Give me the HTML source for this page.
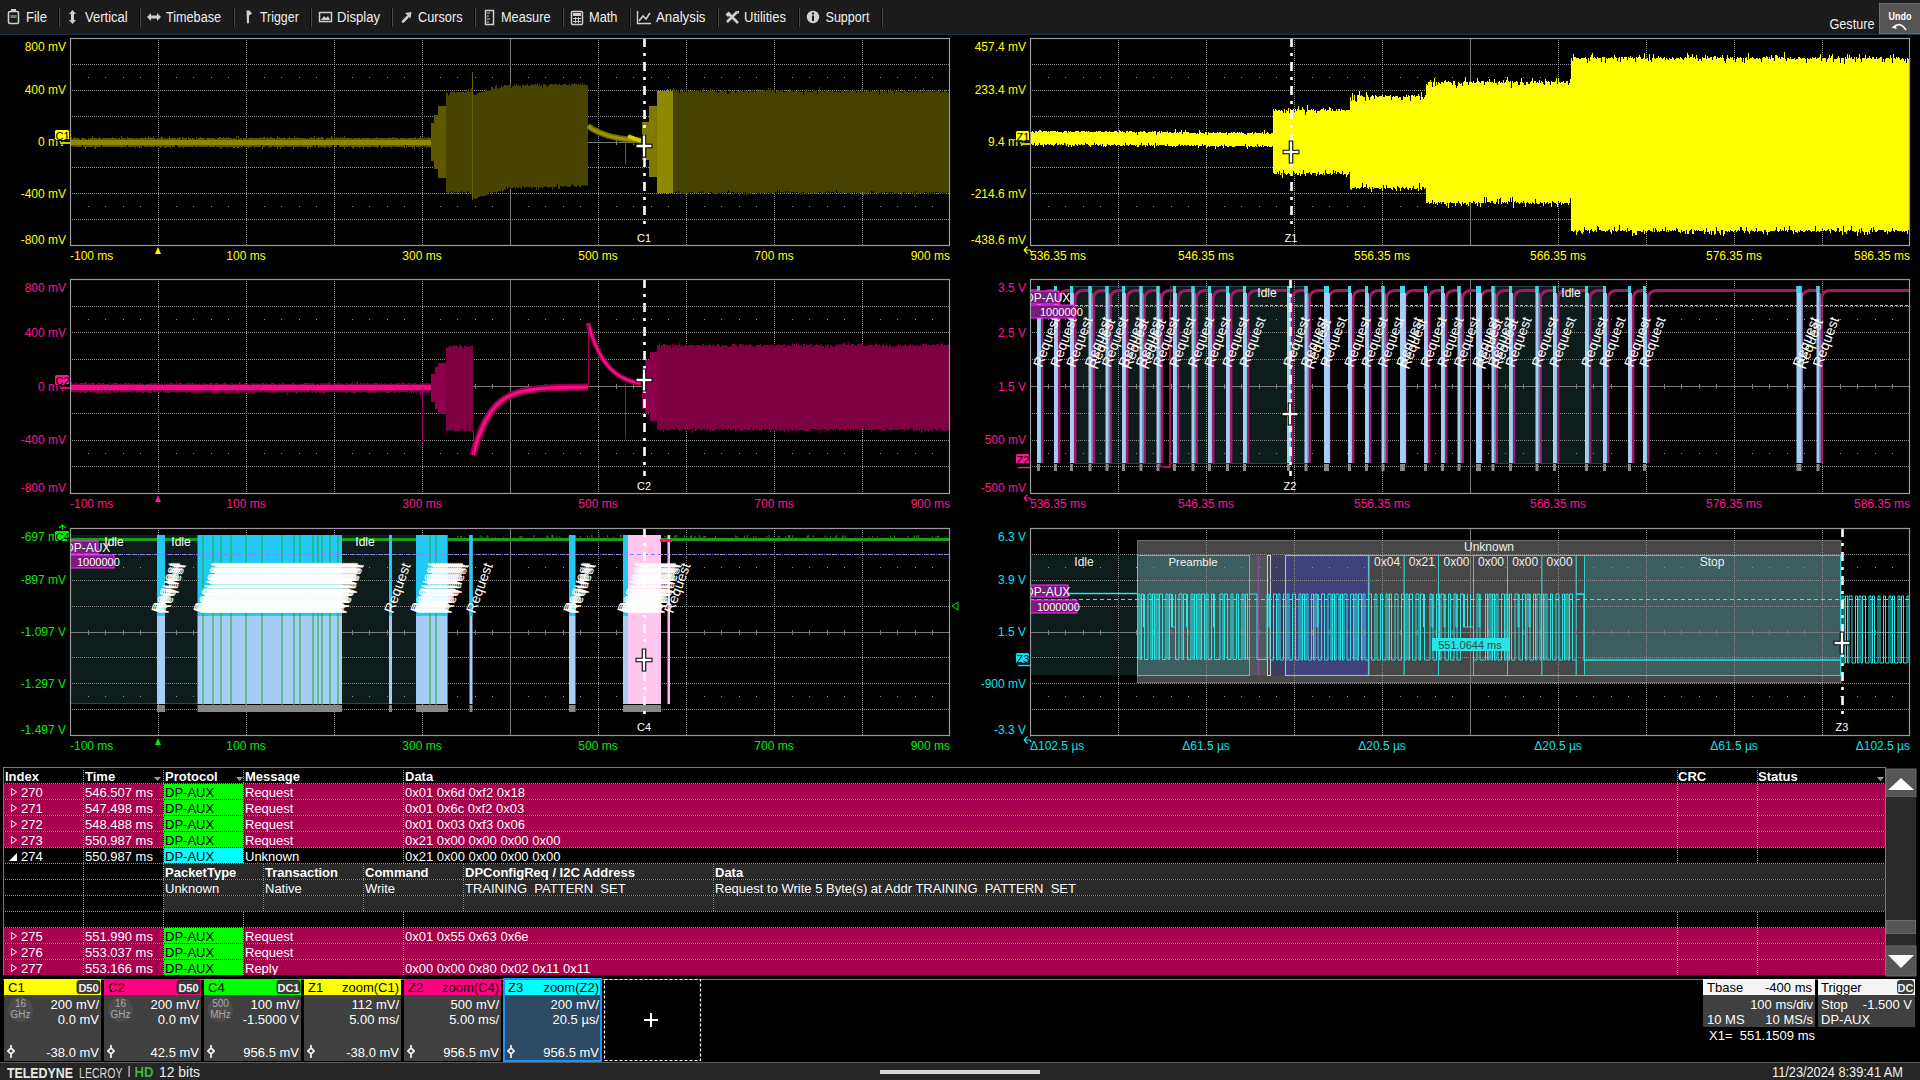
<!DOCTYPE html><html><head><meta charset="utf-8"><title>scope</title><style>
html,body{margin:0;padding:0;background:#000;width:1920px;height:1080px;overflow:hidden;}
svg text{font-family:"Liberation Sans", sans-serif;}
</style></head><body>
<svg width="1920" height="1080" viewBox="0 0 1920 1080" style="position:absolute;left:0;top:0;display:block" font-family="Liberation Sans, sans-serif">
<rect x="0" y="0" width="1920" height="1080" fill="#000" />
<defs><clipPath id="cl4"><rect x="1030" y="279" width="880" height="214"/></clipPath><clipPath id="cl5"><rect x="70" y="528" width="880" height="207"/></clipPath><clipPath id="cl6"><rect x="1030" y="528" width="880" height="207"/></clipPath></defs>
<rect x="0" y="0" width="1920" height="34" fill="#1b1b1b" />
<rect x="0" y="34" width="1920" height="1" fill="#1c3240" />
<rect x="58" y="8" width="1" height="19" fill="#050505" />
<rect x="59" y="8" width="1" height="19" fill="#4a4a4a" />
<rect x="139" y="8" width="1" height="19" fill="#050505" />
<rect x="140" y="8" width="1" height="19" fill="#4a4a4a" />
<rect x="233" y="8" width="1" height="19" fill="#050505" />
<rect x="234" y="8" width="1" height="19" fill="#4a4a4a" />
<rect x="310" y="8" width="1" height="19" fill="#050505" />
<rect x="311" y="8" width="1" height="19" fill="#4a4a4a" />
<rect x="391" y="8" width="1" height="19" fill="#050505" />
<rect x="392" y="8" width="1" height="19" fill="#4a4a4a" />
<rect x="474" y="8" width="1" height="19" fill="#050505" />
<rect x="475" y="8" width="1" height="19" fill="#4a4a4a" />
<rect x="562" y="8" width="1" height="19" fill="#050505" />
<rect x="563" y="8" width="1" height="19" fill="#4a4a4a" />
<rect x="629" y="8" width="1" height="19" fill="#050505" />
<rect x="630" y="8" width="1" height="19" fill="#4a4a4a" />
<rect x="717" y="8" width="1" height="19" fill="#050505" />
<rect x="718" y="8" width="1" height="19" fill="#4a4a4a" />
<rect x="798" y="8" width="1" height="19" fill="#050505" />
<rect x="799" y="8" width="1" height="19" fill="#4a4a4a" />
<rect x="881" y="8" width="1" height="19" fill="#050505" />
<rect x="882" y="8" width="1" height="19" fill="#4a4a4a" />
<text x="26" y="22.3" font-size="14" fill="#f0f0f0" text-anchor="start" font-weight="normal" textLength="21" lengthAdjust="spacingAndGlyphs" >File</text>
<text x="85" y="22.3" font-size="14" fill="#f0f0f0" text-anchor="start" font-weight="normal" textLength="42.75" lengthAdjust="spacingAndGlyphs" >Vertical</text>
<text x="166" y="22.3" font-size="14" fill="#f0f0f0" text-anchor="start" font-weight="normal" textLength="55" lengthAdjust="spacingAndGlyphs" >Timebase</text>
<text x="260" y="22.3" font-size="14" fill="#f0f0f0" text-anchor="start" font-weight="normal" textLength="38.75" lengthAdjust="spacingAndGlyphs" >Trigger</text>
<text x="337" y="22.3" font-size="14" fill="#f0f0f0" text-anchor="start" font-weight="normal" textLength="43" lengthAdjust="spacingAndGlyphs" >Display</text>
<text x="418" y="22.3" font-size="14" fill="#f0f0f0" text-anchor="start" font-weight="normal" textLength="44.5" lengthAdjust="spacingAndGlyphs" >Cursors</text>
<text x="501" y="22.3" font-size="14" fill="#f0f0f0" text-anchor="start" font-weight="normal" textLength="49.5" lengthAdjust="spacingAndGlyphs" >Measure</text>
<text x="589" y="22.3" font-size="14" fill="#f0f0f0" text-anchor="start" font-weight="normal" textLength="28.5" lengthAdjust="spacingAndGlyphs" >Math</text>
<text x="656" y="22.3" font-size="14" fill="#f0f0f0" text-anchor="start" font-weight="normal" textLength="49.5" lengthAdjust="spacingAndGlyphs" >Analysis</text>
<text x="744" y="22.3" font-size="14" fill="#f0f0f0" text-anchor="start" font-weight="normal" textLength="42" lengthAdjust="spacingAndGlyphs" >Utilities</text>
<text x="825.5" y="22.3" font-size="14" fill="#f0f0f0" text-anchor="start" font-weight="normal" textLength="44" lengthAdjust="spacingAndGlyphs" >Support</text>
<rect x="8.5" y="11.5" width="10" height="12" rx="1.5" fill="none" stroke="#cfcfcf" stroke-width="1.6"/>
<rect x="11" y="9" width="5" height="3" fill="#cfcfcf"/><rect x="10.5" y="15" width="6" height="3" fill="#777"/>
<path d="M72.5 10 L76 14 L74 14 L74 20 L76 20 L72.5 24 L69 20 L71 20 L71 14 L69 14 Z" fill="#cfcfcf"/>
<path d="M147 17 L151 13 L151 15.5 L157 15.5 L157 13 L161 17 L157 21 L157 18.5 L151 18.5 L151 21 Z" fill="#cfcfcf"/>
<path d="M246.5 10.5 L249.5 10.5 L252 13.5 L249 15.5 L249 23 L247 23.5 Z" fill="#cfcfcf"/>
<rect x="319.5" y="12.5" width="12" height="9" fill="none" stroke="#cfcfcf" stroke-width="1.5"/><path d="M321 20 L324 16 L326 18 L328 16 L330 20 Z" fill="#cfcfcf"/>
<path d="M403 21.5 L407.5 17" stroke="#cfcfcf" stroke-width="2.6" stroke-linecap="round"/><path d="M405 13 L411.5 12 L410.5 18.5 Z" fill="#cfcfcf"/>
<rect x="485.5" y="10.5" width="8" height="14" fill="none" stroke="#cfcfcf" stroke-width="1.5"/><path d="M487 13h3M487 16h2M487 19h3M487 22h2" stroke="#cfcfcf" stroke-width="1"/>
<rect x="571.5" y="11.5" width="11" height="13" rx="1" fill="none" stroke="#cfcfcf" stroke-width="1.5"/><rect x="573" y="13" width="8" height="3" fill="#cfcfcf"/><path d="M573 18.5h8M573 21.5h8M575.5 17v6M578.5 17v6" stroke="#cfcfcf" stroke-width="1"/>
<path d="M637.5 11 V23.5 H651" fill="none" stroke="#cfcfcf" stroke-width="1.4"/><path d="M639 21 L643 16 L646 19 L650 13" fill="none" stroke="#cfcfcf" stroke-width="1.6"/>
<path d="M728 13 L738 23 M737 12 L727 22" stroke="#cfcfcf" stroke-width="2.6"/><path d="M725.5 14.5 L728.5 11.5 L731 14 L728 17Z M736 11 L739 11 L739 14Z" fill="#cfcfcf"/>
<circle cx="813" cy="17" r="6.2" fill="#cfcfcf"/><rect x="812" y="15.5" width="2" height="5.5" fill="#1b1b1b"/><rect x="812" y="12.5" width="2" height="2" fill="#1b1b1b"/>
<text x="1829.5" y="29" font-size="14" fill="#f0f0f0" text-anchor="start" font-weight="normal" textLength="45" lengthAdjust="spacingAndGlyphs" >Gesture</text>
<rect x="1879.5" y="3.5" width="42" height="30" fill="#545454" stroke="#6e6e6e" stroke-width="1" />
<text x="1900" y="20" font-size="11" fill="#fff" text-anchor="middle" font-weight="bold" textLength="23" lengthAdjust="spacingAndGlyphs" >Undo</text>
<path d="M1894 27 Q1900 21 1906 30" fill="none" stroke="#fff" stroke-width="1.6"/><path d="M1891.5 27.5 L1896 24.5 L1896.5 29 Z" fill="#fff"/>
<path d="M158.5 40V245 M246.5 40V245 M334.5 40V245 M422.5 40V245 M598.5 40V245 M686.5 40V245 M774.5 40V245 M862.5 40V245 M72 64.5H950 M72 90.5H950 M72 116.5H950 M72 167.5H950 M72 193.5H950 M72 219.5H950" stroke="#8e8e8e" stroke-width="1" stroke-dasharray="1 1" fill="none"/>
<path d="M88 77h1v1h-1z M105 77h1v1h-1z M123 77h1v1h-1z M140 77h1v1h-1z M176 77h1v1h-1z M193 77h1v1h-1z M211 77h1v1h-1z M228 77h1v1h-1z M264 77h1v1h-1z M281 77h1v1h-1z M299 77h1v1h-1z M316 77h1v1h-1z M352 77h1v1h-1z M369 77h1v1h-1z M387 77h1v1h-1z M404 77h1v1h-1z M440 77h1v1h-1z M457 77h1v1h-1z M475 77h1v1h-1z M492 77h1v1h-1z M528 77h1v1h-1z M545 77h1v1h-1z M563 77h1v1h-1z M580 77h1v1h-1z M616 77h1v1h-1z M633 77h1v1h-1z M651 77h1v1h-1z M668 77h1v1h-1z M704 77h1v1h-1z M721 77h1v1h-1z M739 77h1v1h-1z M756 77h1v1h-1z M792 77h1v1h-1z M809 77h1v1h-1z M827 77h1v1h-1z M844 77h1v1h-1z M880 77h1v1h-1z M897 77h1v1h-1z M915 77h1v1h-1z M932 77h1v1h-1z M88 206h1v1h-1z M105 206h1v1h-1z M123 206h1v1h-1z M140 206h1v1h-1z M176 206h1v1h-1z M193 206h1v1h-1z M211 206h1v1h-1z M228 206h1v1h-1z M264 206h1v1h-1z M281 206h1v1h-1z M299 206h1v1h-1z M316 206h1v1h-1z M352 206h1v1h-1z M369 206h1v1h-1z M387 206h1v1h-1z M404 206h1v1h-1z M440 206h1v1h-1z M457 206h1v1h-1z M475 206h1v1h-1z M492 206h1v1h-1z M528 206h1v1h-1z M545 206h1v1h-1z M563 206h1v1h-1z M580 206h1v1h-1z M616 206h1v1h-1z M633 206h1v1h-1z M651 206h1v1h-1z M668 206h1v1h-1z M704 206h1v1h-1z M721 206h1v1h-1z M739 206h1v1h-1z M756 206h1v1h-1z M792 206h1v1h-1z M809 206h1v1h-1z M827 206h1v1h-1z M844 206h1v1h-1z M880 206h1v1h-1z M897 206h1v1h-1z M915 206h1v1h-1z M932 206h1v1h-1z" fill="#8e8e8e"/>
<path d="M510.5 38V245 M70 142.5H950 M88.5 140.0V145.0 M105.5 140.0V145.0 M123.5 140.0V145.0 M140.5 140.0V145.0 M176.5 140.0V145.0 M193.5 140.0V145.0 M211.5 140.0V145.0 M228.5 140.0V145.0 M264.5 140.0V145.0 M281.5 140.0V145.0 M299.5 140.0V145.0 M316.5 140.0V145.0 M352.5 140.0V145.0 M369.5 140.0V145.0 M387.5 140.0V145.0 M404.5 140.0V145.0 M440.5 140.0V145.0 M457.5 140.0V145.0 M475.5 140.0V145.0 M492.5 140.0V145.0 M528.5 140.0V145.0 M545.5 140.0V145.0 M563.5 140.0V145.0 M580.5 140.0V145.0 M616.5 140.0V145.0 M633.5 140.0V145.0 M651.5 140.0V145.0 M668.5 140.0V145.0 M704.5 140.0V145.0 M721.5 140.0V145.0 M739.5 140.0V145.0 M756.5 140.0V145.0 M792.5 140.0V145.0 M809.5 140.0V145.0 M827.5 140.0V145.0 M844.5 140.0V145.0 M880.5 140.0V145.0 M897.5 140.0V145.0 M915.5 140.0V145.0 M932.5 140.0V145.0" stroke="#7a7a7a" stroke-width="1" fill="none"/>
<path d="M1118.5 40V245 M1206.5 40V245 M1294.5 40V245 M1382.5 40V245 M1558.5 40V245 M1646.5 40V245 M1734.5 40V245 M1822.5 40V245 M1032 64.5H1910 M1032 90.5H1910 M1032 116.5H1910 M1032 167.5H1910 M1032 193.5H1910 M1032 219.5H1910" stroke="#8e8e8e" stroke-width="1" stroke-dasharray="1 1" fill="none"/>
<path d="M1048 77h1v1h-1z M1065 77h1v1h-1z M1083 77h1v1h-1z M1100 77h1v1h-1z M1136 77h1v1h-1z M1153 77h1v1h-1z M1171 77h1v1h-1z M1188 77h1v1h-1z M1224 77h1v1h-1z M1241 77h1v1h-1z M1259 77h1v1h-1z M1276 77h1v1h-1z M1312 77h1v1h-1z M1329 77h1v1h-1z M1347 77h1v1h-1z M1364 77h1v1h-1z M1400 77h1v1h-1z M1417 77h1v1h-1z M1435 77h1v1h-1z M1452 77h1v1h-1z M1488 77h1v1h-1z M1505 77h1v1h-1z M1523 77h1v1h-1z M1540 77h1v1h-1z M1576 77h1v1h-1z M1593 77h1v1h-1z M1611 77h1v1h-1z M1628 77h1v1h-1z M1664 77h1v1h-1z M1681 77h1v1h-1z M1699 77h1v1h-1z M1716 77h1v1h-1z M1752 77h1v1h-1z M1769 77h1v1h-1z M1787 77h1v1h-1z M1804 77h1v1h-1z M1840 77h1v1h-1z M1857 77h1v1h-1z M1875 77h1v1h-1z M1892 77h1v1h-1z M1048 206h1v1h-1z M1065 206h1v1h-1z M1083 206h1v1h-1z M1100 206h1v1h-1z M1136 206h1v1h-1z M1153 206h1v1h-1z M1171 206h1v1h-1z M1188 206h1v1h-1z M1224 206h1v1h-1z M1241 206h1v1h-1z M1259 206h1v1h-1z M1276 206h1v1h-1z M1312 206h1v1h-1z M1329 206h1v1h-1z M1347 206h1v1h-1z M1364 206h1v1h-1z M1400 206h1v1h-1z M1417 206h1v1h-1z M1435 206h1v1h-1z M1452 206h1v1h-1z M1488 206h1v1h-1z M1505 206h1v1h-1z M1523 206h1v1h-1z M1540 206h1v1h-1z M1576 206h1v1h-1z M1593 206h1v1h-1z M1611 206h1v1h-1z M1628 206h1v1h-1z M1664 206h1v1h-1z M1681 206h1v1h-1z M1699 206h1v1h-1z M1716 206h1v1h-1z M1752 206h1v1h-1z M1769 206h1v1h-1z M1787 206h1v1h-1z M1804 206h1v1h-1z M1840 206h1v1h-1z M1857 206h1v1h-1z M1875 206h1v1h-1z M1892 206h1v1h-1z" fill="#8e8e8e"/>
<path d="M1470.5 38V245 M1030 142.5H1910 M1048.5 140.0V145.0 M1065.5 140.0V145.0 M1083.5 140.0V145.0 M1100.5 140.0V145.0 M1136.5 140.0V145.0 M1153.5 140.0V145.0 M1171.5 140.0V145.0 M1188.5 140.0V145.0 M1224.5 140.0V145.0 M1241.5 140.0V145.0 M1259.5 140.0V145.0 M1276.5 140.0V145.0 M1312.5 140.0V145.0 M1329.5 140.0V145.0 M1347.5 140.0V145.0 M1364.5 140.0V145.0 M1400.5 140.0V145.0 M1417.5 140.0V145.0 M1435.5 140.0V145.0 M1452.5 140.0V145.0 M1488.5 140.0V145.0 M1505.5 140.0V145.0 M1523.5 140.0V145.0 M1540.5 140.0V145.0 M1576.5 140.0V145.0 M1593.5 140.0V145.0 M1611.5 140.0V145.0 M1628.5 140.0V145.0 M1664.5 140.0V145.0 M1681.5 140.0V145.0 M1699.5 140.0V145.0 M1716.5 140.0V145.0 M1752.5 140.0V145.0 M1769.5 140.0V145.0 M1787.5 140.0V145.0 M1804.5 140.0V145.0 M1840.5 140.0V145.0 M1857.5 140.0V145.0 M1875.5 140.0V145.0 M1892.5 140.0V145.0" stroke="#7a7a7a" stroke-width="1" fill="none"/>
<path d="M158.5 281V493 M246.5 281V493 M334.5 281V493 M422.5 281V493 M598.5 281V493 M686.5 281V493 M774.5 281V493 M862.5 281V493 M72 306.5H950 M72 332.5H950 M72 359.5H950 M72 413.5H950 M72 440.5H950 M72 466.5H950" stroke="#8e8e8e" stroke-width="1" stroke-dasharray="1 1" fill="none"/>
<path d="M88 319h1v1h-1z M105 319h1v1h-1z M123 319h1v1h-1z M140 319h1v1h-1z M176 319h1v1h-1z M193 319h1v1h-1z M211 319h1v1h-1z M228 319h1v1h-1z M264 319h1v1h-1z M281 319h1v1h-1z M299 319h1v1h-1z M316 319h1v1h-1z M352 319h1v1h-1z M369 319h1v1h-1z M387 319h1v1h-1z M404 319h1v1h-1z M440 319h1v1h-1z M457 319h1v1h-1z M475 319h1v1h-1z M492 319h1v1h-1z M528 319h1v1h-1z M545 319h1v1h-1z M563 319h1v1h-1z M580 319h1v1h-1z M616 319h1v1h-1z M633 319h1v1h-1z M651 319h1v1h-1z M668 319h1v1h-1z M704 319h1v1h-1z M721 319h1v1h-1z M739 319h1v1h-1z M756 319h1v1h-1z M792 319h1v1h-1z M809 319h1v1h-1z M827 319h1v1h-1z M844 319h1v1h-1z M880 319h1v1h-1z M897 319h1v1h-1z M915 319h1v1h-1z M932 319h1v1h-1z M88 453h1v1h-1z M105 453h1v1h-1z M123 453h1v1h-1z M140 453h1v1h-1z M176 453h1v1h-1z M193 453h1v1h-1z M211 453h1v1h-1z M228 453h1v1h-1z M264 453h1v1h-1z M281 453h1v1h-1z M299 453h1v1h-1z M316 453h1v1h-1z M352 453h1v1h-1z M369 453h1v1h-1z M387 453h1v1h-1z M404 453h1v1h-1z M440 453h1v1h-1z M457 453h1v1h-1z M475 453h1v1h-1z M492 453h1v1h-1z M528 453h1v1h-1z M545 453h1v1h-1z M563 453h1v1h-1z M580 453h1v1h-1z M616 453h1v1h-1z M633 453h1v1h-1z M651 453h1v1h-1z M668 453h1v1h-1z M704 453h1v1h-1z M721 453h1v1h-1z M739 453h1v1h-1z M756 453h1v1h-1z M792 453h1v1h-1z M809 453h1v1h-1z M827 453h1v1h-1z M844 453h1v1h-1z M880 453h1v1h-1z M897 453h1v1h-1z M915 453h1v1h-1z M932 453h1v1h-1z" fill="#8e8e8e"/>
<path d="M510.5 279V493 M70 386.5H950 M88.5 384.0V389.0 M105.5 384.0V389.0 M123.5 384.0V389.0 M140.5 384.0V389.0 M176.5 384.0V389.0 M193.5 384.0V389.0 M211.5 384.0V389.0 M228.5 384.0V389.0 M264.5 384.0V389.0 M281.5 384.0V389.0 M299.5 384.0V389.0 M316.5 384.0V389.0 M352.5 384.0V389.0 M369.5 384.0V389.0 M387.5 384.0V389.0 M404.5 384.0V389.0 M440.5 384.0V389.0 M457.5 384.0V389.0 M475.5 384.0V389.0 M492.5 384.0V389.0 M528.5 384.0V389.0 M545.5 384.0V389.0 M563.5 384.0V389.0 M580.5 384.0V389.0 M616.5 384.0V389.0 M633.5 384.0V389.0 M651.5 384.0V389.0 M668.5 384.0V389.0 M704.5 384.0V389.0 M721.5 384.0V389.0 M739.5 384.0V389.0 M756.5 384.0V389.0 M792.5 384.0V389.0 M809.5 384.0V389.0 M827.5 384.0V389.0 M844.5 384.0V389.0 M880.5 384.0V389.0 M897.5 384.0V389.0 M915.5 384.0V389.0 M932.5 384.0V389.0" stroke="#7a7a7a" stroke-width="1" fill="none"/>
<path d="M1118.5 281V493 M1206.5 281V493 M1294.5 281V493 M1382.5 281V493 M1558.5 281V493 M1646.5 281V493 M1734.5 281V493 M1822.5 281V493 M1032 306.5H1910 M1032 332.5H1910 M1032 359.5H1910 M1032 413.5H1910 M1032 440.5H1910 M1032 466.5H1910" stroke="#8e8e8e" stroke-width="1" stroke-dasharray="1 1" fill="none"/>
<path d="M1048 319h1v1h-1z M1065 319h1v1h-1z M1083 319h1v1h-1z M1100 319h1v1h-1z M1136 319h1v1h-1z M1153 319h1v1h-1z M1171 319h1v1h-1z M1188 319h1v1h-1z M1224 319h1v1h-1z M1241 319h1v1h-1z M1259 319h1v1h-1z M1276 319h1v1h-1z M1312 319h1v1h-1z M1329 319h1v1h-1z M1347 319h1v1h-1z M1364 319h1v1h-1z M1400 319h1v1h-1z M1417 319h1v1h-1z M1435 319h1v1h-1z M1452 319h1v1h-1z M1488 319h1v1h-1z M1505 319h1v1h-1z M1523 319h1v1h-1z M1540 319h1v1h-1z M1576 319h1v1h-1z M1593 319h1v1h-1z M1611 319h1v1h-1z M1628 319h1v1h-1z M1664 319h1v1h-1z M1681 319h1v1h-1z M1699 319h1v1h-1z M1716 319h1v1h-1z M1752 319h1v1h-1z M1769 319h1v1h-1z M1787 319h1v1h-1z M1804 319h1v1h-1z M1840 319h1v1h-1z M1857 319h1v1h-1z M1875 319h1v1h-1z M1892 319h1v1h-1z M1048 453h1v1h-1z M1065 453h1v1h-1z M1083 453h1v1h-1z M1100 453h1v1h-1z M1136 453h1v1h-1z M1153 453h1v1h-1z M1171 453h1v1h-1z M1188 453h1v1h-1z M1224 453h1v1h-1z M1241 453h1v1h-1z M1259 453h1v1h-1z M1276 453h1v1h-1z M1312 453h1v1h-1z M1329 453h1v1h-1z M1347 453h1v1h-1z M1364 453h1v1h-1z M1400 453h1v1h-1z M1417 453h1v1h-1z M1435 453h1v1h-1z M1452 453h1v1h-1z M1488 453h1v1h-1z M1505 453h1v1h-1z M1523 453h1v1h-1z M1540 453h1v1h-1z M1576 453h1v1h-1z M1593 453h1v1h-1z M1611 453h1v1h-1z M1628 453h1v1h-1z M1664 453h1v1h-1z M1681 453h1v1h-1z M1699 453h1v1h-1z M1716 453h1v1h-1z M1752 453h1v1h-1z M1769 453h1v1h-1z M1787 453h1v1h-1z M1804 453h1v1h-1z M1840 453h1v1h-1z M1857 453h1v1h-1z M1875 453h1v1h-1z M1892 453h1v1h-1z" fill="#8e8e8e"/>
<path d="M1470.5 279V493 M1030 386.5H1910 M1048.5 384.0V389.0 M1065.5 384.0V389.0 M1083.5 384.0V389.0 M1100.5 384.0V389.0 M1136.5 384.0V389.0 M1153.5 384.0V389.0 M1171.5 384.0V389.0 M1188.5 384.0V389.0 M1224.5 384.0V389.0 M1241.5 384.0V389.0 M1259.5 384.0V389.0 M1276.5 384.0V389.0 M1312.5 384.0V389.0 M1329.5 384.0V389.0 M1347.5 384.0V389.0 M1364.5 384.0V389.0 M1400.5 384.0V389.0 M1417.5 384.0V389.0 M1435.5 384.0V389.0 M1452.5 384.0V389.0 M1488.5 384.0V389.0 M1505.5 384.0V389.0 M1523.5 384.0V389.0 M1540.5 384.0V389.0 M1576.5 384.0V389.0 M1593.5 384.0V389.0 M1611.5 384.0V389.0 M1628.5 384.0V389.0 M1664.5 384.0V389.0 M1681.5 384.0V389.0 M1699.5 384.0V389.0 M1716.5 384.0V389.0 M1752.5 384.0V389.0 M1769.5 384.0V389.0 M1787.5 384.0V389.0 M1804.5 384.0V389.0 M1840.5 384.0V389.0 M1857.5 384.0V389.0 M1875.5 384.0V389.0 M1892.5 384.0V389.0" stroke="#7a7a7a" stroke-width="1" fill="none"/>
<path d="M158.5 530V735 M246.5 530V735 M334.5 530V735 M422.5 530V735 M598.5 530V735 M686.5 530V735 M774.5 530V735 M862.5 530V735 M72 554.5H950 M72 580.5H950 M72 606.5H950 M72 657.5H950 M72 683.5H950 M72 709.5H950" stroke="#8e8e8e" stroke-width="1" stroke-dasharray="1 1" fill="none"/>
<path d="M88 567h1v1h-1z M105 567h1v1h-1z M123 567h1v1h-1z M140 567h1v1h-1z M176 567h1v1h-1z M193 567h1v1h-1z M211 567h1v1h-1z M228 567h1v1h-1z M264 567h1v1h-1z M281 567h1v1h-1z M299 567h1v1h-1z M316 567h1v1h-1z M352 567h1v1h-1z M369 567h1v1h-1z M387 567h1v1h-1z M404 567h1v1h-1z M440 567h1v1h-1z M457 567h1v1h-1z M475 567h1v1h-1z M492 567h1v1h-1z M528 567h1v1h-1z M545 567h1v1h-1z M563 567h1v1h-1z M580 567h1v1h-1z M616 567h1v1h-1z M633 567h1v1h-1z M651 567h1v1h-1z M668 567h1v1h-1z M704 567h1v1h-1z M721 567h1v1h-1z M739 567h1v1h-1z M756 567h1v1h-1z M792 567h1v1h-1z M809 567h1v1h-1z M827 567h1v1h-1z M844 567h1v1h-1z M880 567h1v1h-1z M897 567h1v1h-1z M915 567h1v1h-1z M932 567h1v1h-1z M88 696h1v1h-1z M105 696h1v1h-1z M123 696h1v1h-1z M140 696h1v1h-1z M176 696h1v1h-1z M193 696h1v1h-1z M211 696h1v1h-1z M228 696h1v1h-1z M264 696h1v1h-1z M281 696h1v1h-1z M299 696h1v1h-1z M316 696h1v1h-1z M352 696h1v1h-1z M369 696h1v1h-1z M387 696h1v1h-1z M404 696h1v1h-1z M440 696h1v1h-1z M457 696h1v1h-1z M475 696h1v1h-1z M492 696h1v1h-1z M528 696h1v1h-1z M545 696h1v1h-1z M563 696h1v1h-1z M580 696h1v1h-1z M616 696h1v1h-1z M633 696h1v1h-1z M651 696h1v1h-1z M668 696h1v1h-1z M704 696h1v1h-1z M721 696h1v1h-1z M739 696h1v1h-1z M756 696h1v1h-1z M792 696h1v1h-1z M809 696h1v1h-1z M827 696h1v1h-1z M844 696h1v1h-1z M880 696h1v1h-1z M897 696h1v1h-1z M915 696h1v1h-1z M932 696h1v1h-1z" fill="#8e8e8e"/>
<path d="M510.5 528V735 M70 632.5H950 M88.5 630.0V635.0 M105.5 630.0V635.0 M123.5 630.0V635.0 M140.5 630.0V635.0 M176.5 630.0V635.0 M193.5 630.0V635.0 M211.5 630.0V635.0 M228.5 630.0V635.0 M264.5 630.0V635.0 M281.5 630.0V635.0 M299.5 630.0V635.0 M316.5 630.0V635.0 M352.5 630.0V635.0 M369.5 630.0V635.0 M387.5 630.0V635.0 M404.5 630.0V635.0 M440.5 630.0V635.0 M457.5 630.0V635.0 M475.5 630.0V635.0 M492.5 630.0V635.0 M528.5 630.0V635.0 M545.5 630.0V635.0 M563.5 630.0V635.0 M580.5 630.0V635.0 M616.5 630.0V635.0 M633.5 630.0V635.0 M651.5 630.0V635.0 M668.5 630.0V635.0 M704.5 630.0V635.0 M721.5 630.0V635.0 M739.5 630.0V635.0 M756.5 630.0V635.0 M792.5 630.0V635.0 M809.5 630.0V635.0 M827.5 630.0V635.0 M844.5 630.0V635.0 M880.5 630.0V635.0 M897.5 630.0V635.0 M915.5 630.0V635.0 M932.5 630.0V635.0" stroke="#7a7a7a" stroke-width="1" fill="none"/>
<path d="M1118.5 530V735 M1206.5 530V735 M1294.5 530V735 M1382.5 530V735 M1558.5 530V735 M1646.5 530V735 M1734.5 530V735 M1822.5 530V735 M1032 554.5H1910 M1032 580.5H1910 M1032 606.5H1910 M1032 657.5H1910 M1032 683.5H1910 M1032 709.5H1910" stroke="#8e8e8e" stroke-width="1" stroke-dasharray="1 1" fill="none"/>
<path d="M1048 567h1v1h-1z M1065 567h1v1h-1z M1083 567h1v1h-1z M1100 567h1v1h-1z M1136 567h1v1h-1z M1153 567h1v1h-1z M1171 567h1v1h-1z M1188 567h1v1h-1z M1224 567h1v1h-1z M1241 567h1v1h-1z M1259 567h1v1h-1z M1276 567h1v1h-1z M1312 567h1v1h-1z M1329 567h1v1h-1z M1347 567h1v1h-1z M1364 567h1v1h-1z M1400 567h1v1h-1z M1417 567h1v1h-1z M1435 567h1v1h-1z M1452 567h1v1h-1z M1488 567h1v1h-1z M1505 567h1v1h-1z M1523 567h1v1h-1z M1540 567h1v1h-1z M1576 567h1v1h-1z M1593 567h1v1h-1z M1611 567h1v1h-1z M1628 567h1v1h-1z M1664 567h1v1h-1z M1681 567h1v1h-1z M1699 567h1v1h-1z M1716 567h1v1h-1z M1752 567h1v1h-1z M1769 567h1v1h-1z M1787 567h1v1h-1z M1804 567h1v1h-1z M1840 567h1v1h-1z M1857 567h1v1h-1z M1875 567h1v1h-1z M1892 567h1v1h-1z M1048 696h1v1h-1z M1065 696h1v1h-1z M1083 696h1v1h-1z M1100 696h1v1h-1z M1136 696h1v1h-1z M1153 696h1v1h-1z M1171 696h1v1h-1z M1188 696h1v1h-1z M1224 696h1v1h-1z M1241 696h1v1h-1z M1259 696h1v1h-1z M1276 696h1v1h-1z M1312 696h1v1h-1z M1329 696h1v1h-1z M1347 696h1v1h-1z M1364 696h1v1h-1z M1400 696h1v1h-1z M1417 696h1v1h-1z M1435 696h1v1h-1z M1452 696h1v1h-1z M1488 696h1v1h-1z M1505 696h1v1h-1z M1523 696h1v1h-1z M1540 696h1v1h-1z M1576 696h1v1h-1z M1593 696h1v1h-1z M1611 696h1v1h-1z M1628 696h1v1h-1z M1664 696h1v1h-1z M1681 696h1v1h-1z M1699 696h1v1h-1z M1716 696h1v1h-1z M1752 696h1v1h-1z M1769 696h1v1h-1z M1787 696h1v1h-1z M1804 696h1v1h-1z M1840 696h1v1h-1z M1857 696h1v1h-1z M1875 696h1v1h-1z M1892 696h1v1h-1z" fill="#8e8e8e"/>
<path d="M1470.5 528V735 M1030 632.5H1910 M1048.5 630.0V635.0 M1065.5 630.0V635.0 M1083.5 630.0V635.0 M1100.5 630.0V635.0 M1136.5 630.0V635.0 M1153.5 630.0V635.0 M1171.5 630.0V635.0 M1188.5 630.0V635.0 M1224.5 630.0V635.0 M1241.5 630.0V635.0 M1259.5 630.0V635.0 M1276.5 630.0V635.0 M1312.5 630.0V635.0 M1329.5 630.0V635.0 M1347.5 630.0V635.0 M1364.5 630.0V635.0 M1400.5 630.0V635.0 M1417.5 630.0V635.0 M1435.5 630.0V635.0 M1452.5 630.0V635.0 M1488.5 630.0V635.0 M1505.5 630.0V635.0 M1523.5 630.0V635.0 M1540.5 630.0V635.0 M1576.5 630.0V635.0 M1593.5 630.0V635.0 M1611.5 630.0V635.0 M1628.5 630.0V635.0 M1664.5 630.0V635.0 M1681.5 630.0V635.0 M1699.5 630.0V635.0 M1716.5 630.0V635.0 M1752.5 630.0V635.0 M1769.5 630.0V635.0 M1787.5 630.0V635.0 M1804.5 630.0V635.0 M1840.5 630.0V635.0 M1857.5 630.0V635.0 M1875.5 630.0V635.0 M1892.5 630.0V635.0" stroke="#7a7a7a" stroke-width="1" fill="none"/>
<!--WAVES-->
<path d="M70 138V138H71V137H72V139H73V138H74V137H75V138H76V138H77V138H78V138H79V139H80V140H81V138H82V138H83V138H84V138H85V139H86V139H87V140H88V138H89V139H90V138H91V138H92V136H93V138H94V138H95V138H96V138H97V139H98V138H99V137H100V138H101V139H102V138H103V138H104V138H105V138H106V138H107V138H108V138H109V138H110V138H111V138H112V137H113V138H114V138H115V138H116V138H117V139H118V138H119V138H120V139H121V136H122V138H123V138H124V138H125V138H126V139H127V137H128V138H129V138H130V138H131V138H132V138H133V138H134V139H135V138H136V138H137V138H138V139H139V138H140V138H141V138H142V138H143V138H144V138H145V137H146V138H147V138H148V136H149V138H150V137H151V138H152V138H153V137H154V138H155V139H156V139H157V138H158V138H159V138H160V138H161V137H162V137H163V139H164V138H165V138H166V139H167V138H168V138H169V136H170V138H171V138H172V138H173V138H174V138H175V138H176V139H177V138H178V138H179V137H180V138H181V140H182V137H183V138H184V138H185V138H186V138H187V140H188V137H189V138H190V138H191V139H192V138H193V138H194V139H195V140H196V137H197V139H198V138H199V138H200V137H201V138H202V138H203V138H204V138H205V140H206V138H207V138H208V138H209V138H210V138H211V138H212V138H213V138H214V138H215V139H216V139H217V138H218V138H219V137H220V137H221V138H222V138H223V137H224V138H225V138H226V137H227V138H228V137H229V138H230V138H231V138H232V139H233V138H234V138H235V139H236V136H237V140H238V136H239V139H240V138H241V138H242V140H243V138H244V138H245V138H246V137H247V139H248V138H249V138H250V138H251V137H252V138H253V138H254V138H255V138H256V138H257V138H258V138H259V138H260V137H261V138H262V138H263V137H264V137H265V138H266V138H267V137H268V138H269V138H270V137H271V137H272V138H273V138H274V138H275V139H276V138H277V136H278V138H279V137H280V138H281V138H282V138H283V138H284V137H285V138H286V139H287V138H288V138H289V137H290V138H291V138H292V138H293V138H294V136H295V138H296V138H297V137H298V138H299V138H300V138H301V138H302V138H303V138H304V138H305V138H306V139H307V138H308V139H309V138H310V138H311V137H312V138H313V138H314V136H315V139H316V138H317V138H318V137H319V138H320V138H321V137H322V137H323V138H324V140H325V139H326V138H327V138H328V138H329V138H330V138H331V136H332V137H333V139H334V136H335V138H336V137H337V138H338V138H339V138H340V137H341V138H342V137H343V138H344V136H345V138H346V138H347V138H348V138H349V138H350V138H351V138H352V139H353V138H354V138H355V138H356V138H357V138H358V138H359V138H360V139H361V138H362V138H363V138H364V138H365V138H366V138H367V138H368V138H369V138H370V138H371V139H372V138H373V138H374V138H375V138H376V137H377V138H378V138H379V138H380V138H381V138H382V138H383V138H384V138H385V138H386V138H387V138H388V138H389V137H390V138H391V138H392V137H393V138H394V137H395V138H396V138H397V138H398V138H399V139H400V138H401V138H402V138H403V138H404V138H405V138H406V139H407V138H408V138H409V138H410V138H411V138H412V138H413V138H414V138H415V137H416V139H417V138H418V138H419V138H420V136H421V138H422V138H423V138H424V137H425V139H426V138H427V138H428V137H429V138H430V138H431V147V147H430V147H429V147H428V147H427V148H426V146H425V147H424V146H423V147H422V147H421V147H420V147H419V147H418V147H417V147H416V146H415V149H414V147H413V148H412V147H411V147H410V147H409V147H408V146H407V148H406V145H405V148H404V147H403V147H402V147H401V147H400V147H399V147H398V147H397V147H396V147H395V147H394V146H393V147H392V148H391V147H390V147H389V147H388V147H387V147H386V147H385V147H384V147H383V147H382V148H381V147H380V145H379V147H378V148H377V147H376V147H375V147H374V147H373V146H372V147H371V147H370V148H369V147H368V147H367V147H366V147H365V147H364V149H363V147H362V147H361V147H360V148H359V147H358V147H357V147H356V147H355V147H354V149H353V148H352V147H351V146H350V147H349V146H348V147H347V147H346V147H345V149H344V147H343V147H342V147H341V147H340V147H339V145H338V145H337V147H336V147H335V146H334V145H333V146H332V147H331V147H330V148H329V147H328V147H327V146H326V148H325V148H324V147H323V147H322V147H321V147H320V147H319V148H318V146H317V145H316V147H315V147H314V145H313V147H312V147H311V148H310V147H309V148H308V149H307V147H306V147H305V147H304V147H303V147H302V147H301V146H300V147H299V147H298V147H297V147H296V147H295V147H294V149H293V146H292V147H291V147H290V147H289V147H288V147H287V147H286V146H285V147H284V147H283V147H282V147H281V149H280V147H279V147H278V149H277V147H276V147H275V147H274V146H273V146H272V147H271V147H270V148H269V147H268V146H267V146H266V146H265V147H264V147H263V149H262V145H261V147H260V147H259V147H258V147H257V147H256V147H255V148H254V146H253V147H252V147H251V147H250V147H249V148H248V147H247V147H246V147H245V147H244V146H243V147H242V147H241V146H240V147H239V148H238V148H237V147H236V147H235V148H234V148H233V147H232V147H231V147H230V147H229V147H228V148H227V147H226V147H225V147H224V147H223V147H222V149H221V148H220V147H219V147H218V147H217V147H216V146H215V147H214V147H213V147H212V147H211V147H210V147H209V146H208V147H207V147H206V147H205V147H204V147H203V147H202V147H201V147H200V147H199V146H198V147H197V147H196V147H195V146H194V147H193V147H192V147H191V147H190V147H189V147H188V147H187V147H186V147H185V147H184V148H183V147H182V147H181V147H180V148H179V147H178V146H177V145H176V145H175V147H174V147H173V147H172V146H171V148H170V147H169V147H168V147H167V147H166V148H165V148H164V146H163V147H162V147H161V148H160V147H159V147H158V147H157V147H156V146H155V147H154V147H153V147H152V147H151V147H150V147H149V146H148V147H147V147H146V147H145V147H144V146H143V146H142V148H141V147H140V148H139V147H138V147H137V146H136V148H135V147H134V147H133V147H132V147H131V147H130V147H129V147H128V145H127V147H126V147H125V147H124V147H123V147H122V148H121V147H120V147H119V147H118V147H117V147H116V147H115V147H114V147H113V147H112V147H111V147H110V147H109V147H108V147H107V147H106V147H105V147H104V147H103V147H102V145H101V147H100V147H99V147H98V147H97V147H96V149H95V148H94V146H93V147H92V147H91V147H90V147H89V147H88V147H87V147H86V149H85V147H84V147H83V145H82V147H81V147H80V147H79V147H78V147H77V147H76V147H75V147H74V146H73V147H72V146H71V146H70Z" fill="#5a5500" shape-rendering="crispEdges"/>
<path d="M70 140V140H71V140H72V140H73V140H74V140H75V140H76V140H77V140H78V140H79V140H80V140H81V140H82V140H83V140H84V140H85V140H86V140H87V140H88V140H89V140H90V140H91V140H92V140H93V140H94V140H95V140H96V140H97V140H98V140H99V140H100V140H101V140H102V140H103V140H104V140H105V140H106V140H107V140H108V140H109V140H110V140H111V140H112V140H113V140H114V140H115V140H116V140H117V140H118V140H119V140H120V140H121V140H122V140H123V140H124V140H125V140H126V140H127V140H128V140H129V140H130V140H131V140H132V140H133V140H134V140H135V140H136V140H137V140H138V140H139V140H140V140H141V140H142V140H143V140H144V140H145V140H146V140H147V140H148V140H149V140H150V140H151V140H152V140H153V140H154V140H155V140H156V140H157V140H158V140H159V140H160V140H161V140H162V140H163V140H164V140H165V140H166V140H167V140H168V140H169V140H170V140H171V140H172V140H173V140H174V140H175V140H176V140H177V140H178V140H179V140H180V140H181V140H182V140H183V140H184V140H185V140H186V140H187V140H188V140H189V140H190V140H191V140H192V140H193V140H194V140H195V140H196V140H197V140H198V140H199V140H200V140H201V140H202V140H203V140H204V140H205V140H206V140H207V140H208V140H209V140H210V140H211V140H212V140H213V140H214V140H215V140H216V140H217V140H218V140H219V140H220V140H221V140H222V140H223V140H224V140H225V140H226V140H227V140H228V140H229V140H230V140H231V140H232V140H233V140H234V140H235V140H236V140H237V140H238V140H239V140H240V140H241V140H242V140H243V140H244V140H245V140H246V140H247V140H248V140H249V140H250V140H251V140H252V140H253V140H254V140H255V140H256V140H257V140H258V140H259V140H260V140H261V140H262V140H263V140H264V140H265V140H266V140H267V140H268V140H269V140H270V140H271V140H272V140H273V140H274V140H275V140H276V140H277V140H278V140H279V140H280V140H281V140H282V140H283V140H284V140H285V140H286V140H287V140H288V140H289V140H290V140H291V140H292V140H293V140H294V140H295V140H296V140H297V140H298V140H299V140H300V140H301V140H302V140H303V140H304V140H305V140H306V140H307V140H308V140H309V140H310V140H311V140H312V140H313V140H314V140H315V140H316V140H317V140H318V140H319V140H320V140H321V140H322V140H323V140H324V140H325V140H326V140H327V140H328V140H329V140H330V140H331V140H332V140H333V140H334V140H335V140H336V140H337V140H338V140H339V140H340V140H341V140H342V140H343V140H344V140H345V140H346V140H347V140H348V140H349V140H350V140H351V140H352V140H353V140H354V140H355V140H356V140H357V140H358V140H359V140H360V140H361V140H362V140H363V140H364V140H365V140H366V140H367V140H368V140H369V140H370V140H371V140H372V140H373V140H374V140H375V140H376V140H377V140H378V140H379V140H380V140H381V140H382V140H383V140H384V140H385V140H386V140H387V140H388V140H389V140H390V140H391V140H392V140H393V140H394V140H395V140H396V140H397V140H398V140H399V140H400V140H401V140H402V140H403V140H404V140H405V140H406V140H407V140H408V140H409V140H410V140H411V140H412V140H413V140H414V140H415V140H416V140H417V140H418V140H419V140H420V140H421V140H422V140H423V140H424V140H425V140H426V140H427V140H428V140H429V140H430V140H431V145V145H430V145H429V145H428V145H427V145H426V145H425V145H424V145H423V145H422V145H421V145H420V145H419V145H418V145H417V145H416V145H415V145H414V145H413V145H412V145H411V145H410V145H409V145H408V145H407V145H406V145H405V145H404V145H403V145H402V145H401V145H400V145H399V145H398V145H397V145H396V145H395V145H394V145H393V145H392V145H391V145H390V145H389V145H388V145H387V145H386V145H385V145H384V145H383V145H382V145H381V145H380V145H379V145H378V145H377V145H376V145H375V145H374V145H373V145H372V145H371V145H370V145H369V145H368V145H367V145H366V145H365V145H364V145H363V145H362V145H361V145H360V145H359V145H358V145H357V145H356V145H355V145H354V145H353V145H352V145H351V145H350V145H349V145H348V145H347V145H346V145H345V145H344V145H343V145H342V145H341V145H340V145H339V145H338V145H337V145H336V145H335V145H334V145H333V145H332V145H331V145H330V145H329V145H328V145H327V145H326V145H325V145H324V145H323V145H322V145H321V145H320V145H319V145H318V145H317V145H316V145H315V145H314V145H313V145H312V145H311V145H310V145H309V145H308V145H307V145H306V145H305V145H304V145H303V145H302V145H301V145H300V145H299V145H298V145H297V145H296V145H295V145H294V145H293V145H292V145H291V145H290V145H289V145H288V145H287V145H286V145H285V145H284V145H283V145H282V145H281V145H280V145H279V145H278V145H277V145H276V145H275V145H274V145H273V145H272V145H271V145H270V145H269V145H268V145H267V145H266V145H265V145H264V145H263V145H262V145H261V145H260V145H259V145H258V145H257V145H256V145H255V145H254V145H253V145H252V145H251V145H250V145H249V145H248V145H247V145H246V145H245V145H244V145H243V145H242V145H241V145H240V145H239V145H238V145H237V145H236V145H235V145H234V145H233V145H232V145H231V145H230V145H229V145H228V145H227V145H226V145H225V145H224V145H223V145H222V145H221V145H220V145H219V145H218V145H217V145H216V145H215V145H214V145H213V145H212V145H211V145H210V145H209V145H208V145H207V145H206V145H205V145H204V145H203V145H202V145H201V145H200V145H199V145H198V145H197V145H196V145H195V145H194V145H193V145H192V145H191V145H190V145H189V145H188V145H187V145H186V145H185V145H184V145H183V145H182V145H181V145H180V145H179V145H178V145H177V145H176V145H175V145H174V145H173V145H172V145H171V145H170V145H169V145H168V145H167V145H166V145H165V145H164V145H163V145H162V145H161V145H160V145H159V145H158V145H157V145H156V145H155V145H154V145H153V145H152V145H151V145H150V145H149V145H148V145H147V145H146V145H145V145H144V145H143V145H142V145H141V145H140V145H139V145H138V145H137V145H136V145H135V145H134V145H133V145H132V145H131V145H130V145H129V145H128V145H127V145H126V145H125V145H124V145H123V145H122V145H121V145H120V145H119V145H118V145H117V145H116V145H115V145H114V145H113V145H112V145H111V145H110V145H109V145H108V145H107V145H106V145H105V145H104V145H103V145H102V145H101V145H100V145H99V145H98V145H97V145H96V145H95V145H94V145H93V145H92V145H91V145H90V145H89V145H88V145H87V145H86V145H85V145H84V145H83V145H82V145H81V145H80V145H79V145H78V145H77V145H76V145H75V145H74V145H73V145H72V145H71V145H70Z" fill="#8e8800" shape-rendering="crispEdges"/>
<path d="M431 123V123H432V123H433V123H434V115H435V115H436V115H437V115H438V106H439V106H440V106H441V106H442V106H443V106H444V106H445V106H446V178V178H445V178H444V178H443V178H442V178H441V178H440V178H439V178H438V169H437V169H436V169H435V169H434V161H433V161H432V161H431Z" fill="#5e5800" shape-rendering="crispEdges"/>
<path d="M446 92V92H447V93H448V96H449V94H450V92H451V92H452V92H453V91H454V92H455V93H456V92H457V92H458V92H459V92H460V92H461V92H462V92H463V91H464V93H465V90H466V92H467V91H468V89H469V92H470V90H471V88H472V95H473V94H474V95H475V95H476V94H477V93H478V93H479V92H480V93H481V92H482V92H483V92H484V92H485V90H486V90H487V91H488V90H489V91H490V90H491V87H492V87H493V88H494V89H495V86H496V85H497V88H498V89H499V87H500V88H501V86H502V87H503V86H504V85H505V85H506V86H507V85H508V85H509V85H510V85H511V88H512V86H513V86H514V85H515V86H516V84H517V86H518V85H519V86H520V86H521V88H522V85H523V85H524V86H525V85H526V85H527V84H528V86H529V86H530V86H531V84H532V85H533V85H534V84H535V84H536V85H537V83H538V86H539V84H540V86H541V85H542V88H543V84H544V84H545V85H546V85H547V87H548V85H549V85H550V84H551V84H552V84H553V85H554V84H555V84H556V84H557V85H558V85H559V84H560V85H561V85H562V85H563V84H564V84H565V84H566V85H567V85H568V85H569V84H570V86H571V84H572V84H573V84H574V83H575V84H576V84H577V85H578V84H579V85H580V84H581V85H582V83H583V85H584V84H585V85H586V85H587V85H588V186V186H587V185H586V186H585V185H584V186H583V185H582V186H581V187H580V187H579V185H578V186H577V187H576V187H575V186H574V186H573V184H572V185H571V187H570V187H569V187H568V187H567V186H566V186H565V187H564V186H563V187H562V186H561V186H560V189H559V189H558V184H557V187H556V186H555V188H554V187H553V190H552V187H551V187H550V187H549V188H548V187H547V187H546V186H545V187H544V187H543V188H542V187H541V188H540V187H539V190H538V187H537V190H536V187H535V187H534V187H533V188H532V188H531V186H530V188H529V187H528V187H527V187H526V187H525V188H524V187H523V186H522V189H521V188H520V187H519V188H518V188H517V187H516V189H515V187H514V188H513V188H512V188H511V189H510V187H509V188H508V189H507V187H506V190H505V189H504V191H503V192H502V190H501V192H500V191H499V191H498V192H497V193H496V192H495V192H494V192H493V193H492V194H491V193H490V192H489V194H488V195H487V195H486V196H485V196H484V196H483V196H482V197H481V196H480V197H479V197H478V198H477V199H476V199H475V199H474V198H473V198H472V193H471V193H470V193H469V191H468V192H467V193H466V193H465V192H464V192H463V193H462V191H461V192H460V193H459V192H458V194H457V192H456V193H455V192H454V194H453V191H452V194H451V192H450V192H449V193H448V194H447V192H446Z" fill="#474300" shape-rendering="crispEdges"/>
<line x1="472.5" y1="72" x2="472.5" y2="200" stroke="#6a6400" stroke-width="1" />
<path d="M588 126.0 L589 126.7 L590 127.4 L591 128.0 L592 128.7 L593 129.3 L594 129.8 L595 130.4 L596 130.9 L597 131.4 L598 131.8 L599 132.3 L600 132.7 L601 133.1 L602 133.5 L603 133.9 L604 134.3 L605 134.6 L606 134.9 L607 135.3 L608 135.6 L609 135.8 L610 136.1 L611 136.4 L612 136.6 L613 136.9 L614 137.1 L615 137.3 L616 137.5 L617 137.7 L618 137.9 L619 138.1 L620 138.3 L621 138.4 L622 138.6 L623 138.7 L624 138.9 L625 139.0 L626 139.2 L627 139.3 L628 139.4 L629 139.5 L630 139.6 L631 139.7 L632 139.8 L633 139.9 L634 140.0 L635 140.1 L636 140.2 L637 140.3 L638 140.4 L639 140.4 L640 140.5 L641 140.6" stroke="#6e6800" stroke-width="6" fill="none"/>
<path d="M588 126.0 L589 126.7 L590 127.4 L591 128.0 L592 128.7 L593 129.3 L594 129.8 L595 130.4 L596 130.9 L597 131.4 L598 131.8 L599 132.3 L600 132.7 L601 133.1 L602 133.5 L603 133.9 L604 134.3 L605 134.6 L606 134.9 L607 135.3 L608 135.6 L609 135.8 L610 136.1 L611 136.4 L612 136.6 L613 136.9 L614 137.1 L615 137.3 L616 137.5 L617 137.7 L618 137.9 L619 138.1 L620 138.3 L621 138.4 L622 138.6 L623 138.7 L624 138.9 L625 139.0 L626 139.2 L627 139.3 L628 139.4 L629 139.5 L630 139.6 L631 139.7 L632 139.8 L633 139.9 L634 140.0 L635 140.1 L636 140.2 L637 140.3 L638 140.4 L639 140.4 L640 140.5 L641 140.6" stroke="#9c9500" stroke-width="3" fill="none"/>
<path d="M628 136 L641 141" stroke="#d8d000" stroke-width="4"/>
<line x1="625.5" y1="142" x2="625.5" y2="164" stroke="#6a6400" stroke-width="1" />
<path d="M642 122V122H643V122H644V122H645V122H646V122H647V122H648V122H649V106H650V106H651V106H652V106H653V106H654V106H655V106H656V106H657V177V177H656V177H655V177H654V177H653V177H652V177H651V177H650V177H649V160H648V160H647V160H646V160H645V160H644V160H643V160H642Z" fill="#807a00" shape-rendering="crispEdges"/>
<path d="M657 91V91H658V91H659V91H660V91H661V91H662V91H663V91H664V91H665V91H666V91H667V89H668V91H669V91H670V89H671V91H672V91H673V193V193H672V193H671V193H670V193H669V193H668V194H667V193H666V193H665V193H664V193H663V193H662V193H661V193H660V193H659V193H658V193H657Z" fill="#8e8800" shape-rendering="crispEdges"/>
<path d="M673 88V88H674V89H675V91H676V91H677V91H678V90H679V93H680V91H681V88H682V91H683V92H684V90H685V92H686V91H687V92H688V91H689V91H690V91H691V90H692V90H693V91H694V91H695V91H696V90H697V90H698V90H699V91H700V90H701V92H702V91H703V88H704V92H705V91H706V92H707V91H708V90H709V91H710V88H711V90H712V91H713V91H714V91H715V92H716V90H717V92H718V93H719V90H720V91H721V90H722V90H723V91H724V92H725V90H726V90H727V94H728V94H729V89H730V92H731V91H732V91H733V90H734V91H735V93H736V92H737V90H738V91H739V91H740V90H741V91H742V91H743V92H744V92H745V91H746V91H747V91H748V93H749V89H750V91H751V91H752V92H753V91H754V91H755V92H756V91H757V89H758V91H759V89H760V91H761V91H762V91H763V90H764V90H765V91H766V90H767V90H768V88H769V90H770V88H771V91H772V91H773V91H774V89H775V93H776V91H777V90H778V90H779V91H780V90H781V91H782V91H783V92H784V92H785V90H786V92H787V90H788V91H789V89H790V91H791V91H792V90H793V92H794V90H795V91H796V91H797V91H798V92H799V91H800V92H801V92H802V91H803V95H804V92H805V91H806V89H807V92H808V92H809V91H810V92H811V92H812V92H813V91H814V90H815V91H816V90H817V94H818V91H819V87H820V91H821V91H822V91H823V91H824V92H825V90H826V90H827V91H828V91H829V91H830V92H831V91H832V91H833V91H834V92H835V92H836V91H837V92H838V92H839V91H840V93H841V91H842V90H843V90H844V92H845V90H846V91H847V90H848V92H849V91H850V90H851V91H852V91H853V91H854V89H855V91H856V93H857V91H858V91H859V91H860V92H861V88H862V91H863V92H864V91H865V91H866V91H867V90H868V90H869V92H870V90H871V91H872V91H873V91H874V91H875V91H876V92H877V90H878V90H879V95H880V91H881V89H882V91H883V92H884V91H885V91H886V90H887V93H888V91H889V91H890V89H891V91H892V90H893V91H894V94H895V91H896V91H897V91H898V88H899V92H900V92H901V88H902V93H903V90H904V91H905V91H906V90H907V92H908V93H909V90H910V92H911V91H912V91H913V92H914V91H915V91H916V92H917V92H918V90H919V90H920V91H921V90H922V93H923V88H924V92H925V91H926V92H927V90H928V91H929V91H930V91H931V91H932V91H933V90H934V92H935V91H936V90H937V91H938V91H939V89H940V93H941V92H942V91H943V92H944V91H945V89H946V91H947V92H948V93H949V91H950V193V193H949V193H948V192H947V193H946V193H945V194H944V193H943V192H942V193H941V194H940V193H939V192H938V194H937V192H936V192H935V193H934V192H933V194H932V192H931V194H930V192H929V195H928V193H927V192H926V192H925V193H924V192H923V194H922V193H921V193H920V193H919V193H918V193H917V193H916V191H915V197H914V192H913V193H912V192H911V193H910V194H909V193H908V193H907V193H906V193H905V192H904V192H903V194H902V196H901V193H900V194H899V193H898V193H897V194H896V194H895V194H894V193H893V192H892V192H891V194H890V192H889V194H888V194H887V192H886V192H885V193H884V193H883V193H882V192H881V194H880V193H879V195H878V193H877V193H876V193H875V193H874V191H873V192H872V191H871V193H870V193H869V193H868V195H867V194H866V194H865V193H864V196H863V192H862V194H861V193H860V193H859V196H858V193H857V193H856V192H855V193H854V192H853V193H852V194H851V192H850V193H849V194H848V193H847V193H846V194H845V193H844V193H843V194H842V194H841V192H840V193H839V193H838V192H837V190H836V194H835V194H834V192H833V192H832V192H831V193H830V192H829V191H828V193H827V193H826V192H825V194H824V193H823V193H822V193H821V192H820V192H819V193H818V193H817V193H816V194H815V193H814V193H813V194H812V194H811V193H810V192H809V193H808V193H807V195H806V194H805V194H804V192H803V192H802V193H801V195H800V193H799V193H798V193H797V192H796V192H795V194H794V192H793V192H792V192H791V193H790V194H789V191H788V193H787V193H786V191H785V193H784V193H783V192H782V192H781V193H780V190H779V193H778V190H777V194H776V192H775V194H774V194H773V193H772V193H771V195H770V194H769V192H768V193H767V193H766V193H765V193H764V193H763V194H762V193H761V193H760V193H759V194H758V193H757V192H756V194H755V193H754V195H753V193H752V193H751V193H750V193H749V194H748V194H747V196H746V192H745V195H744V192H743V193H742V193H741V192H740V196H739V194H738V192H737V194H736V193H735V194H734V192H733V192H732V192H731V193H730V195H729V190H728V192H727V193H726V193H725V192H724V193H723V192H722V193H721V194H720V193H719V194H718V194H717V194H716V194H715V193H714V193H713V194H712V192H711V192H710V194H709V193H708V193H707V194H706V193H705V193H704V193H703V191H702V193H701V192H700V192H699V193H698V193H697V193H696V193H695V193H694V193H693V192H692V192H691V193H690V192H689V194H688V194H687V193H686V194H685V194H684V194H683V194H682V193H681V193H680V193H679V191H678V194H677V192H676V192H675V193H674V193H673Z" fill="#454100" shape-rendering="crispEdges"/>
<path d="M644.5 38V230" stroke="#fff" stroke-width="2.6" stroke-dasharray="9 6 3 6" fill="none"/>
<text x="644" y="242" font-size="11" fill="#fff" text-anchor="middle" font-weight="normal" >C1</text>
<path d="M644 134.5V157.5M635.5 146H652.5" stroke="#000" stroke-width="4.6"/>
<path d="M644 135.5V156.5M636.5 146H651.5" stroke="#fff" stroke-width="2.4"/>
<path d="M155 254 L158 247 L161 254Z" fill="#ffff00"/>
<rect x="70.5" y="38.5" width="879" height="207" fill="none" stroke="#9a9a9a" stroke-width="1.2"/>
<text x="66" y="51" font-size="12" fill="#ffff00" text-anchor="end" font-weight="normal" >800 mV</text>
<text x="66" y="94.2" font-size="12" fill="#ffff00" text-anchor="end" font-weight="normal" >400 mV</text>
<text x="66" y="146.0" font-size="12" fill="#ffff00" text-anchor="end" font-weight="normal" >0 mV</text>
<text x="66" y="197.8" font-size="12" fill="#ffff00" text-anchor="end" font-weight="normal" >-400 mV</text>
<text x="66" y="243.5" font-size="12" fill="#ffff00" text-anchor="end" font-weight="normal" >-800 mV</text>
<text x="70" y="260" font-size="12" fill="#ffff00" text-anchor="start" font-weight="normal" >-100 ms</text>
<text x="246" y="260" font-size="12" fill="#ffff00" text-anchor="middle" font-weight="normal" >100 ms</text>
<text x="422" y="260" font-size="12" fill="#ffff00" text-anchor="middle" font-weight="normal" >300 ms</text>
<text x="598" y="260" font-size="12" fill="#ffff00" text-anchor="middle" font-weight="normal" >500 ms</text>
<text x="774" y="260" font-size="12" fill="#ffff00" text-anchor="middle" font-weight="normal" >700 ms</text>
<text x="950" y="260" font-size="12" fill="#ffff00" text-anchor="end" font-weight="normal" >900 ms</text>
<path d="M1030 131V131H1031V132H1032V131H1033V132H1034V133H1035V131H1036V131H1037V132H1038V131H1039V130H1040V130H1041V131H1042V132H1043V131H1044V131H1045V131H1046V131H1047V132H1048V131H1049V132H1050V131H1051V131H1052V131H1053V131H1054V131H1055V131H1056V132H1057V131H1058V132H1059V132H1060V132H1061V132H1062V133H1063V132H1064V131H1065V131H1066V131H1067V133H1068V131H1069V132H1070V131H1071V132H1072V132H1073V132H1074V132H1075V131H1076V131H1077V131H1078V131H1079V132H1080V132H1081V131H1082V131H1083V131H1084V131H1085V132H1086V131H1087V132H1088V131H1089V132H1090V132H1091V132H1092V132H1093V132H1094V132H1095V132H1096V131H1097V132H1098V131H1099V131H1100V131H1101V132H1102V132H1103V132H1104V132H1105V131H1106V131H1107V132H1108V132H1109V131H1110V132H1111V132H1112V132H1113V132H1114V131H1115V131H1116V131H1117V132H1118V133H1119V130H1120V131H1121V132H1122V131H1123V132H1124V132H1125V133H1126V131H1127V131H1128V132H1129V131H1130V131H1131V131H1132V132H1133V132H1134V132H1135V133H1136V132H1137V135H1138V132H1139V132H1140V131H1141V132H1142V132H1143V131H1144V131H1145V132H1146V133H1147V133H1148V132H1149V132H1150V132H1151V132H1152V131H1153V132H1154V131H1155V131H1156V135H1157V132H1158V132H1159V131H1160V133H1161V131H1162V132H1163V132H1164V132H1165V132H1166V132H1167V131H1168V133H1169V132H1170V132H1171V133H1172V133H1173V133H1174V132H1175V129H1176V133H1177V132H1178V133H1179V132H1180V132H1181V130H1182V134H1183V132H1184V132H1185V130H1186V132H1187V132H1188V132H1189V133H1190V133H1191V133H1192V133H1193V133H1194V133H1195V133H1196V134H1197V133H1198V134H1199V130H1200V132H1201V133H1202V133H1203V133H1204V134H1205V132H1206V132H1207V135H1208V132H1209V133H1210V133H1211V133H1212V133H1213V132H1214V133H1215V133H1216V133H1217V132H1218V133H1219V132H1220V132H1221V133H1222V133H1223V133H1224V133H1225V133H1226V132H1227V135H1228V133H1229V133H1230V133H1231V132H1232V133H1233V132H1234V132H1235V133H1236V133H1237V132H1238V133H1239V132H1240V133H1241V132H1242V133H1243V133H1244V134H1245V134H1246V135H1247V133H1248V133H1249V133H1250V133H1251V133H1252V132H1253V134H1254V133H1255V132H1256V133H1257V133H1258V133H1259V133H1260V133H1261V133H1262V132H1263V134H1264V130H1265V134H1266V133H1267V132H1268V133H1269V134H1270V134H1271V133H1272V133H1273V146V146H1272V147H1271V147H1270V147H1269V146H1268V147H1267V146H1266V146H1265V146H1264V147H1263V145H1262V147H1261V146H1260V147H1259V146H1258V144H1257V147H1256V146H1255V147H1254V147H1253V147H1252V146H1251V146H1250V147H1249V146H1248V149H1247V147H1246V144H1245V146H1244V146H1243V146H1242V146H1241V146H1240V146H1239V146H1238V146H1237V146H1236V146H1235V147H1234V147H1233V147H1232V146H1231V146H1230V146H1229V147H1228V147H1227V146H1226V146H1225V144H1224V148H1223V146H1222V145H1221V146H1220V146H1219V147H1218V147H1217V146H1216V149H1215V146H1214V146H1213V146H1212V146H1211V146H1210V147H1209V146H1208V147H1207V148H1206V145H1205V145H1204V146H1203V144H1202V146H1201V146H1200V146H1199V148H1198V145H1197V145H1196V146H1195V145H1194V146H1193V146H1192V145H1191V146H1190V146H1189V145H1188V145H1187V146H1186V145H1185V145H1184V146H1183V145H1182V145H1181V146H1180V144H1179V145H1178V146H1177V146H1176V147H1175V146H1174V146H1173V147H1172V146H1171V146H1170V146H1169V146H1168V144H1167V146H1166V146H1165V145H1164V145H1163V145H1162V145H1161V145H1160V145H1159V146H1158V145H1157V146H1156V143H1155V148H1154V145H1153V146H1152V145H1151V146H1150V145H1149V143H1148V146H1147V145H1146V147H1145V145H1144V145H1143V146H1142V143H1141V145H1140V145H1139V147H1138V147H1137V145H1136V146H1135V145H1134V145H1133V145H1132V145H1131V144H1130V145H1129V146H1128V145H1127V145H1126V143H1125V146H1124V145H1123V146H1122V146H1121V146H1120V145H1119V145H1118V145H1117V146H1116V145H1115V144H1114V145H1113V145H1112V145H1111V146H1110V145H1109V145H1108V144H1107V146H1106V147H1105V146H1104V147H1103V144H1102V146H1101V144H1100V145H1099V146H1098V145H1097V144H1096V145H1095V143H1094V145H1093V145H1092V145H1091V147H1090V146H1089V145H1088V144H1087V144H1086V143H1085V145H1084V145H1083V145H1082V144H1081V145H1080V145H1079V144H1078V146H1077V145H1076V144H1075V146H1074V146H1073V145H1072V147H1071V145H1070V145H1069V147H1068V144H1067V146H1066V143H1065V143H1064V145H1063V145H1062V144H1061V145H1060V144H1059V145H1058V145H1057V143H1056V144H1055V145H1054V146H1053V145H1052V145H1051V144H1050V145H1049V144H1048V144H1047V145H1046V145H1045V144H1044V147H1043V145H1042V145H1041V145H1040V143H1039V145H1038V146H1037V145H1036V146H1035V143H1034V145H1033V145H1032V144H1031V144H1030Z" fill="#ffff00" shape-rendering="crispEdges"/>
<path d="M1273 109V109H1274V111H1275V109H1276V110H1277V111H1278V110H1279V110H1280V111H1281V110H1282V111H1283V113H1284V109H1285V113H1286V110H1287V111H1288V108H1289V113H1290V109H1291V110H1292V110H1293V109H1294V113H1295V109H1296V111H1297V109H1298V106H1299V110H1300V110H1301V110H1302V107H1303V109H1304V110H1305V115H1306V112H1307V105H1308V110H1309V110H1310V110H1311V109H1312V110H1313V109H1314V111H1315V110H1316V113H1317V111H1318V111H1319V111H1320V110H1321V109H1322V109H1323V108H1324V110H1325V109H1326V111H1327V110H1328V110H1329V107H1330V108H1331V111H1332V109H1333V111H1334V111H1335V111H1336V109H1337V111H1338V109H1339V109H1340V111H1341V109H1342V110H1343V110H1344V110H1345V111H1346V110H1347V110H1348V110H1349V110H1350V97H1351V101H1352V93H1353V100H1354V95H1355V101H1356V102H1357V95H1358V95H1359V91H1360V96H1361V95H1362V96H1363V97H1364V97H1365V101H1366V92H1367V95H1368V97H1369V100H1370V97H1371V96H1372V95H1373V96H1374V99H1375V95H1376V96H1377V97H1378V97H1379V96H1380V96H1381V96H1382V95H1383V97H1384V97H1385V95H1386V96H1387V96H1388V96H1389V96H1390V95H1391V100H1392V97H1393V96H1394V97H1395V96H1396V96H1397V96H1398V98H1399V97H1400V97H1401V100H1402V100H1403V96H1404V97H1405V97H1406V95H1407V97H1408V95H1409V96H1410V101H1411V95H1412V95H1413V96H1414V95H1415V97H1416V96H1417V96H1418V94H1419V96H1420V100H1421V92H1422V97H1423V99H1424V97H1425V95H1426V84H1427V85H1428V82H1429V82H1430V80H1431V82H1432V87H1433V82H1434V78H1435V86H1436V82H1437V85H1438V82H1439V83H1440V84H1441V82H1442V82H1443V83H1444V81H1445V80H1446V82H1447V82H1448V81H1449V82H1450V82H1451V83H1452V85H1453V81H1454V81H1455V85H1456V88H1457V86H1458V82H1459V83H1460V84H1461V83H1462V86H1463V82H1464V81H1465V77H1466V82H1467V82H1468V85H1469V82H1470V81H1471V82H1472V83H1473V81H1474V83H1475V83H1476V82H1477V78H1478V81H1479V82H1480V83H1481V81H1482V81H1483V81H1484V85H1485V82H1486V82H1487V81H1488V82H1489V79H1490V82H1491V82H1492V82H1493V83H1494V79H1495V83H1496V83H1497V85H1498V82H1499V81H1500V83H1501V82H1502V83H1503V80H1504V83H1505V82H1506V80H1507V77H1508V81H1509V82H1510V81H1511V88H1512V81H1513V83H1514V82H1515V82H1516V81H1517V82H1518V85H1519V85H1520V82H1521V78H1522V82H1523V83H1524V85H1525V85H1526V82H1527V82H1528V84H1529V84H1530V82H1531V81H1532V78H1533V83H1534V81H1535V81H1536V83H1537V82H1538V83H1539V80H1540V83H1541V81H1542V82H1543V84H1544V85H1545V79H1546V81H1547V82H1548V81H1549V82H1550V85H1551V81H1552V82H1553V82H1554V82H1555V81H1556V78H1557V84H1558V78H1559V82H1560V83H1561V82H1562V82H1563V81H1564V83H1565V83H1566V81H1567V81H1568V85H1569V83H1570V79H1571V58H1572V61H1573V54H1574V57H1575V57H1576V58H1577V58H1578V58H1579V59H1580V59H1581V58H1582V58H1583V58H1584V58H1585V57H1586V59H1587V63H1588V58H1589V61H1590V57H1591V55H1592V53H1593V58H1594V57H1595V58H1596V59H1597V57H1598V58H1599V58H1600V58H1601V62H1602V57H1603V57H1604V57H1605V63H1606V58H1607V59H1608V58H1609V58H1610V58H1611V57H1612V58H1613V59H1614V55H1615V57H1616V58H1617V61H1618V58H1619V57H1620V62H1621V57H1622V57H1623V59H1624V57H1625V57H1626V57H1627V60H1628V57H1629V58H1630V56H1631V58H1632V57H1633V59H1634V58H1635V62H1636V57H1637V58H1638V57H1639V55H1640V57H1641V59H1642V59H1643V58H1644V53H1645V59H1646V59H1647V58H1648V61H1649V54H1650V60H1651V62H1652V58H1653V54H1654V58H1655V59H1656V58H1657V58H1658V56H1659V58H1660V57H1661V58H1662V59H1663V58H1664V57H1665V60H1666V58H1667V59H1668V60H1669V58H1670V59H1671V59H1672V57H1673V58H1674V60H1675V59H1676V58H1677V58H1678V58H1679V59H1680V57H1681V58H1682V59H1683V60H1684V58H1685V57H1686V58H1687V53H1688V55H1689V58H1690V57H1691V57H1692V54H1693V58H1694V57H1695V59H1696V55H1697V58H1698V61H1699V59H1700V59H1701V61H1702V57H1703V58H1704V58H1705V55H1706V59H1707V56H1708V58H1709V58H1710V57H1711V57H1712V60H1713V57H1714V56H1715V56H1716V59H1717V57H1718V58H1719V58H1720V57H1721V58H1722V55H1723V58H1724V61H1725V63H1726V59H1727V55H1728V58H1729V59H1730V57H1731V58H1732V57H1733V60H1734V59H1735V62H1736V59H1737V57H1738V58H1739V58H1740V57H1741V58H1742V62H1743V58H1744V63H1745V58H1746V57H1747V60H1748V53H1749V59H1750V58H1751V58H1752V57H1753V58H1754V59H1755V59H1756V58H1757V58H1758V59H1759V58H1760V59H1761V62H1762V58H1763V57H1764V57H1765V58H1766V56H1767V57H1768V59H1769V57H1770V59H1771V55H1772V58H1773V58H1774V61H1775V55H1776V55H1777V56H1778V58H1779V57H1780V59H1781V57H1782V57H1783V58H1784V52H1785V59H1786V61H1787V58H1788V58H1789V59H1790V57H1791V59H1792V59H1793V59H1794V58H1795V60H1796V59H1797V59H1798V57H1799V57H1800V58H1801V59H1802V58H1803V58H1804V58H1805V59H1806V63H1807V58H1808V59H1809V59H1810V58H1811V59H1812V57H1813V58H1814V58H1815V57H1816V59H1817V58H1818V58H1819V57H1820V54H1821V61H1822V59H1823V58H1824V58H1825V58H1826V62H1827V59H1828V58H1829V55H1830V58H1831V56H1832V54H1833V62H1834V59H1835V59H1836V59H1837V58H1838V56H1839V58H1840V63H1841V58H1842V58H1843V58H1844V64H1845V57H1846V59H1847V54H1848V58H1849V55H1850V58H1851V57H1852V59H1853V59H1854V57H1855V62H1856V57H1857V59H1858V58H1859V54H1860V59H1861V62H1862V58H1863V58H1864V58H1865V55H1866V59H1867V58H1868V58H1869V56H1870V58H1871V59H1872V57H1873V57H1874V59H1875V59H1876V57H1877V59H1878V59H1879V58H1880V57H1881V57H1882V62H1883V59H1884V62H1885V59H1886V58H1887V58H1888V58H1889V59H1890V55H1891V58H1892V63H1893V54H1894V58H1895V59H1896V57H1897V58H1898V57H1899V58H1900V60H1901V59H1902V58H1903V59H1904V61H1905V59H1906V63H1907V58H1908V59H1909V58H1910V231V231H1909V230H1908V234H1907V231H1906V231H1905V232H1904V231H1903V232H1902V231H1901V231H1900V231H1899V231H1898V231H1897V230H1896V230H1895V232H1894V231H1893V228H1892V231H1891V232H1890V232H1889V231H1888V234H1887V231H1886V232H1885V232H1884V230H1883V230H1882V230H1881V230H1880V230H1879V230H1878V231H1877V232H1876V232H1875V230H1874V227H1873V232H1872V228H1871V230H1870V234H1869V232H1868V235H1867V232H1866V232H1865V235H1864V232H1863V231H1862V228H1861V233H1860V229H1859V232H1858V236H1857V231H1856V232H1855V232H1854V231H1853V231H1852V226H1851V230H1850V231H1849V230H1848V231H1847V234H1846V232H1845V232H1844V226H1843V235H1842V231H1841V231H1840V232H1839V228H1838V228H1837V231H1836V232H1835V231H1834V230H1833V230H1832V229H1831V233H1830V231H1829V229H1828V230H1827V231H1826V231H1825V230H1824V231H1823V228H1822V231H1821V231H1820V232H1819V231H1818V231H1817V232H1816V226H1815V231H1814V231H1813V231H1812V232H1811V231H1810V230H1809V230H1808V231H1807V230H1806V231H1805V232H1804V232H1803V231H1802V231H1801V230H1800V232H1799V231H1798V233H1797V232H1796V232H1795V230H1794V234H1793V231H1792V230H1791V230H1790V226H1789V230H1788V232H1787V230H1786V231H1785V227H1784V231H1783V230H1782V231H1781V229H1780V231H1779V232H1778V231H1777V227H1776V230H1775V231H1774V231H1773V231H1772V231H1771V231H1770V232H1769V232H1768V235H1767V232H1766V230H1765V230H1764V234H1763V232H1762V231H1761V231H1760V231H1759V231H1758V232H1757V228H1756V231H1755V232H1754V231H1753V231H1752V230H1751V231H1750V234H1749V232H1748V231H1747V227H1746V231H1745V233H1744V231H1743V230H1742V227H1741V227H1740V231H1739V230H1738V231H1737V232H1736V230H1735V231H1734V232H1733V231H1732V231H1731V230H1730V232H1729V231H1728V232H1727V231H1726V231H1725V234H1724V236H1723V230H1722V230H1721V235H1720V233H1719V231H1718V231H1717V227H1716V234H1715V235H1714V231H1713V231H1712V235H1711V231H1710V234H1709V232H1708V232H1707V228H1706V232H1705V234H1704V230H1703V231H1702V231H1701V231H1700V231H1699V230H1698V231H1697V230H1696V231H1695V230H1694V234H1693V234H1692V229H1691V230H1690V231H1689V234H1688V234H1687V230H1686V234H1685V231H1684V231H1683V232H1682V230H1681V233H1680V232H1679V232H1678V229H1677V228H1676V231H1675V230H1674V231H1673V230H1672V231H1671V231H1670V230H1669V232H1668V230H1667V232H1666V227H1665V231H1664V231H1663V229H1662V231H1661V231H1660V232H1659V231H1658V232H1657V230H1656V228H1655V232H1654V228H1653V232H1652V231H1651V231H1650V230H1649V230H1648V231H1647V232H1646V231H1645V234H1644V230H1643V232H1642V232H1641V231H1640V231H1639V231H1638V231H1637V235H1636V235H1635V233H1634V233H1633V236H1632V230H1631V230H1630V231H1629V231H1628V228H1627V232H1626V230H1625V231H1624V231H1623V230H1622V231H1621V231H1620V225H1619V230H1618V231H1617V232H1616V231H1615V227H1614V231H1613V230H1612V234H1611V232H1610V229H1609V230H1608V231H1607V231H1606V232H1605V231H1604V231H1603V231H1602V231H1601V230H1600V230H1599V227H1598V226H1597V232H1596V230H1595V231H1594V232H1593V231H1592V229H1591V230H1590V233H1589V230H1588V231H1587V230H1586V230H1585V227H1584V232H1583V234H1582V233H1581V231H1580V230H1579V231H1578V232H1577V235H1576V230H1575V231H1574V232H1573V231H1572V231H1571V198H1570V203H1569V205H1568V203H1567V203H1566V203H1565V203H1564V204H1563V203H1562V205H1561V202H1560V203H1559V201H1558V207H1557V204H1556V203H1555V203H1554V202H1553V201H1552V207H1551V203H1550V203H1549V204H1548V202H1547V203H1546V204H1545V202H1544V206H1543V203H1542V203H1541V202H1540V204H1539V204H1538V204H1537V203H1536V199H1535V204H1534V203H1533V202H1532V204H1531V203H1530V204H1529V203H1528V202H1527V203H1526V207H1525V203H1524V201H1523V203H1522V202H1521V203H1520V204H1519V203H1518V202H1517V203H1516V201H1515V202H1514V208H1513V197H1512V202H1511V198H1510V202H1509V201H1508V204H1507V202H1506V203H1505V202H1504V203H1503V202H1502V204H1501V198H1500V199H1499V204H1498V199H1497V202H1496V204H1495V204H1494V203H1493V201H1492V201H1491V203H1490V202H1489V202H1488V202H1487V197H1486V203H1485V197H1484V203H1483V203H1482V203H1481V207H1480V203H1479V202H1478V206H1477V203H1476V204H1475V202H1474V201H1473V203H1472V203H1471V202H1470V202H1469V206H1468V204H1467V205H1466V203H1465V203H1464V204H1463V202H1462V206H1461V204H1460V203H1459V201H1458V203H1457V203H1456V206H1455V203H1454V203H1453V203H1452V203H1451V202H1450V203H1449V208H1448V203H1447V206H1446V204H1445V204H1444V202H1443V202H1442V204H1441V202H1440V203H1439V202H1438V205H1437V203H1436V204H1435V202H1434V204H1433V200H1432V203H1431V203H1430V204H1429V202H1428V203H1427V203H1426V188H1425V189H1424V187H1423V187H1422V190H1421V189H1420V183H1419V191H1418V188H1417V189H1416V189H1415V189H1414V186H1413V188H1412V190H1411V188H1410V188H1409V190H1408V189H1407V187H1406V188H1405V189H1404V188H1403V187H1402V188H1401V191H1400V188H1399V187H1398V186H1397V191H1396V189H1395V188H1394V187H1393V190H1392V189H1391V188H1390V188H1389V188H1388V188H1387V185H1386V189H1385V188H1384V185H1383V191H1382V188H1381V189H1380V189H1379V188H1378V188H1377V188H1376V188H1375V188H1374V189H1373V187H1372V192H1371V189H1370V187H1369V189H1368V188H1367V184H1366V187H1365V187H1364V188H1363V183H1362V187H1361V188H1360V189H1359V188H1358V188H1357V189H1356V187H1355V188H1354V188H1353V188H1352V190H1351V189H1350V172H1349V174H1348V175H1347V177H1346V174H1345V174H1344V175H1343V171H1342V174H1341V174H1340V173H1339V172H1338V172H1337V174H1336V171H1335V173H1334V170H1333V174H1332V175H1331V173H1330V174H1329V174H1328V174H1327V173H1326V170H1325V175H1324V173H1323V175H1322V174H1321V174H1320V175H1319V172H1318V174H1317V176H1316V173H1315V173H1314V173H1313V173H1312V175H1311V174H1310V172H1309V173H1308V173H1307V173H1306V176H1305V174H1304V170H1303V174H1302V174H1301V176H1300V173H1299V175H1298V175H1297V173H1296V174H1295V173H1294V171H1293V174H1292V173H1291V174H1290V174H1289V173H1288V174H1287V175H1286V174H1285V173H1284V170H1283V178H1282V173H1281V175H1280V171H1279V174H1278V172H1277V174H1276V174H1275V174H1274V173H1273Z" fill="#ffff00" shape-rendering="crispEdges"/>
<path d="M1291.5 38V230" stroke="#fff" stroke-width="2.6" stroke-dasharray="9 6 3 6" fill="none"/>
<text x="1291" y="242" font-size="11" fill="#fff" text-anchor="middle" font-weight="normal" >Z1</text>
<path d="M1291 140.5V163.5M1282.5 152H1299.5" stroke="#000" stroke-width="4.6"/>
<path d="M1291 141.5V162.5M1283.5 152H1298.5" stroke="#fff" stroke-width="2.4"/>
<rect x="1030.5" y="38.5" width="879" height="207" fill="none" stroke="#9a9a9a" stroke-width="1.2"/>
<text x="1026" y="51" font-size="12" fill="#ffff00" text-anchor="end" font-weight="normal" >457.4 mV</text>
<text x="1026" y="94.2" font-size="12" fill="#ffff00" text-anchor="end" font-weight="normal" >233.4 mV</text>
<text x="1026" y="146.0" font-size="12" fill="#ffff00" text-anchor="end" font-weight="normal" >9.4 mV</text>
<text x="1026" y="197.8" font-size="12" fill="#ffff00" text-anchor="end" font-weight="normal" >-214.6 mV</text>
<text x="1026" y="243.5" font-size="12" fill="#ffff00" text-anchor="end" font-weight="normal" >-438.6 mV</text>
<text x="1030" y="260" font-size="12" fill="#ffff00" text-anchor="start" font-weight="normal" >536.35 ms</text>
<text x="1206" y="260" font-size="12" fill="#ffff00" text-anchor="middle" font-weight="normal" >546.35 ms</text>
<text x="1382" y="260" font-size="12" fill="#ffff00" text-anchor="middle" font-weight="normal" >556.35 ms</text>
<text x="1558" y="260" font-size="12" fill="#ffff00" text-anchor="middle" font-weight="normal" >566.35 ms</text>
<text x="1734" y="260" font-size="12" fill="#ffff00" text-anchor="middle" font-weight="normal" >576.35 ms</text>
<text x="1910" y="260" font-size="12" fill="#ffff00" text-anchor="end" font-weight="normal" >586.35 ms</text>
<path d="M1024 250L1027.5 246.5M1024 250L1027.5 253.5M1024 250H1030L1031 252" stroke="#ffff00" stroke-width="1.2" fill="none"/>
<path d="M70 382V382H71V382H72V384H73V383H74V384H75V383H76V382H77V384H78V384H79V384H80V383H81V383H82V383H83V383H84V383H85V382H86V382H87V384H88V383H89V384H90V383H91V383H92V383H93V383H94V383H95V385H96V384H97V384H98V383H99V383H100V383H101V384H102V383H103V383H104V384H105V384H106V384H107V384H108V384H109V382H110V386H111V383H112V384H113V383H114V383H115V383H116V383H117V383H118V384H119V384H120V383H121V384H122V384H123V384H124V383H125V383H126V383H127V384H128V383H129V383H130V384H131V384H132V383H133V384H134V384H135V384H136V384H137V383H138V384H139V383H140V383H141V384H142V383H143V384H144V385H145V384H146V384H147V384H148V384H149V383H150V384H151V383H152V383H153V384H154V383H155V383H156V383H157V384H158V384H159V384H160V384H161V382H162V384H163V385H164V383H165V384H166V384H167V384H168V384H169V383H170V383H171V383H172V383H173V384H174V383H175V384H176V382H177V384H178V383H179V383H180V383H181V383H182V384H183V384H184V384H185V383H186V384H187V383H188V383H189V383H190V384H191V383H192V383H193V383H194V384H195V383H196V384H197V384H198V384H199V383H200V384H201V385H202V384H203V383H204V384H205V383H206V384H207V384H208V384H209V383H210V383H211V383H212V383H213V385H214V384H215V383H216V383H217V383H218V384H219V384H220V384H221V384H222V384H223V383H224V383H225V382H226V384H227V384H228V384H229V383H230V385H231V383H232V383H233V384H234V384H235V383H236V384H237V384H238V383H239V382H240V383H241V384H242V384H243V384H244V383H245V383H246V384H247V383H248V384H249V384H250V385H251V383H252V384H253V383H254V383H255V384H256V383H257V384H258V383H259V384H260V384H261V383H262V383H263V383H264V384H265V384H266V383H267V384H268V384H269V384H270V384H271V383H272V383H273V383H274V384H275V384H276V384H277V386H278V384H279V383H280V384H281V384H282V383H283V383H284V384H285V384H286V384H287V384H288V384H289V384H290V384H291V384H292V383H293V383H294V384H295V384H296V384H297V385H298V384H299V384H300V384H301V383H302V384H303V384H304V383H305V383H306V383H307V383H308V383H309V383H310V384H311V383H312V383H313V384H314V383H315V385H316V384H317V384H318V383H319V385H320V383H321V384H322V383H323V384H324V383H325V383H326V384H327V383H328V383H329V382H330V383H331V385H332V384H333V384H334V384H335V384H336V384H337V383H338V383H339V383H340V384H341V383H342V384H343V384H344V384H345V385H346V383H347V383H348V384H349V384H350V384H351V383H352V383H353V384H354V383H355V384H356V382H357V381H358V384H359V384H360V383H361V383H362V384H363V383H364V383H365V384H366V383H367V383H368V383H369V384H370V384H371V383H372V384H373V383H374V383H375V383H376V383H377V383H378V384H379V383H380V384H381V383H382V384H383V384H384V383H385V384H386V384H387V384H388V384H389V383H390V384H391V383H392V384H393V384H394V384H395V384H396V383H397V384H398V383H399V383H400V384H401V383H402V382H403V383H404V383H405V384H406V383H407V384H408V383H409V383H410V384H411V383H412V384H413V383H414V383H415V383H416V384H417V384H418V384H419V384H420V383H421V384H422V383H423V383H424V383H425V384H426V383H427V383H428V383H429V384H430V383H431V391V391H430V392H429V393H428V393H427V393H426V392H425V393H424V392H423V392H422V393H421V395H420V393H419V392H418V392H417V393H416V393H415V392H414V393H413V392H412V393H411V392H410V393H409V391H408V393H407V392H406V392H405V392H404V392H403V392H402V392H401V392H400V393H399V393H398V392H397V392H396V392H395V393H394V393H393V391H392V392H391V392H390V393H389V393H388V393H387V393H386V393H385V392H384V392H383V392H382V392H381V391H380V394H379V392H378V392H377V393H376V393H375V393H374V392H373V394H372V392H371V393H370V393H369V393H368V393H367V392H366V393H365V392H364V392H363V392H362V392H361V393H360V393H359V392H358V392H357V392H356V393H355V393H354V394H353V393H352V393H351V392H350V392H349V392H348V393H347V393H346V393H345V392H344V392H343V393H342V392H341V392H340V393H339V392H338V393H337V392H336V392H335V392H334V392H333V392H332V392H331V392H330V392H329V392H328V392H327V393H326V392H325V393H324V394H323V393H322V392H321V393H320V393H319V392H318V392H317V393H316V393H315V392H314V392H313V393H312V393H311V390H310V392H309V392H308V392H307V393H306V392H305V393H304V392H303V392H302V393H301V392H300V393H299V392H298V393H297V394H296V393H295V392H294V393H293V392H292V393H291V392H290V392H289V393H288V395H287V393H286V392H285V392H284V392H283V393H282V393H281V392H280V392H279V392H278V393H277V393H276V392H275V393H274V392H273V393H272V393H271V393H270V392H269V392H268V393H267V392H266V392H265V392H264V391H263V393H262V393H261V392H260V393H259V392H258V393H257V392H256V392H255V393H254V393H253V393H252V392H251V393H250V393H249V393H248V393H247V392H246V392H245V393H244V392H243V393H242V392H241V392H240V393H239V393H238V393H237V393H236V392H235V391H234V392H233V393H232V392H231V393H230V393H229V393H228V393H227V393H226V392H225V393H224V392H223V392H222V392H221V393H220V392H219V393H218V392H217V393H216V393H215V393H214V395H213V393H212V392H211V393H210V392H209V392H208V393H207V392H206V392H205V392H204V392H203V393H202V392H201V393H200V392H199V393H198V392H197V393H196V392H195V393H194V392H193V393H192V393H191V392H190V392H189V393H188V392H187V393H186V393H185V392H184V392H183V392H182V392H181V392H180V392H179V393H178V392H177V393H176V393H175V392H174V392H173V392H172V392H171V392H170V393H169V393H168V393H167V392H166V393H165V393H164V392H163V390H162V392H161V392H160V393H159V393H158V392H157V392H156V393H155V392H154V392H153V390H152V393H151V393H150V393H149V394H148V392H147V392H146V393H145V392H144V393H143V393H142V393H141V392H140V392H139V393H138V392H137V393H136V392H135V391H134V393H133V392H132V393H131V392H130V392H129V392H128V393H127V392H126V393H125V393H124V392H123V393H122V392H121V392H120V391H119V392H118V392H117V393H116V393H115V393H114V392H113V391H112V391H111V392H110V393H109V393H108V393H107V393H106V392H105V392H104V390H103V393H102V393H101V393H100V393H99V393H98V393H97V393H96V392H95V393H94V393H93V392H92V392H91V393H90V392H89V391H88V393H87V392H86V393H85V393H84V392H83V392H82V393H81V393H80V393H79V392H78V392H77V392H76V392H75V393H74V392H73V392H72V392H71V392H70Z" fill="#8a0048" shape-rendering="crispEdges"/>
<path d="M70 385V385H71V385H72V385H73V385H74V385H75V385H76V385H77V385H78V385H79V385H80V385H81V385H82V385H83V385H84V385H85V385H86V385H87V385H88V385H89V385H90V385H91V385H92V385H93V385H94V385H95V385H96V385H97V385H98V385H99V385H100V385H101V385H102V385H103V385H104V385H105V385H106V385H107V385H108V385H109V385H110V385H111V385H112V385H113V385H114V385H115V385H116V385H117V385H118V385H119V385H120V385H121V385H122V385H123V385H124V385H125V385H126V385H127V385H128V385H129V385H130V385H131V385H132V385H133V385H134V385H135V385H136V385H137V385H138V385H139V385H140V385H141V385H142V385H143V385H144V385H145V385H146V385H147V385H148V385H149V385H150V385H151V385H152V385H153V385H154V385H155V385H156V385H157V385H158V385H159V385H160V385H161V385H162V385H163V385H164V385H165V385H166V385H167V385H168V385H169V385H170V385H171V385H172V385H173V385H174V385H175V385H176V385H177V385H178V385H179V385H180V385H181V385H182V385H183V385H184V385H185V385H186V385H187V385H188V385H189V385H190V385H191V385H192V385H193V385H194V385H195V385H196V385H197V385H198V385H199V385H200V385H201V385H202V385H203V385H204V385H205V385H206V385H207V385H208V385H209V385H210V385H211V385H212V385H213V385H214V385H215V385H216V385H217V385H218V385H219V385H220V385H221V385H222V385H223V385H224V385H225V385H226V385H227V385H228V385H229V385H230V385H231V385H232V385H233V385H234V385H235V385H236V385H237V385H238V385H239V385H240V385H241V385H242V385H243V385H244V385H245V385H246V385H247V385H248V385H249V385H250V385H251V385H252V385H253V385H254V385H255V385H256V385H257V385H258V385H259V385H260V385H261V385H262V385H263V385H264V385H265V385H266V385H267V385H268V385H269V385H270V385H271V385H272V385H273V385H274V385H275V385H276V385H277V385H278V385H279V385H280V385H281V385H282V385H283V385H284V385H285V385H286V385H287V385H288V385H289V385H290V385H291V385H292V385H293V385H294V385H295V385H296V385H297V385H298V385H299V385H300V385H301V385H302V385H303V385H304V385H305V385H306V385H307V385H308V385H309V385H310V385H311V385H312V385H313V385H314V385H315V385H316V385H317V385H318V385H319V385H320V385H321V385H322V385H323V385H324V385H325V385H326V385H327V385H328V385H329V385H330V385H331V385H332V385H333V385H334V385H335V385H336V385H337V385H338V385H339V385H340V385H341V385H342V385H343V385H344V385H345V385H346V385H347V385H348V385H349V385H350V385H351V385H352V385H353V385H354V385H355V385H356V385H357V385H358V385H359V385H360V385H361V385H362V385H363V385H364V385H365V385H366V385H367V385H368V385H369V385H370V385H371V385H372V385H373V385H374V385H375V385H376V385H377V385H378V385H379V385H380V385H381V385H382V385H383V385H384V385H385V385H386V385H387V385H388V385H389V385H390V385H391V385H392V385H393V385H394V385H395V385H396V385H397V385H398V385H399V385H400V385H401V385H402V385H403V385H404V385H405V385H406V385H407V385H408V385H409V385H410V385H411V385H412V385H413V385H414V385H415V385H416V385H417V385H418V385H419V385H420V385H421V385H422V385H423V385H424V385H425V385H426V385H427V385H428V385H429V385H430V385H431V390V390H430V390H429V390H428V390H427V390H426V390H425V390H424V390H423V390H422V390H421V390H420V390H419V390H418V390H417V390H416V390H415V390H414V390H413V390H412V390H411V390H410V390H409V390H408V390H407V390H406V390H405V390H404V390H403V390H402V390H401V390H400V390H399V390H398V390H397V390H396V390H395V390H394V390H393V390H392V390H391V390H390V390H389V390H388V390H387V390H386V390H385V390H384V390H383V390H382V390H381V390H380V390H379V390H378V390H377V390H376V390H375V390H374V390H373V390H372V390H371V390H370V390H369V390H368V390H367V390H366V390H365V390H364V390H363V390H362V390H361V390H360V390H359V390H358V390H357V390H356V390H355V390H354V390H353V390H352V390H351V390H350V390H349V390H348V390H347V390H346V390H345V390H344V390H343V390H342V390H341V390H340V390H339V390H338V390H337V390H336V390H335V390H334V390H333V390H332V390H331V390H330V390H329V390H328V390H327V390H326V390H325V390H324V390H323V390H322V390H321V390H320V390H319V390H318V390H317V390H316V390H315V390H314V390H313V390H312V390H311V390H310V390H309V390H308V390H307V390H306V390H305V390H304V390H303V390H302V390H301V390H300V390H299V390H298V390H297V390H296V390H295V390H294V390H293V390H292V390H291V390H290V390H289V390H288V390H287V390H286V390H285V390H284V390H283V390H282V390H281V390H280V390H279V390H278V390H277V390H276V390H275V390H274V390H273V390H272V390H271V390H270V390H269V390H268V390H267V390H266V390H265V390H264V390H263V390H262V390H261V390H260V390H259V390H258V390H257V390H256V390H255V390H254V390H253V390H252V390H251V390H250V390H249V390H248V390H247V390H246V390H245V390H244V390H243V390H242V390H241V390H240V390H239V390H238V390H237V390H236V390H235V390H234V390H233V390H232V390H231V390H230V390H229V390H228V390H227V390H226V390H225V390H224V390H223V390H222V390H221V390H220V390H219V390H218V390H217V390H216V390H215V390H214V390H213V390H212V390H211V390H210V390H209V390H208V390H207V390H206V390H205V390H204V390H203V390H202V390H201V390H200V390H199V390H198V390H197V390H196V390H195V390H194V390H193V390H192V390H191V390H190V390H189V390H188V390H187V390H186V390H185V390H184V390H183V390H182V390H181V390H180V390H179V390H178V390H177V390H176V390H175V390H174V390H173V390H172V390H171V390H170V390H169V390H168V390H167V390H166V390H165V390H164V390H163V390H162V390H161V390H160V390H159V390H158V390H157V390H156V390H155V390H154V390H153V390H152V390H151V390H150V390H149V390H148V390H147V390H146V390H145V390H144V390H143V390H142V390H141V390H140V390H139V390H138V390H137V390H136V390H135V390H134V390H133V390H132V390H131V390H130V390H129V390H128V390H127V390H126V390H125V390H124V390H123V390H122V390H121V390H120V390H119V390H118V390H117V390H116V390H115V390H114V390H113V390H112V390H111V390H110V390H109V390H108V390H107V390H106V390H105V390H104V390H103V390H102V390H101V390H100V390H99V390H98V390H97V390H96V390H95V390H94V390H93V390H92V390H91V390H90V390H89V390H88V390H87V390H86V390H85V390H84V390H83V390H82V390H81V390H80V390H79V390H78V390H77V390H76V390H75V390H74V390H73V390H72V390H71V390H70Z" fill="#f00a86" shape-rendering="crispEdges"/>
<path d="M431 374V374H432V374H433V374H434V374H435V367H436V367H437V367H438V363H439V363H440V363H441V363H442V363H443V363H444V363H445V363H446V414V414H445V414H444V414H443V414H442V414H441V414H440V414H439V414H438V409H437V409H436V409H435V402H434V402H433V402H432V402H431Z" fill="#8e004c" shape-rendering="crispEdges"/>
<path d="M446 347V347H447V348H448V347H449V345H450V346H451V346H452V346H453V346H454V345H455V346H456V345H457V346H458V347H459V344H460V345H461V345H462V347H463V348H464V346H465V345H466V346H467V347H468V347H469V346H470V346H471V346H472V345H473V432V432H472V430H471V431H470V431H469V431H468V430H467V431H466V432H465V431H464V430H463V430H462V429H461V431H460V431H459V431H458V431H457V431H456V431H455V432H454V430H453V430H452V431H451V430H450V431H449V430H448V431H447V433H446Z" fill="#7c0042" shape-rendering="crispEdges"/>
<path d="M473 455.0 L474 451.3 L475 447.8 L476 444.6 L477 441.5 L478 438.5 L479 435.7 L480 433.1 L481 430.6 L482 428.2 L483 426.0 L484 423.9 L485 421.9 L486 420.0 L487 418.2 L488 416.6 L489 415.0 L490 413.4 L491 412.0 L492 410.7 L493 409.4 L494 408.2 L495 407.0 L496 405.9 L497 404.9 L498 404.0 L499 403.0 L500 402.2 L501 401.4 L502 400.6 L503 399.8 L504 399.1 L505 398.5 L506 397.9 L507 397.3 L508 396.7 L509 396.2 L510 395.7 L511 395.2 L512 394.8 L513 394.4 L514 394.0 L515 393.6 L516 393.2 L517 392.9 L518 392.6 L519 392.3 L520 392.0 L521 391.7 L522 391.5 L523 391.2 L524 391.0 L525 390.8 L526 390.6 L527 390.4 L528 390.2 L529 390.0 L530 389.9 L531 389.7 L532 389.6 L533 389.4 L534 389.3 L535 389.2 L536 389.1 L537 388.9 L538 388.8 L539 388.7 L540 388.6 L541 388.6 L542 388.5 L543 388.4 L544 388.3 L545 388.2 L546 388.2 L547 388.1 L548 388.1 L549 388.0 L550 387.9 L551 387.9 L552 387.8 L553 387.8 L554 387.8 L555 387.7 L556 387.7 L557 387.6 L558 387.6 L559 387.6 L560 387.5 L561 387.5 L562 387.5 L563 387.5 L564 387.4 L565 387.4 L566 387.4 L567 387.4 L568 387.3 L569 387.3 L570 387.3 L571 387.3 L572 387.3 L573 387.3 L574 387.2 L575 387.2 L576 387.2 L577 387.2 L578 387.2 L579 387.2 L580 387.2 L581 387.2 L582 387.2 L583 387.2 L584 387.1 L585 387.1 L586 387.1 L587 387.1 L588 387.1" stroke="#96004e" stroke-width="7" fill="none"/>
<path d="M473 455.0 L474 451.3 L475 447.8 L476 444.6 L477 441.5 L478 438.5 L479 435.7 L480 433.1 L481 430.6 L482 428.2 L483 426.0 L484 423.9 L485 421.9 L486 420.0 L487 418.2 L488 416.6 L489 415.0 L490 413.4 L491 412.0 L492 410.7 L493 409.4 L494 408.2 L495 407.0 L496 405.9 L497 404.9 L498 404.0 L499 403.0 L500 402.2 L501 401.4 L502 400.6 L503 399.8 L504 399.1 L505 398.5 L506 397.9 L507 397.3 L508 396.7 L509 396.2 L510 395.7 L511 395.2 L512 394.8 L513 394.4 L514 394.0 L515 393.6 L516 393.2 L517 392.9 L518 392.6 L519 392.3 L520 392.0 L521 391.7 L522 391.5 L523 391.2 L524 391.0 L525 390.8 L526 390.6 L527 390.4 L528 390.2 L529 390.0 L530 389.9 L531 389.7 L532 389.6 L533 389.4 L534 389.3 L535 389.2 L536 389.1 L537 388.9 L538 388.8 L539 388.7 L540 388.6 L541 388.6 L542 388.5 L543 388.4 L544 388.3 L545 388.2 L546 388.2 L547 388.1 L548 388.1 L549 388.0 L550 387.9 L551 387.9 L552 387.8 L553 387.8 L554 387.8 L555 387.7 L556 387.7 L557 387.6 L558 387.6 L559 387.6 L560 387.5 L561 387.5 L562 387.5 L563 387.5 L564 387.4 L565 387.4 L566 387.4 L567 387.4 L568 387.3 L569 387.3 L570 387.3 L571 387.3 L572 387.3 L573 387.3 L574 387.2 L575 387.2 L576 387.2 L577 387.2 L578 387.2 L579 387.2 L580 387.2 L581 387.2 L582 387.2 L583 387.2 L584 387.1 L585 387.1 L586 387.1 L587 387.1 L588 387.1" stroke="#ff0a8a" stroke-width="3" fill="none"/>
<path d="M588 323.0 L589 326.5 L590 329.7 L591 332.8 L592 335.8 L593 338.5 L594 341.1 L595 343.6 L596 346.0 L597 348.2 L598 350.3 L599 352.3 L600 354.1 L601 355.9 L602 357.6 L603 359.2 L604 360.7 L605 362.1 L606 363.5 L607 364.7 L608 365.9 L609 367.1 L610 368.1 L611 369.2 L612 370.1 L613 371.0 L614 371.9 L615 372.7 L616 373.5 L617 374.2 L618 374.9 L619 375.6 L620 376.2 L621 376.8 L622 377.3 L623 377.8 L624 378.3 L625 378.8 L626 379.2 L627 379.7 L628 380.1 L629 380.4 L630 380.8 L631 381.1 L632 381.4 L633 381.7 L634 382.0 L635 382.3 L636 382.6 L637 382.8 L638 383.0 L639 383.2 L640 383.4 L641 383.6" stroke="#96004e" stroke-width="5" fill="none"/>
<path d="M588 323.0 L589 326.5 L590 329.7 L591 332.8 L592 335.8 L593 338.5 L594 341.1 L595 343.6 L596 346.0 L597 348.2 L598 350.3 L599 352.3 L600 354.1 L601 355.9 L602 357.6 L603 359.2 L604 360.7 L605 362.1 L606 363.5 L607 364.7 L608 365.9 L609 367.1 L610 368.1 L611 369.2 L612 370.1 L613 371.0 L614 371.9 L615 372.7 L616 373.5 L617 374.2 L618 374.9 L619 375.6 L620 376.2 L621 376.8 L622 377.3 L623 377.8 L624 378.3 L625 378.8 L626 379.2 L627 379.7 L628 380.1 L629 380.4 L630 380.8 L631 381.1 L632 381.4 L633 381.7 L634 382.0 L635 382.3 L636 382.6 L637 382.8 L638 383.0 L639 383.2 L640 383.4 L641 383.6" stroke="#ff0a8a" stroke-width="2.4" fill="none"/>
<line x1="422.5" y1="387" x2="422.5" y2="443" stroke="#a0005a" stroke-width="1" />
<line x1="625.5" y1="383" x2="625.5" y2="438" stroke="#a0005a" stroke-width="1" />
<line x1="473.5" y1="430" x2="473.5" y2="455" stroke="#a0005a" stroke-width="1" />
<line x1="588.5" y1="323" x2="588.5" y2="387" stroke="#a0005a" stroke-width="1" />
<path d="M642 368V368H643V368H644V368H645V360H646V360H647V360H648V360H649V360H650V352H651V352H652V352H653V352H654V352H655V352H656V352H657V421V421H656V421H655V421H654V421H653V421H652V421H651V421H650V413H649V413H648V413H647V413H646V413H645V409H644V409H643V409H642Z" fill="#8e004c" shape-rendering="crispEdges"/>
<path d="M657 345V345H658V345H659V343H660V347H661V345H662V345H663V344H664V344H665V344H666V345H667V345H668V346H669V345H670V345H671V349H672V344H673V346H674V344H675V345H676V345H677V345H678V345H679V343H680V346H681V344H682V346H683V346H684V345H685V345H686V345H687V346H688V345H689V345H690V345H691V345H692V345H693V345H694V345H695V346H696V345H697V345H698V345H699V345H700V345H701V346H702V344H703V344H704V346H705V345H706V345H707V345H708V345H709V344H710V345H711V346H712V345H713V344H714V346H715V346H716V346H717V344H718V344H719V345H720V347H721V346H722V345H723V345H724V346H725V345H726V345H727V346H728V347H729V347H730V346H731V346H732V344H733V344H734V344H735V344H736V345H737V347H738V346H739V344H740V344H741V344H742V345H743V344H744V346H745V345H746V345H747V345H748V345H749V344H750V344H751V345H752V346H753V345H754V347H755V346H756V345H757V345H758V345H759V345H760V344H761V346H762V346H763V345H764V345H765V345H766V345H767V345H768V345H769V346H770V344H771V345H772V345H773V345H774V345H775V346H776V345H777V345H778V344H779V345H780V345H781V345H782V346H783V344H784V344H785V348H786V345H787V346H788V345H789V346H790V346H791V346H792V343H793V344H794V344H795V346H796V342H797V346H798V344H799V345H800V345H801V346H802V347H803V344H804V344H805V347H806V344H807V345H808V345H809V345H810V344H811V344H812V347H813V345H814V346H815V345H816V344H817V345H818V345H819V345H820V345H821V344H822V346H823V346H824V348H825V345H826V346H827V344H828V345H829V348H830V345H831V345H832V346H833V347H834V347H835V345H836V345H837V344H838V346H839V344H840V344H841V345H842V344H843V343H844V342H845V345H846V345H847V345H848V342H849V345H850V346H851V344H852V344H853V344H854V345H855V345H856V346H857V344H858V344H859V343H860V344H861V344H862V344H863V346H864V346H865V346H866V346H867V345H868V345H869V345H870V343H871V345H872V345H873V346H874V345H875V342H876V344H877V345H878V345H879V344H880V346H881V346H882V345H883V344H884V346H885V345H886V343H887V345H888V347H889V345H890V345H891V348H892V346H893V346H894V348H895V346H896V345H897V346H898V344H899V345H900V345H901V347H902V345H903V346H904V345H905V344H906V346H907V346H908V345H909V345H910V344H911V346H912V344H913V346H914V345H915V346H916V345H917V345H918V346H919V346H920V345H921V347H922V344H923V343H924V344H925V344H926V344H927V346H928V345H929V344H930V346H931V345H932V345H933V344H934V345H935V345H936V344H937V344H938V344H939V346H940V344H941V342H942V344H943V346H944V345H945V345H946V345H947V345H948V344H949V344H950V429V429H949V431H948V430H947V430H946V431H945V431H944V431H943V431H942V430H941V429H940V427H939V431H938V431H937V430H936V429H935V430H934V429H933V432H932V430H931V430H930V431H929V432H928V431H927V430H926V432H925V430H924V429H923V431H922V433H921V429H920V431H919V430H918V430H917V431H916V430H915V431H914V431H913V429H912V430H911V428H910V430H909V430H908V430H907V429H906V430H905V431H904V429H903V430H902V429H901V430H900V429H899V430H898V431H897V430H896V430H895V430H894V430H893V430H892V431H891V431H890V430H889V430H888V429H887V429H886V431H885V431H884V431H883V430H882V430H881V431H880V429H879V430H878V430H877V429H876V429H875V430H874V430H873V430H872V432H871V430H870V430H869V430H868V430H867V430H866V430H865V427H864V430H863V429H862V430H861V429H860V431H859V430H858V431H857V430H856V430H855V430H854V431H853V429H852V430H851V431H850V429H849V430H848V427H847V431H846V431H845V430H844V430H843V430H842V431H841V430H840V431H839V430H838V430H837V429H836V431H835V429H834V431H833V430H832V429H831V429H830V430H829V430H828V431H827V432H826V429H825V430H824V429H823V430H822V430H821V433H820V430H819V430H818V431H817V430H816V431H815V429H814V429H813V429H812V429H811V429H810V431H809V431H808V431H807V431H806V431H805V431H804V431H803V430H802V430H801V430H800V431H799V430H798V430H797V433H796V430H795V430H794V430H793V431H792V430H791V429H790V429H789V433H788V431H787V429H786V430H785V432H784V431H783V430H782V430H781V431H780V431H779V429H778V430H777V431H776V429H775V430H774V430H773V429H772V430H771V432H770V430H769V430H768V429H767V430H766V429H765V430H764V427H763V429H762V431H761V430H760V431H759V430H758V430H757V430H756V428H755V431H754V431H753V430H752V427H751V431H750V430H749V430H748V430H747V430H746V429H745V430H744V430H743V431H742V431H741V431H740V430H739V429H738V429H737V431H736V432H735V429H734V429H733V430H732V430H731V431H730V428H729V429H728V430H727V430H726V429H725V430H724V429H723V430H722V431H721V429H720V431H719V430H718V429H717V430H716V430H715V430H714V431H713V431H712V430H711V431H710V430H709V429H708V430H707V431H706V429H705V430H704V429H703V430H702V431H701V429H700V430H699V428H698V430H697V430H696V431H695V430H694V428H693V433H692V429H691V429H690V430H689V430H688V430H687V430H686V431H685V429H684V429H683V430H682V431H681V430H680V431H679V430H678V429H677V427H676V426H675V430H674V430H673V429H672V430H671V429H670V431H669V430H668V431H667V430H666V429H665V430H664V432H663V430H662V430H661V430H660V431H659V429H658V430H657Z" fill="#7c0042" shape-rendering="crispEdges"/>
<path d="M644.5 279V476" stroke="#fff" stroke-width="2.6" stroke-dasharray="9 6 3 6" fill="none"/>
<text x="644" y="490" font-size="11" fill="#fff" text-anchor="middle" font-weight="normal" >C2</text>
<path d="M644 368.5V391.5M635.5 380H652.5" stroke="#000" stroke-width="4.6"/>
<path d="M644 369.5V390.5M636.5 380H651.5" stroke="#fff" stroke-width="2.4"/>
<path d="M155 502 L158 495 L161 502Z" fill="#ff1493"/>
<rect x="70.5" y="279.5" width="879" height="214" fill="none" stroke="#9a9a9a" stroke-width="1.2"/>
<text x="66" y="292" font-size="12" fill="#ff1493" text-anchor="end" font-weight="normal" >800 mV</text>
<text x="66" y="337.0" font-size="12" fill="#ff1493" text-anchor="end" font-weight="normal" >400 mV</text>
<text x="66" y="390.5" font-size="12" fill="#ff1493" text-anchor="end" font-weight="normal" >0 mV</text>
<text x="66" y="444.0" font-size="12" fill="#ff1493" text-anchor="end" font-weight="normal" >-400 mV</text>
<text x="66" y="491.5" font-size="12" fill="#ff1493" text-anchor="end" font-weight="normal" >-800 mV</text>
<text x="70" y="508" font-size="12" fill="#ff1493" text-anchor="start" font-weight="normal" >-100 ms</text>
<text x="246" y="508" font-size="12" fill="#ff1493" text-anchor="middle" font-weight="normal" >100 ms</text>
<text x="422" y="508" font-size="12" fill="#ff1493" text-anchor="middle" font-weight="normal" >300 ms</text>
<text x="598" y="508" font-size="12" fill="#ff1493" text-anchor="middle" font-weight="normal" >500 ms</text>
<text x="774" y="508" font-size="12" fill="#ff1493" text-anchor="middle" font-weight="normal" >700 ms</text>
<text x="950" y="508" font-size="12" fill="#ff1493" text-anchor="end" font-weight="normal" >900 ms</text>
<rect x="1073.5" y="286.5" width="85" height="177" fill="#0e1d1b" stroke="#24443f" stroke-width="1" />
<rect x="1170.5" y="286.5" width="137" height="177" fill="#0e1d1b" stroke="#24443f" stroke-width="1" />
<rect x="1495.5" y="286.5" width="110" height="177" fill="#0e1d1b" stroke="#24443f" stroke-width="1" />
<path d="M1118.5 281V493 M1206.5 281V493 M1294.5 281V493 M1382.5 281V493 M1558.5 281V493 M1646.5 281V493 M1734.5 281V493 M1822.5 281V493 M1032 306.5H1910 M1032 332.5H1910 M1032 359.5H1910 M1032 413.5H1910 M1032 440.5H1910 M1032 466.5H1910" stroke="#8e8e8e" stroke-width="1" stroke-dasharray="1 1" fill="none"/>
<path d="M1048 319h1v1h-1z M1065 319h1v1h-1z M1083 319h1v1h-1z M1100 319h1v1h-1z M1136 319h1v1h-1z M1153 319h1v1h-1z M1171 319h1v1h-1z M1188 319h1v1h-1z M1224 319h1v1h-1z M1241 319h1v1h-1z M1259 319h1v1h-1z M1276 319h1v1h-1z M1312 319h1v1h-1z M1329 319h1v1h-1z M1347 319h1v1h-1z M1364 319h1v1h-1z M1400 319h1v1h-1z M1417 319h1v1h-1z M1435 319h1v1h-1z M1452 319h1v1h-1z M1488 319h1v1h-1z M1505 319h1v1h-1z M1523 319h1v1h-1z M1540 319h1v1h-1z M1576 319h1v1h-1z M1593 319h1v1h-1z M1611 319h1v1h-1z M1628 319h1v1h-1z M1664 319h1v1h-1z M1681 319h1v1h-1z M1699 319h1v1h-1z M1716 319h1v1h-1z M1752 319h1v1h-1z M1769 319h1v1h-1z M1787 319h1v1h-1z M1804 319h1v1h-1z M1840 319h1v1h-1z M1857 319h1v1h-1z M1875 319h1v1h-1z M1892 319h1v1h-1z M1048 453h1v1h-1z M1065 453h1v1h-1z M1083 453h1v1h-1z M1100 453h1v1h-1z M1136 453h1v1h-1z M1153 453h1v1h-1z M1171 453h1v1h-1z M1188 453h1v1h-1z M1224 453h1v1h-1z M1241 453h1v1h-1z M1259 453h1v1h-1z M1276 453h1v1h-1z M1312 453h1v1h-1z M1329 453h1v1h-1z M1347 453h1v1h-1z M1364 453h1v1h-1z M1400 453h1v1h-1z M1417 453h1v1h-1z M1435 453h1v1h-1z M1452 453h1v1h-1z M1488 453h1v1h-1z M1505 453h1v1h-1z M1523 453h1v1h-1z M1540 453h1v1h-1z M1576 453h1v1h-1z M1593 453h1v1h-1z M1611 453h1v1h-1z M1628 453h1v1h-1z M1664 453h1v1h-1z M1681 453h1v1h-1z M1699 453h1v1h-1z M1716 453h1v1h-1z M1752 453h1v1h-1z M1769 453h1v1h-1z M1787 453h1v1h-1z M1804 453h1v1h-1z M1840 453h1v1h-1z M1857 453h1v1h-1z M1875 453h1v1h-1z M1892 453h1v1h-1z" fill="#8e8e8e"/>
<path d="M1470.5 279V493 M1030 386.5H1910 M1048.5 384.0V389.0 M1065.5 384.0V389.0 M1083.5 384.0V389.0 M1100.5 384.0V389.0 M1136.5 384.0V389.0 M1153.5 384.0V389.0 M1171.5 384.0V389.0 M1188.5 384.0V389.0 M1224.5 384.0V389.0 M1241.5 384.0V389.0 M1259.5 384.0V389.0 M1276.5 384.0V389.0 M1312.5 384.0V389.0 M1329.5 384.0V389.0 M1347.5 384.0V389.0 M1364.5 384.0V389.0 M1400.5 384.0V389.0 M1417.5 384.0V389.0 M1435.5 384.0V389.0 M1452.5 384.0V389.0 M1488.5 384.0V389.0 M1505.5 384.0V389.0 M1523.5 384.0V389.0 M1540.5 384.0V389.0 M1576.5 384.0V389.0 M1593.5 384.0V389.0 M1611.5 384.0V389.0 M1628.5 384.0V389.0 M1664.5 384.0V389.0 M1681.5 384.0V389.0 M1699.5 384.0V389.0 M1716.5 384.0V389.0 M1752.5 384.0V389.0 M1769.5 384.0V389.0 M1787.5 384.0V389.0 M1804.5 384.0V389.0 M1840.5 384.0V389.0 M1857.5 384.0V389.0 M1875.5 384.0V389.0 M1892.5 384.0V389.0" stroke="#7a7a7a" stroke-width="1" fill="none"/>
<path d="M1030 290.5 H1038 M1042 463 V300 Q1042 290.5 1051 290.5 H1055 M1059 463 V300 Q1059 290.5 1068 290.5 H1071 M1075 463 V300 Q1075 290.5 1084 290.5 H1089.5 M1093.5 463 V300 Q1093.5 290.5 1102.5 290.5 H1106.5 M1110.5 463 V300 Q1110.5 290.5 1119.5 290.5 H1123 M1127 463 V300 Q1127 290.5 1136 290.5 H1140.5 M1144.5 463 V300 Q1144.5 290.5 1153.5 290.5 H1157.5 M1161.5 463 V300 Q1161.5 290.5 1170.5 290.5 H1174 M1178 463 V300 Q1178 290.5 1187 290.5 H1192.5 M1196.5 463 V300 Q1196.5 290.5 1205.5 290.5 H1209 M1213 463 V300 Q1213 290.5 1222 290.5 H1227 M1231 463 V300 Q1231 290.5 1240 290.5 H1244 M1248 463 V300 Q1248 290.5 1257 290.5 H1288 M1292 463 V300 Q1292 290.5 1301 290.5 H1305.5 M1309.5 463 V300 Q1309.5 290.5 1318.5 290.5 H1325 M1329 463 V300 Q1329 290.5 1338 290.5 H1349 M1353 463 V300 Q1353 290.5 1362 290.5 H1366 M1370 463 V300 Q1370 290.5 1379 290.5 H1382.5 M1386.5 463 V300 Q1386.5 290.5 1395.5 290.5 H1401 M1405 463 V300 Q1405 290.5 1414 290.5 H1425 M1429 463 V300 Q1429 290.5 1438 290.5 H1442 M1446 463 V300 Q1446 290.5 1455 290.5 H1458.5 M1462.5 463 V300 Q1462.5 290.5 1471.5 290.5 H1477 M1481 463 V300 Q1481 290.5 1490 290.5 H1492.5 M1496.5 463 V300 Q1496.5 290.5 1505.5 290.5 H1510 M1514 463 V300 Q1514 290.5 1523 290.5 H1536.5 M1540.5 463 V300 Q1540.5 290.5 1549.5 290.5 H1554 M1558 463 V300 Q1558 290.5 1567 290.5 H1586 M1590 463 V300 Q1590 290.5 1599 290.5 H1604 M1608 463 V300 Q1608 290.5 1617 290.5 H1629 M1633 463 V300 Q1633 290.5 1642 290.5 H1644 M1648 463 V300 Q1648 290.5 1657 290.5 H1797.5 M1801.5 463 V300 Q1801.5 290.5 1810.5 290.5 H1817.5 M1821.5 463 V300 Q1821.5 290.5 1830.5 290.5 H1910" stroke="#a2186a" stroke-width="2.8" fill="none"/>
<path d="M1160 300 V465 Q1160 467 1166 467 H1170 V300" stroke="#a2105e" stroke-width="2" fill="none"/>
<rect x="1037" y="286" width="3" height="177" fill="#a6cdf5" />
<rect x="1037" y="286" width="3" height="7" fill="#3cd8e6" />
<rect x="1037" y="464" width="3" height="7" fill="#8a8a8a" />
<line x1="1040.5" y1="293" x2="1040.5" y2="463" stroke="#7fc8e8" stroke-width="1" />
<rect x="1054" y="286" width="3" height="177" fill="#a6cdf5" />
<rect x="1054" y="286" width="3" height="7" fill="#3cd8e6" />
<rect x="1054" y="464" width="3" height="7" fill="#8a8a8a" />
<line x1="1057.5" y1="293" x2="1057.5" y2="463" stroke="#7fc8e8" stroke-width="1" />
<rect x="1070" y="286" width="3" height="177" fill="#a6cdf5" />
<rect x="1070" y="286" width="3" height="7" fill="#3cd8e6" />
<rect x="1070" y="464" width="3" height="7" fill="#8a8a8a" />
<line x1="1073.5" y1="293" x2="1073.5" y2="463" stroke="#7fc8e8" stroke-width="1" />
<rect x="1088.5" y="286" width="3" height="177" fill="#a6cdf5" />
<rect x="1088.5" y="286" width="3" height="7" fill="#3cd8e6" />
<rect x="1088.5" y="464" width="3" height="7" fill="#8a8a8a" />
<line x1="1092.0" y1="293" x2="1092.0" y2="463" stroke="#7fc8e8" stroke-width="1" />
<rect x="1105.5" y="286" width="3" height="177" fill="#a6cdf5" />
<rect x="1105.5" y="286" width="3" height="7" fill="#3cd8e6" />
<rect x="1105.5" y="464" width="3" height="7" fill="#8a8a8a" />
<line x1="1109.0" y1="293" x2="1109.0" y2="463" stroke="#7fc8e8" stroke-width="1" />
<rect x="1122" y="286" width="3" height="177" fill="#a6cdf5" />
<rect x="1122" y="286" width="3" height="7" fill="#3cd8e6" />
<rect x="1122" y="464" width="3" height="7" fill="#8a8a8a" />
<line x1="1125.5" y1="293" x2="1125.5" y2="463" stroke="#7fc8e8" stroke-width="1" />
<rect x="1139.5" y="286" width="3" height="177" fill="#a6cdf5" />
<rect x="1139.5" y="286" width="3" height="7" fill="#3cd8e6" />
<rect x="1139.5" y="464" width="3" height="7" fill="#8a8a8a" />
<line x1="1143.0" y1="293" x2="1143.0" y2="463" stroke="#7fc8e8" stroke-width="1" />
<rect x="1156.5" y="286" width="3" height="177" fill="#a6cdf5" />
<rect x="1156.5" y="286" width="3" height="7" fill="#3cd8e6" />
<rect x="1156.5" y="464" width="3" height="7" fill="#8a8a8a" />
<line x1="1160.0" y1="293" x2="1160.0" y2="463" stroke="#7fc8e8" stroke-width="1" />
<rect x="1173" y="286" width="3" height="177" fill="#a6cdf5" />
<rect x="1173" y="286" width="3" height="7" fill="#3cd8e6" />
<rect x="1173" y="464" width="3" height="7" fill="#8a8a8a" />
<line x1="1176.5" y1="293" x2="1176.5" y2="463" stroke="#7fc8e8" stroke-width="1" />
<rect x="1191.5" y="286" width="3" height="177" fill="#a6cdf5" />
<rect x="1191.5" y="286" width="3" height="7" fill="#3cd8e6" />
<rect x="1191.5" y="464" width="3" height="7" fill="#8a8a8a" />
<line x1="1195.0" y1="293" x2="1195.0" y2="463" stroke="#7fc8e8" stroke-width="1" />
<rect x="1208" y="286" width="3" height="177" fill="#a6cdf5" />
<rect x="1208" y="286" width="3" height="7" fill="#3cd8e6" />
<rect x="1208" y="464" width="3" height="7" fill="#8a8a8a" />
<line x1="1211.5" y1="293" x2="1211.5" y2="463" stroke="#7fc8e8" stroke-width="1" />
<rect x="1226" y="286" width="3" height="177" fill="#a6cdf5" />
<rect x="1226" y="286" width="3" height="7" fill="#3cd8e6" />
<rect x="1226" y="464" width="3" height="7" fill="#8a8a8a" />
<line x1="1229.5" y1="293" x2="1229.5" y2="463" stroke="#7fc8e8" stroke-width="1" />
<rect x="1243" y="286" width="3" height="177" fill="#a6cdf5" />
<rect x="1243" y="286" width="3" height="7" fill="#3cd8e6" />
<rect x="1243" y="464" width="3" height="7" fill="#8a8a8a" />
<line x1="1246.5" y1="293" x2="1246.5" y2="463" stroke="#7fc8e8" stroke-width="1" />
<rect x="1287" y="286" width="3" height="177" fill="#a6cdf5" />
<rect x="1287" y="286" width="3" height="7" fill="#3cd8e6" />
<rect x="1287" y="464" width="3" height="7" fill="#8a8a8a" />
<line x1="1290.5" y1="293" x2="1290.5" y2="463" stroke="#7fc8e8" stroke-width="1" />
<rect x="1304.5" y="286" width="3" height="177" fill="#a6cdf5" />
<rect x="1304.5" y="286" width="3" height="7" fill="#3cd8e6" />
<rect x="1304.5" y="464" width="3" height="7" fill="#8a8a8a" />
<line x1="1308.0" y1="293" x2="1308.0" y2="463" stroke="#7fc8e8" stroke-width="1" />
<rect x="1324" y="286" width="5" height="177" fill="#a6cdf5" />
<rect x="1324" y="286" width="5" height="7" fill="#3cd8e6" />
<rect x="1324" y="464" width="5" height="7" fill="#8a8a8a" />
<line x1="1329.5" y1="293" x2="1329.5" y2="463" stroke="#7fc8e8" stroke-width="1" />
<rect x="1348" y="286" width="3" height="177" fill="#a6cdf5" />
<rect x="1348" y="286" width="3" height="7" fill="#3cd8e6" />
<rect x="1348" y="464" width="3" height="7" fill="#8a8a8a" />
<line x1="1351.5" y1="293" x2="1351.5" y2="463" stroke="#7fc8e8" stroke-width="1" />
<rect x="1365" y="286" width="3" height="177" fill="#a6cdf5" />
<rect x="1365" y="286" width="3" height="7" fill="#3cd8e6" />
<rect x="1365" y="464" width="3" height="7" fill="#8a8a8a" />
<line x1="1368.5" y1="293" x2="1368.5" y2="463" stroke="#7fc8e8" stroke-width="1" />
<rect x="1381.5" y="286" width="3" height="177" fill="#a6cdf5" />
<rect x="1381.5" y="286" width="3" height="7" fill="#3cd8e6" />
<rect x="1381.5" y="464" width="3" height="7" fill="#8a8a8a" />
<line x1="1385.0" y1="293" x2="1385.0" y2="463" stroke="#7fc8e8" stroke-width="1" />
<rect x="1400" y="286" width="5" height="177" fill="#a6cdf5" />
<rect x="1400" y="286" width="5" height="7" fill="#3cd8e6" />
<rect x="1400" y="464" width="5" height="7" fill="#8a8a8a" />
<line x1="1405.5" y1="293" x2="1405.5" y2="463" stroke="#7fc8e8" stroke-width="1" />
<rect x="1424" y="286" width="3" height="177" fill="#a6cdf5" />
<rect x="1424" y="286" width="3" height="7" fill="#3cd8e6" />
<rect x="1424" y="464" width="3" height="7" fill="#8a8a8a" />
<line x1="1427.5" y1="293" x2="1427.5" y2="463" stroke="#7fc8e8" stroke-width="1" />
<rect x="1441" y="286" width="3" height="177" fill="#a6cdf5" />
<rect x="1441" y="286" width="3" height="7" fill="#3cd8e6" />
<rect x="1441" y="464" width="3" height="7" fill="#8a8a8a" />
<line x1="1444.5" y1="293" x2="1444.5" y2="463" stroke="#7fc8e8" stroke-width="1" />
<rect x="1457.5" y="286" width="3" height="177" fill="#a6cdf5" />
<rect x="1457.5" y="286" width="3" height="7" fill="#3cd8e6" />
<rect x="1457.5" y="464" width="3" height="7" fill="#8a8a8a" />
<line x1="1461.0" y1="293" x2="1461.0" y2="463" stroke="#7fc8e8" stroke-width="1" />
<rect x="1476" y="286" width="5" height="177" fill="#a6cdf5" />
<rect x="1476" y="286" width="5" height="7" fill="#3cd8e6" />
<rect x="1476" y="464" width="5" height="7" fill="#8a8a8a" />
<line x1="1481.5" y1="293" x2="1481.5" y2="463" stroke="#7fc8e8" stroke-width="1" />
<rect x="1491.5" y="286" width="3" height="177" fill="#a6cdf5" />
<rect x="1491.5" y="286" width="3" height="7" fill="#3cd8e6" />
<rect x="1491.5" y="464" width="3" height="7" fill="#8a8a8a" />
<line x1="1495.0" y1="293" x2="1495.0" y2="463" stroke="#7fc8e8" stroke-width="1" />
<rect x="1509" y="286" width="3" height="177" fill="#a6cdf5" />
<rect x="1509" y="286" width="3" height="7" fill="#3cd8e6" />
<rect x="1509" y="464" width="3" height="7" fill="#8a8a8a" />
<line x1="1512.5" y1="293" x2="1512.5" y2="463" stroke="#7fc8e8" stroke-width="1" />
<rect x="1535.5" y="286" width="3" height="177" fill="#a6cdf5" />
<rect x="1535.5" y="286" width="3" height="7" fill="#3cd8e6" />
<rect x="1535.5" y="464" width="3" height="7" fill="#8a8a8a" />
<line x1="1539.0" y1="293" x2="1539.0" y2="463" stroke="#7fc8e8" stroke-width="1" />
<rect x="1553" y="286" width="3" height="177" fill="#a6cdf5" />
<rect x="1553" y="286" width="3" height="7" fill="#3cd8e6" />
<rect x="1553" y="464" width="3" height="7" fill="#8a8a8a" />
<line x1="1556.5" y1="293" x2="1556.5" y2="463" stroke="#7fc8e8" stroke-width="1" />
<rect x="1585" y="286" width="3" height="177" fill="#a6cdf5" />
<rect x="1585" y="286" width="3" height="7" fill="#3cd8e6" />
<rect x="1585" y="464" width="3" height="7" fill="#8a8a8a" />
<line x1="1588.5" y1="293" x2="1588.5" y2="463" stroke="#7fc8e8" stroke-width="1" />
<rect x="1603" y="286" width="3" height="177" fill="#a6cdf5" />
<rect x="1603" y="286" width="3" height="7" fill="#3cd8e6" />
<rect x="1603" y="464" width="3" height="7" fill="#8a8a8a" />
<line x1="1606.5" y1="293" x2="1606.5" y2="463" stroke="#7fc8e8" stroke-width="1" />
<rect x="1628" y="286" width="3" height="177" fill="#a6cdf5" />
<rect x="1628" y="286" width="3" height="7" fill="#3cd8e6" />
<rect x="1628" y="464" width="3" height="7" fill="#8a8a8a" />
<line x1="1631.5" y1="293" x2="1631.5" y2="463" stroke="#7fc8e8" stroke-width="1" />
<rect x="1643" y="286" width="3" height="177" fill="#a6cdf5" />
<rect x="1643" y="286" width="3" height="7" fill="#3cd8e6" />
<rect x="1643" y="464" width="3" height="7" fill="#8a8a8a" />
<line x1="1646.5" y1="293" x2="1646.5" y2="463" stroke="#7fc8e8" stroke-width="1" />
<rect x="1796.5" y="286" width="5" height="177" fill="#a6cdf5" />
<rect x="1796.5" y="286" width="5" height="7" fill="#3cd8e6" />
<rect x="1796.5" y="464" width="5" height="7" fill="#8a8a8a" />
<line x1="1802.0" y1="293" x2="1802.0" y2="463" stroke="#7fc8e8" stroke-width="1" />
<rect x="1816.5" y="286" width="3" height="177" fill="#a6cdf5" />
<rect x="1816.5" y="286" width="3" height="7" fill="#3cd8e6" />
<rect x="1816.5" y="464" width="3" height="7" fill="#8a8a8a" />
<line x1="1820.0" y1="293" x2="1820.0" y2="463" stroke="#7fc8e8" stroke-width="1" />
<path d="M1030 305.5 H1910" stroke="#b4a8ff" stroke-width="1.2" stroke-dasharray="3 2"/>
<text x="1042" y="368" font-size="14" fill="#fff" transform="rotate(-70 1042 368)">Request</text>
<text x="1059" y="368" font-size="14" fill="#fff" transform="rotate(-70 1059 368)">Request</text>
<text x="1075" y="368" font-size="14" fill="#fff" transform="rotate(-70 1075 368)">Request</text>
<text x="1093.5" y="368" font-size="14" fill="#fff" transform="rotate(-70 1093.5 368)">Request</text>
<text x="1110.5" y="368" font-size="14" fill="#fff" transform="rotate(-70 1110.5 368)">Request</text>
<text x="1127" y="368" font-size="14" fill="#fff" transform="rotate(-70 1127 368)">Request</text>
<text x="1144.5" y="368" font-size="14" fill="#fff" transform="rotate(-70 1144.5 368)">Request</text>
<text x="1161.5" y="368" font-size="14" fill="#fff" transform="rotate(-70 1161.5 368)">Request</text>
<text x="1178" y="368" font-size="14" fill="#fff" transform="rotate(-70 1178 368)">Request</text>
<text x="1196.5" y="368" font-size="14" fill="#fff" transform="rotate(-70 1196.5 368)">Request</text>
<text x="1213" y="368" font-size="14" fill="#fff" transform="rotate(-70 1213 368)">Request</text>
<text x="1231" y="368" font-size="14" fill="#fff" transform="rotate(-70 1231 368)">Request</text>
<text x="1248" y="368" font-size="14" fill="#fff" transform="rotate(-70 1248 368)">Request</text>
<text x="1292" y="368" font-size="14" fill="#fff" transform="rotate(-70 1292 368)">Request</text>
<text x="1309.5" y="368" font-size="14" fill="#fff" transform="rotate(-70 1309.5 368)">Request</text>
<text x="1329" y="368" font-size="14" fill="#fff" transform="rotate(-70 1329 368)">Request</text>
<text x="1353" y="368" font-size="14" fill="#fff" transform="rotate(-70 1353 368)">Request</text>
<text x="1370" y="368" font-size="14" fill="#fff" transform="rotate(-70 1370 368)">Request</text>
<text x="1386.5" y="368" font-size="14" fill="#fff" transform="rotate(-70 1386.5 368)">Request</text>
<text x="1405" y="368" font-size="14" fill="#fff" transform="rotate(-70 1405 368)">Request</text>
<text x="1429" y="368" font-size="14" fill="#fff" transform="rotate(-70 1429 368)">Request</text>
<text x="1446" y="368" font-size="14" fill="#fff" transform="rotate(-70 1446 368)">Request</text>
<text x="1462.5" y="368" font-size="14" fill="#fff" transform="rotate(-70 1462.5 368)">Request</text>
<text x="1481" y="368" font-size="14" fill="#fff" transform="rotate(-70 1481 368)">Request</text>
<text x="1496.5" y="368" font-size="14" fill="#fff" transform="rotate(-70 1496.5 368)">Request</text>
<text x="1514" y="368" font-size="14" fill="#fff" transform="rotate(-70 1514 368)">Request</text>
<text x="1540.5" y="368" font-size="14" fill="#fff" transform="rotate(-70 1540.5 368)">Request</text>
<text x="1558" y="368" font-size="14" fill="#fff" transform="rotate(-70 1558 368)">Request</text>
<text x="1590" y="368" font-size="14" fill="#fff" transform="rotate(-70 1590 368)">Request</text>
<text x="1608" y="368" font-size="14" fill="#fff" transform="rotate(-70 1608 368)">Request</text>
<text x="1633" y="368" font-size="14" fill="#fff" transform="rotate(-70 1633 368)">Request</text>
<text x="1648" y="368" font-size="14" fill="#fff" transform="rotate(-70 1648 368)">Request</text>
<text x="1801.5" y="368" font-size="14" fill="#fff" transform="rotate(-70 1801.5 368)">Request</text>
<text x="1821.5" y="368" font-size="14" fill="#fff" transform="rotate(-70 1821.5 368)">Request</text>
<text x="1097.5" y="370" font-size="14" fill="#fff" transform="rotate(-70 1097.5 370)">Request</text>
<text x="1131" y="370" font-size="14" fill="#fff" transform="rotate(-70 1131 370)">Request</text>
<text x="1148.5" y="370" font-size="14" fill="#fff" transform="rotate(-70 1148.5 370)">Request</text>
<text x="1313.5" y="370" font-size="14" fill="#fff" transform="rotate(-70 1313.5 370)">Request</text>
<text x="1409" y="370" font-size="14" fill="#fff" transform="rotate(-70 1409 370)">Request</text>
<text x="1485" y="370" font-size="14" fill="#fff" transform="rotate(-70 1485 370)">Request</text>
<text x="1500.5" y="370" font-size="14" fill="#fff" transform="rotate(-70 1500.5 370)">Request</text>
<text x="1805.5" y="370" font-size="14" fill="#fff" transform="rotate(-70 1805.5 370)">Request</text>
<text x="1267" y="297" font-size="12" fill="#fff" text-anchor="middle" font-weight="normal" >Idle</text>
<text x="1571" y="297" font-size="12" fill="#fff" text-anchor="middle" font-weight="normal" >Idle</text>
<g clip-path="url(#cl4)">
<rect x="1024" y="291" width="35" height="13" fill="#7a1a7c" stroke="#ff30ff" stroke-width="1" />
<rect x="1024" y="305" width="50" height="13" fill="#7a1a7c" stroke="#ff30ff" stroke-width="1" />
<text x="1025" y="302" font-size="12" fill="#fff" text-anchor="start" font-weight="normal" >DP-AUX</text>
<text x="1040" y="316" font-size="11" fill="#fff" text-anchor="start" font-weight="normal" >1000000</text>
</g>
<path d="M1290.5 279V476" stroke="#fff" stroke-width="2.6" stroke-dasharray="9 6 3 6" fill="none"/>
<text x="1290" y="490" font-size="11" fill="#fff" text-anchor="middle" font-weight="normal" >Z2</text>
<path d="M1290 402.5V425.5M1281.5 414H1298.5" stroke="#000" stroke-width="4.6"/>
<path d="M1290 403.5V424.5M1282.5 414H1297.5" stroke="#fff" stroke-width="2.4"/>
<path d="M1018 467.5 H1030" stroke="#ff1493" stroke-width="1.5"/>
<rect x="1030.5" y="279.5" width="879" height="214" fill="none" stroke="#9a9a9a" stroke-width="1.2"/>
<text x="1026" y="292" font-size="12" fill="#ff1493" text-anchor="end" font-weight="normal" >3.5 V</text>
<text x="1026" y="337.0" font-size="12" fill="#ff1493" text-anchor="end" font-weight="normal" >2.5 V</text>
<text x="1026" y="390.5" font-size="12" fill="#ff1493" text-anchor="end" font-weight="normal" >1.5 V</text>
<text x="1026" y="444.0" font-size="12" fill="#ff1493" text-anchor="end" font-weight="normal" >500 mV</text>
<text x="1026" y="491.5" font-size="12" fill="#ff1493" text-anchor="end" font-weight="normal" >-500 mV</text>
<text x="1030" y="508" font-size="12" fill="#ff1493" text-anchor="start" font-weight="normal" >536.35 ms</text>
<text x="1206" y="508" font-size="12" fill="#ff1493" text-anchor="middle" font-weight="normal" >546.35 ms</text>
<text x="1382" y="508" font-size="12" fill="#ff1493" text-anchor="middle" font-weight="normal" >556.35 ms</text>
<text x="1558" y="508" font-size="12" fill="#ff1493" text-anchor="middle" font-weight="normal" >566.35 ms</text>
<text x="1734" y="508" font-size="12" fill="#ff1493" text-anchor="middle" font-weight="normal" >576.35 ms</text>
<text x="1910" y="508" font-size="12" fill="#ff1493" text-anchor="end" font-weight="normal" >586.35 ms</text>
<path d="M1024 498L1027.5 494.5M1024 498L1027.5 501.5M1024 498H1030L1031 500" stroke="#ff1493" stroke-width="1.2" fill="none"/>
<rect x="70" y="535" width="346" height="169" fill="#0e1d1b" />
<rect x="70" y="703" width="346" height="1" fill="#2c4a46" />
<path d="M158.5 530V735 M246.5 530V735 M334.5 530V735 M422.5 530V735 M598.5 530V735 M686.5 530V735 M774.5 530V735 M862.5 530V735 M72 554.5H950 M72 580.5H950 M72 606.5H950 M72 657.5H950 M72 683.5H950 M72 709.5H950" stroke="#8e8e8e" stroke-width="1" stroke-dasharray="1 1" fill="none"/>
<path d="M88 567h1v1h-1z M105 567h1v1h-1z M123 567h1v1h-1z M140 567h1v1h-1z M176 567h1v1h-1z M193 567h1v1h-1z M211 567h1v1h-1z M228 567h1v1h-1z M264 567h1v1h-1z M281 567h1v1h-1z M299 567h1v1h-1z M316 567h1v1h-1z M352 567h1v1h-1z M369 567h1v1h-1z M387 567h1v1h-1z M404 567h1v1h-1z M440 567h1v1h-1z M457 567h1v1h-1z M475 567h1v1h-1z M492 567h1v1h-1z M528 567h1v1h-1z M545 567h1v1h-1z M563 567h1v1h-1z M580 567h1v1h-1z M616 567h1v1h-1z M633 567h1v1h-1z M651 567h1v1h-1z M668 567h1v1h-1z M704 567h1v1h-1z M721 567h1v1h-1z M739 567h1v1h-1z M756 567h1v1h-1z M792 567h1v1h-1z M809 567h1v1h-1z M827 567h1v1h-1z M844 567h1v1h-1z M880 567h1v1h-1z M897 567h1v1h-1z M915 567h1v1h-1z M932 567h1v1h-1z M88 696h1v1h-1z M105 696h1v1h-1z M123 696h1v1h-1z M140 696h1v1h-1z M176 696h1v1h-1z M193 696h1v1h-1z M211 696h1v1h-1z M228 696h1v1h-1z M264 696h1v1h-1z M281 696h1v1h-1z M299 696h1v1h-1z M316 696h1v1h-1z M352 696h1v1h-1z M369 696h1v1h-1z M387 696h1v1h-1z M404 696h1v1h-1z M440 696h1v1h-1z M457 696h1v1h-1z M475 696h1v1h-1z M492 696h1v1h-1z M528 696h1v1h-1z M545 696h1v1h-1z M563 696h1v1h-1z M580 696h1v1h-1z M616 696h1v1h-1z M633 696h1v1h-1z M651 696h1v1h-1z M668 696h1v1h-1z M704 696h1v1h-1z M721 696h1v1h-1z M739 696h1v1h-1z M756 696h1v1h-1z M792 696h1v1h-1z M809 696h1v1h-1z M827 696h1v1h-1z M844 696h1v1h-1z M880 696h1v1h-1z M897 696h1v1h-1z M915 696h1v1h-1z M932 696h1v1h-1z" fill="#8e8e8e"/>
<path d="M510.5 528V735 M70 632.5H950 M88.5 630.0V635.0 M105.5 630.0V635.0 M123.5 630.0V635.0 M140.5 630.0V635.0 M176.5 630.0V635.0 M193.5 630.0V635.0 M211.5 630.0V635.0 M228.5 630.0V635.0 M264.5 630.0V635.0 M281.5 630.0V635.0 M299.5 630.0V635.0 M316.5 630.0V635.0 M352.5 630.0V635.0 M369.5 630.0V635.0 M387.5 630.0V635.0 M404.5 630.0V635.0 M440.5 630.0V635.0 M457.5 630.0V635.0 M475.5 630.0V635.0 M492.5 630.0V635.0 M528.5 630.0V635.0 M545.5 630.0V635.0 M563.5 630.0V635.0 M580.5 630.0V635.0 M616.5 630.0V635.0 M633.5 630.0V635.0 M651.5 630.0V635.0 M668.5 630.0V635.0 M704.5 630.0V635.0 M721.5 630.0V635.0 M739.5 630.0V635.0 M756.5 630.0V635.0 M792.5 630.0V635.0 M809.5 630.0V635.0 M827.5 630.0V635.0 M844.5 630.0V635.0 M880.5 630.0V635.0 M897.5 630.0V635.0 M915.5 630.0V635.0 M932.5 630.0V635.0" stroke="#7a7a7a" stroke-width="1" fill="none"/>
<path d="M70 539.5 H950" stroke="#1c9c1c" stroke-width="3"/>
<path d="M785.3 537.5V536.6 M653.6 537.5V535.6 M747.4 537.5V535.1 M495.4 537.5V537.0 M603.8 537.5V536.9 M623.9 537.5V536.5 M830.6 537.5V536.0 M914.5 537.5V535.5 M556.7 537.5V535.6 M877.5 537.5V536.3 M675.9 537.5V535.0 M872.7 537.5V535.8 M589.6 537.5V536.5 M607.6 537.5V535.3 M836.8 537.5V536.9 M522.5 537.5V536.1 M703.5 537.5V536.3 M704.7 537.5V536.1 M599.0 537.5V535.4 M813.1 537.5V535.4 M546.5 537.5V536.4 M575.5 537.5V536.5 M699.8 537.5V536.6 M918.3 537.5V537.0 M670.3 537.5V535.5 M676.8 537.5V535.4 M521.0 537.5V536.2 M620.9 537.5V535.0 M932.3 537.5V535.7 M755.9 537.5V536.3 M658.8 537.5V536.5 M552.6 537.5V535.5 M826.9 537.5V536.6 M551.8 537.5V535.4 M674.4 537.5V535.6 M587.3 537.5V535.6 M918.6 537.5V535.3 M640.5 537.5V536.8 M808.7 537.5V535.2 M643.5 537.5V535.5 M936.0 537.5V536.2 M737.2 537.5V536.2 M613.7 537.5V536.5 M737.1 537.5V536.3 M510.7 537.5V536.7 M691.7 537.5V536.4 M568.6 537.5V536.6 M779.9 537.5V535.8 M845.8 537.5V535.7 M894.4 537.5V535.4 M744.7 537.5V535.7 M766.8 537.5V535.9 M487.9 537.5V535.7 M684.4 537.5V535.2 M503.6 537.5V536.7 M789.5 537.5V535.1 M835.3 537.5V536.2 M520.7 537.5V536.8 M842.6 537.5V535.4 M789.9 537.5V536.5 M890.5 537.5V535.6 M700.7 537.5V536.9 M636.6 537.5V536.5 M686.8 537.5V536.1 M735.7 537.5V535.4 M916.9 537.5V535.3 M482.3 537.5V536.2 M559.9 537.5V536.7 M913.7 537.5V536.6 M520.0 537.5V535.6 M644.1 537.5V536.5 M843.8 537.5V535.8 M690.3 537.5V535.9 M534.2 537.5V535.1 M657.6 537.5V535.6 M592.7 537.5V536.8 M464.4 537.5V536.5 M460.6 537.5V535.8 M580.4 537.5V535.8 M753.6 537.5V536.0 M807.6 537.5V535.5 M652.2 537.5V536.4 M792.7 537.5V535.4 M769.0 537.5V535.1 M806.8 537.5V536.6 M666.3 537.5V536.3 M620.8 537.5V535.3 M664.9 537.5V535.6 M635.0 537.5V537.0 M487.1 537.5V535.2 M836.6 537.5V535.0 M559.7 537.5V536.4 M788.5 537.5V535.1 M461.8 537.5V536.1 M937.7 537.5V536.0 M786.0 537.5V536.6 M691.5 537.5V535.3 M869.0 537.5V536.4 M658.4 537.5V535.5 M480.2 537.5V535.3 M778.0 537.5V536.5 M547.5 537.5V535.4 M715.5 537.5V535.7 M699.4 537.5V535.0 M778.0 537.5V535.7 M695.8 537.5V535.9 M938.6 537.5V535.5 M694.6 537.5V536.5 M647.9 537.5V536.8 M825.0 537.5V535.5 M946.9 537.5V536.7 M907.8 537.5V535.8 M705.6 537.5V536.1 M552.7 537.5V535.2 M668.2 537.5V536.3 M744.3 537.5V536.2 M591.8 537.5V535.1 M855.6 537.5V536.8 M457.9 537.5V535.8 M469.7 537.5V535.5" stroke="#1c9c1c" stroke-width="1"/>
<rect x="157" y="535" width="8" height="81" fill="#22c8f6" />
<rect x="157" y="616" width="8" height="88" fill="#a6cdf5" />
<rect x="157" y="705" width="8" height="7" fill="#878787" />
<rect x="197.5" y="535" width="144.5" height="81" fill="#22c8f6" />
<rect x="197.5" y="616" width="144.5" height="88" fill="#a6cdf5" />
<rect x="197.5" y="705" width="144.5" height="7" fill="#878787" />
<rect x="416" y="535" width="32" height="81" fill="#22c8f6" />
<rect x="416" y="616" width="32" height="88" fill="#a6cdf5" />
<rect x="416" y="705" width="32" height="7" fill="#878787" />
<path d="M203 535V705 M213 535V705 M221 535V705 M231 535V705 M246 535V705 M262 535V705 M282 535V705 M294 535V705 M300 535V705 M313 535V705 M318 535V705 M322 535V705 M330 535V705 M338 535V705 M430 535V705 M436 535V705 M447.5 535V705" stroke="#22aa22" stroke-width="1"/>
<rect x="389" y="535" width="3" height="169" fill="#a6cdf5" />
<rect x="389" y="535" width="3" height="81" fill="#22c8f6" />
<rect x="389" y="705" width="3" height="7" fill="#878787" />
<rect x="469.5" y="535" width="3" height="169" fill="#a6cdf5" />
<rect x="469.5" y="535" width="3" height="81" fill="#22c8f6" />
<rect x="469.5" y="705" width="3" height="7" fill="#878787" />
<rect x="569" y="535" width="6.5" height="81" fill="#22c8f6" />
<rect x="569" y="616" width="6.5" height="88" fill="#a6cdf5" />
<rect x="569" y="705" width="6.5" height="7" fill="#878787" />
<rect x="623" y="535" width="5" height="169" fill="#a6cdf5" />
<rect x="623" y="535" width="5" height="81" fill="#22c8f6" />
<rect x="628" y="535" width="33" height="169" fill="#ffc6ee" />
<rect x="623" y="705" width="38" height="7" fill="#878787" />
<rect x="667.5" y="535" width="2.5" height="169" fill="#ffb6e6" />
<rect x="660" y="539" width="12" height="3" fill="#ff1070" />
<path d="M70 554.5 H950" stroke="#8a7cff" stroke-width="1.2" stroke-dasharray="4 3"/>
<text x="114" y="546" font-size="12" fill="#fff" text-anchor="middle" font-weight="normal" >Idle</text>
<text x="181" y="546" font-size="12" fill="#fff" text-anchor="middle" font-weight="normal" >Idle</text>
<text x="365" y="546" font-size="12" fill="#fff" text-anchor="middle" font-weight="normal" >Idle</text>
<text x="160" y="614" font-size="14" fill="#fff" transform="rotate(-70 160 614)">Request</text>
<text x="162" y="614" font-size="14" fill="#fff" transform="rotate(-70 162 614)">Request</text>
<text x="164" y="614" font-size="14" fill="#fff" transform="rotate(-70 164 614)">Request</text>
<text x="166" y="614" font-size="14" fill="#fff" transform="rotate(-70 166 614)">Request</text>
<text x="168" y="614" font-size="14" fill="#fff" transform="rotate(-70 168 614)">Request</text>
<text x="202" y="614" font-size="14" fill="#fff" transform="rotate(-70 202 614)">Request</text>
<text x="203.5" y="614" font-size="14" fill="#fff" transform="rotate(-70 203.5 614)">Request</text>
<text x="205.0" y="614" font-size="14" fill="#fff" transform="rotate(-70 205.0 614)">Request</text>
<text x="206.5" y="614" font-size="14" fill="#fff" transform="rotate(-70 206.5 614)">Request</text>
<text x="208.0" y="614" font-size="14" fill="#fff" transform="rotate(-70 208.0 614)">Request</text>
<text x="209.5" y="614" font-size="14" fill="#fff" transform="rotate(-70 209.5 614)">Request</text>
<text x="211.0" y="614" font-size="14" fill="#fff" transform="rotate(-70 211.0 614)">Request</text>
<text x="212.5" y="614" font-size="14" fill="#fff" transform="rotate(-70 212.5 614)">Request</text>
<text x="214.0" y="614" font-size="14" fill="#fff" transform="rotate(-70 214.0 614)">Request</text>
<text x="215.5" y="614" font-size="14" fill="#fff" transform="rotate(-70 215.5 614)">Request</text>
<text x="217.0" y="614" font-size="14" fill="#fff" transform="rotate(-70 217.0 614)">Request</text>
<text x="218.5" y="614" font-size="14" fill="#fff" transform="rotate(-70 218.5 614)">Request</text>
<text x="220.0" y="614" font-size="14" fill="#fff" transform="rotate(-70 220.0 614)">Request</text>
<text x="221.5" y="614" font-size="14" fill="#fff" transform="rotate(-70 221.5 614)">Request</text>
<text x="223.0" y="614" font-size="14" fill="#fff" transform="rotate(-70 223.0 614)">Request</text>
<text x="224.5" y="614" font-size="14" fill="#fff" transform="rotate(-70 224.5 614)">Request</text>
<text x="226.0" y="614" font-size="14" fill="#fff" transform="rotate(-70 226.0 614)">Request</text>
<text x="227.5" y="614" font-size="14" fill="#fff" transform="rotate(-70 227.5 614)">Request</text>
<text x="229.0" y="614" font-size="14" fill="#fff" transform="rotate(-70 229.0 614)">Request</text>
<text x="230.5" y="614" font-size="14" fill="#fff" transform="rotate(-70 230.5 614)">Request</text>
<text x="232.0" y="614" font-size="14" fill="#fff" transform="rotate(-70 232.0 614)">Request</text>
<text x="233.5" y="614" font-size="14" fill="#fff" transform="rotate(-70 233.5 614)">Request</text>
<text x="235.0" y="614" font-size="14" fill="#fff" transform="rotate(-70 235.0 614)">Request</text>
<text x="236.5" y="614" font-size="14" fill="#fff" transform="rotate(-70 236.5 614)">Request</text>
<text x="238.0" y="614" font-size="14" fill="#fff" transform="rotate(-70 238.0 614)">Request</text>
<text x="239.5" y="614" font-size="14" fill="#fff" transform="rotate(-70 239.5 614)">Request</text>
<text x="241.0" y="614" font-size="14" fill="#fff" transform="rotate(-70 241.0 614)">Request</text>
<text x="242.5" y="614" font-size="14" fill="#fff" transform="rotate(-70 242.5 614)">Request</text>
<text x="244.0" y="614" font-size="14" fill="#fff" transform="rotate(-70 244.0 614)">Request</text>
<text x="245.5" y="614" font-size="14" fill="#fff" transform="rotate(-70 245.5 614)">Request</text>
<text x="247.0" y="614" font-size="14" fill="#fff" transform="rotate(-70 247.0 614)">Request</text>
<text x="248.5" y="614" font-size="14" fill="#fff" transform="rotate(-70 248.5 614)">Request</text>
<text x="250.0" y="614" font-size="14" fill="#fff" transform="rotate(-70 250.0 614)">Request</text>
<text x="251.5" y="614" font-size="14" fill="#fff" transform="rotate(-70 251.5 614)">Request</text>
<text x="253.0" y="614" font-size="14" fill="#fff" transform="rotate(-70 253.0 614)">Request</text>
<text x="254.5" y="614" font-size="14" fill="#fff" transform="rotate(-70 254.5 614)">Request</text>
<text x="256.0" y="614" font-size="14" fill="#fff" transform="rotate(-70 256.0 614)">Request</text>
<text x="257.5" y="614" font-size="14" fill="#fff" transform="rotate(-70 257.5 614)">Request</text>
<text x="259.0" y="614" font-size="14" fill="#fff" transform="rotate(-70 259.0 614)">Request</text>
<text x="260.5" y="614" font-size="14" fill="#fff" transform="rotate(-70 260.5 614)">Request</text>
<text x="262.0" y="614" font-size="14" fill="#fff" transform="rotate(-70 262.0 614)">Request</text>
<text x="263.5" y="614" font-size="14" fill="#fff" transform="rotate(-70 263.5 614)">Request</text>
<text x="265.0" y="614" font-size="14" fill="#fff" transform="rotate(-70 265.0 614)">Request</text>
<text x="266.5" y="614" font-size="14" fill="#fff" transform="rotate(-70 266.5 614)">Request</text>
<text x="268.0" y="614" font-size="14" fill="#fff" transform="rotate(-70 268.0 614)">Request</text>
<text x="269.5" y="614" font-size="14" fill="#fff" transform="rotate(-70 269.5 614)">Request</text>
<text x="271.0" y="614" font-size="14" fill="#fff" transform="rotate(-70 271.0 614)">Request</text>
<text x="272.5" y="614" font-size="14" fill="#fff" transform="rotate(-70 272.5 614)">Request</text>
<text x="274.0" y="614" font-size="14" fill="#fff" transform="rotate(-70 274.0 614)">Request</text>
<text x="275.5" y="614" font-size="14" fill="#fff" transform="rotate(-70 275.5 614)">Request</text>
<text x="277.0" y="614" font-size="14" fill="#fff" transform="rotate(-70 277.0 614)">Request</text>
<text x="278.5" y="614" font-size="14" fill="#fff" transform="rotate(-70 278.5 614)">Request</text>
<text x="280.0" y="614" font-size="14" fill="#fff" transform="rotate(-70 280.0 614)">Request</text>
<text x="281.5" y="614" font-size="14" fill="#fff" transform="rotate(-70 281.5 614)">Request</text>
<text x="283.0" y="614" font-size="14" fill="#fff" transform="rotate(-70 283.0 614)">Request</text>
<text x="284.5" y="614" font-size="14" fill="#fff" transform="rotate(-70 284.5 614)">Request</text>
<text x="286.0" y="614" font-size="14" fill="#fff" transform="rotate(-70 286.0 614)">Request</text>
<text x="287.5" y="614" font-size="14" fill="#fff" transform="rotate(-70 287.5 614)">Request</text>
<text x="289.0" y="614" font-size="14" fill="#fff" transform="rotate(-70 289.0 614)">Request</text>
<text x="290.5" y="614" font-size="14" fill="#fff" transform="rotate(-70 290.5 614)">Request</text>
<text x="292.0" y="614" font-size="14" fill="#fff" transform="rotate(-70 292.0 614)">Request</text>
<text x="293.5" y="614" font-size="14" fill="#fff" transform="rotate(-70 293.5 614)">Request</text>
<text x="295.0" y="614" font-size="14" fill="#fff" transform="rotate(-70 295.0 614)">Request</text>
<text x="296.5" y="614" font-size="14" fill="#fff" transform="rotate(-70 296.5 614)">Request</text>
<text x="298.0" y="614" font-size="14" fill="#fff" transform="rotate(-70 298.0 614)">Request</text>
<text x="299.5" y="614" font-size="14" fill="#fff" transform="rotate(-70 299.5 614)">Request</text>
<text x="301.0" y="614" font-size="14" fill="#fff" transform="rotate(-70 301.0 614)">Request</text>
<text x="302.5" y="614" font-size="14" fill="#fff" transform="rotate(-70 302.5 614)">Request</text>
<text x="304.0" y="614" font-size="14" fill="#fff" transform="rotate(-70 304.0 614)">Request</text>
<text x="305.5" y="614" font-size="14" fill="#fff" transform="rotate(-70 305.5 614)">Request</text>
<text x="307.0" y="614" font-size="14" fill="#fff" transform="rotate(-70 307.0 614)">Request</text>
<text x="308.5" y="614" font-size="14" fill="#fff" transform="rotate(-70 308.5 614)">Request</text>
<text x="310.0" y="614" font-size="14" fill="#fff" transform="rotate(-70 310.0 614)">Request</text>
<text x="311.5" y="614" font-size="14" fill="#fff" transform="rotate(-70 311.5 614)">Request</text>
<text x="313.0" y="614" font-size="14" fill="#fff" transform="rotate(-70 313.0 614)">Request</text>
<text x="314.5" y="614" font-size="14" fill="#fff" transform="rotate(-70 314.5 614)">Request</text>
<text x="316.0" y="614" font-size="14" fill="#fff" transform="rotate(-70 316.0 614)">Request</text>
<text x="317.5" y="614" font-size="14" fill="#fff" transform="rotate(-70 317.5 614)">Request</text>
<text x="319.0" y="614" font-size="14" fill="#fff" transform="rotate(-70 319.0 614)">Request</text>
<text x="320.5" y="614" font-size="14" fill="#fff" transform="rotate(-70 320.5 614)">Request</text>
<text x="322.0" y="614" font-size="14" fill="#fff" transform="rotate(-70 322.0 614)">Request</text>
<text x="323.5" y="614" font-size="14" fill="#fff" transform="rotate(-70 323.5 614)">Request</text>
<text x="325.0" y="614" font-size="14" fill="#fff" transform="rotate(-70 325.0 614)">Request</text>
<text x="326.5" y="614" font-size="14" fill="#fff" transform="rotate(-70 326.5 614)">Request</text>
<text x="328.0" y="614" font-size="14" fill="#fff" transform="rotate(-70 328.0 614)">Request</text>
<text x="329.5" y="614" font-size="14" fill="#fff" transform="rotate(-70 329.5 614)">Request</text>
<text x="331.0" y="614" font-size="14" fill="#fff" transform="rotate(-70 331.0 614)">Request</text>
<text x="332.5" y="614" font-size="14" fill="#fff" transform="rotate(-70 332.5 614)">Request</text>
<text x="334.0" y="614" font-size="14" fill="#fff" transform="rotate(-70 334.0 614)">Request</text>
<text x="335.5" y="614" font-size="14" fill="#fff" transform="rotate(-70 335.5 614)">Request</text>
<text x="337.0" y="614" font-size="14" fill="#fff" transform="rotate(-70 337.0 614)">Request</text>
<text x="338.5" y="614" font-size="14" fill="#fff" transform="rotate(-70 338.5 614)">Request</text>
<text x="340.0" y="614" font-size="14" fill="#fff" transform="rotate(-70 340.0 614)">Request</text>
<text x="341.5" y="614" font-size="14" fill="#fff" transform="rotate(-70 341.5 614)">Request</text>
<text x="343.0" y="614" font-size="14" fill="#fff" transform="rotate(-70 343.0 614)">Request</text>
<text x="344.5" y="614" font-size="14" fill="#fff" transform="rotate(-70 344.5 614)">Request</text>
<text x="346.0" y="614" font-size="14" fill="#fff" transform="rotate(-70 346.0 614)">Request</text>
<text x="419" y="614" font-size="14" fill="#fff" transform="rotate(-70 419 614)">Request</text>
<text x="421" y="614" font-size="14" fill="#fff" transform="rotate(-70 421 614)">Request</text>
<text x="423" y="614" font-size="14" fill="#fff" transform="rotate(-70 423 614)">Request</text>
<text x="425" y="614" font-size="14" fill="#fff" transform="rotate(-70 425 614)">Request</text>
<text x="427" y="614" font-size="14" fill="#fff" transform="rotate(-70 427 614)">Request</text>
<text x="429" y="614" font-size="14" fill="#fff" transform="rotate(-70 429 614)">Request</text>
<text x="431" y="614" font-size="14" fill="#fff" transform="rotate(-70 431 614)">Request</text>
<text x="433" y="614" font-size="14" fill="#fff" transform="rotate(-70 433 614)">Request</text>
<text x="435" y="614" font-size="14" fill="#fff" transform="rotate(-70 435 614)">Request</text>
<text x="437" y="614" font-size="14" fill="#fff" transform="rotate(-70 437 614)">Request</text>
<text x="439" y="614" font-size="14" fill="#fff" transform="rotate(-70 439 614)">Request</text>
<text x="441" y="614" font-size="14" fill="#fff" transform="rotate(-70 441 614)">Request</text>
<text x="443" y="614" font-size="14" fill="#fff" transform="rotate(-70 443 614)">Request</text>
<text x="445" y="614" font-size="14" fill="#fff" transform="rotate(-70 445 614)">Request</text>
<text x="447" y="614" font-size="14" fill="#fff" transform="rotate(-70 447 614)">Request</text>
<text x="449" y="614" font-size="14" fill="#fff" transform="rotate(-70 449 614)">Request</text>
<text x="451" y="614" font-size="14" fill="#fff" transform="rotate(-70 451 614)">Request</text>
<text x="572" y="614" font-size="14" fill="#fff" transform="rotate(-70 572 614)">Request</text>
<text x="574" y="614" font-size="14" fill="#fff" transform="rotate(-70 574 614)">Request</text>
<text x="576" y="614" font-size="14" fill="#fff" transform="rotate(-70 576 614)">Request</text>
<text x="578" y="614" font-size="14" fill="#fff" transform="rotate(-70 578 614)">Request</text>
<text x="626" y="614" font-size="14" fill="#fff" transform="rotate(-70 626 614)">Request</text>
<text x="628" y="614" font-size="14" fill="#fff" transform="rotate(-70 628 614)">Request</text>
<text x="630" y="614" font-size="14" fill="#fff" transform="rotate(-70 630 614)">Request</text>
<text x="632" y="614" font-size="14" fill="#fff" transform="rotate(-70 632 614)">Request</text>
<text x="634" y="614" font-size="14" fill="#fff" transform="rotate(-70 634 614)">Request</text>
<text x="636" y="614" font-size="14" fill="#fff" transform="rotate(-70 636 614)">Request</text>
<text x="638" y="614" font-size="14" fill="#fff" transform="rotate(-70 638 614)">Request</text>
<text x="640" y="614" font-size="14" fill="#fff" transform="rotate(-70 640 614)">Request</text>
<text x="642" y="614" font-size="14" fill="#fff" transform="rotate(-70 642 614)">Request</text>
<text x="644" y="614" font-size="14" fill="#fff" transform="rotate(-70 644 614)">Request</text>
<text x="646" y="614" font-size="14" fill="#fff" transform="rotate(-70 646 614)">Request</text>
<text x="648" y="614" font-size="14" fill="#fff" transform="rotate(-70 648 614)">Request</text>
<text x="650" y="614" font-size="14" fill="#fff" transform="rotate(-70 650 614)">Request</text>
<text x="652" y="614" font-size="14" fill="#fff" transform="rotate(-70 652 614)">Request</text>
<text x="654" y="614" font-size="14" fill="#fff" transform="rotate(-70 654 614)">Request</text>
<text x="656" y="614" font-size="14" fill="#fff" transform="rotate(-70 656 614)">Request</text>
<text x="658" y="614" font-size="14" fill="#fff" transform="rotate(-70 658 614)">Request</text>
<text x="660" y="614" font-size="14" fill="#fff" transform="rotate(-70 660 614)">Request</text>
<text x="662" y="614" font-size="14" fill="#fff" transform="rotate(-70 662 614)">Request</text>
<text x="664" y="614" font-size="14" fill="#fff" transform="rotate(-70 664 614)">Request</text>
<text x="393" y="614" font-size="14" fill="#fff" transform="rotate(-70 393 614)">Request</text>
<text x="475" y="614" font-size="14" fill="#fff" transform="rotate(-70 475 614)">Request</text>
<text x="673" y="614" font-size="14" fill="#fff" transform="rotate(-70 673 614)">Request</text>
<g clip-path="url(#cl5)">
<rect x="64" y="541" width="34" height="13" fill="#7a1a7c" stroke="#ff30ff" stroke-width="1" />
<rect x="64" y="555" width="50" height="13" fill="#7a1a7c" stroke="#ff30ff" stroke-width="1" />
<text x="65" y="552" font-size="12" fill="#fff" text-anchor="start" font-weight="normal" >DP-AUX</text>
<text x="77" y="566" font-size="11" fill="#fff" text-anchor="start" font-weight="normal" >1000000</text>
</g>
<path d="M644.5 528V715" stroke="#fff" stroke-width="2.6" stroke-dasharray="9 6 3 6" fill="none"/>
<text x="644" y="731" font-size="11" fill="#fff" text-anchor="middle" font-weight="normal" >C4</text>
<path d="M644 648.5V671.5M635.5 660H652.5" stroke="#000" stroke-width="4.6"/>
<path d="M644 649.5V670.5M636.5 660H651.5" stroke="#fff" stroke-width="2.4"/>
<path d="M62.5 525 V531 M59 528 L62.5 525 L66 528" stroke="#00ee00" stroke-width="1.1" fill="none"/>
<path d="M155 745 L158 738 L161 745Z" fill="#00ee00"/>
<path d="M958 602 L952 606 L958 610Z" fill="none" stroke="#00ee00" stroke-width="1"/>
<rect x="70.5" y="528.5" width="879" height="207" fill="none" stroke="#9a9a9a" stroke-width="1.2"/>
<text x="66" y="541" font-size="12" fill="#00ee00" text-anchor="end" font-weight="normal" >-697 mV</text>
<text x="66" y="584.2" font-size="12" fill="#00ee00" text-anchor="end" font-weight="normal" >-897 mV</text>
<text x="66" y="636.0" font-size="12" fill="#00ee00" text-anchor="end" font-weight="normal" >-1.097 V</text>
<text x="66" y="687.8" font-size="12" fill="#00ee00" text-anchor="end" font-weight="normal" >-1.297 V</text>
<text x="66" y="733.5" font-size="12" fill="#00ee00" text-anchor="end" font-weight="normal" >-1.497 V</text>
<text x="70" y="750" font-size="12" fill="#00ee00" text-anchor="start" font-weight="normal" >-100 ms</text>
<text x="246" y="750" font-size="12" fill="#00ee00" text-anchor="middle" font-weight="normal" >100 ms</text>
<text x="422" y="750" font-size="12" fill="#00ee00" text-anchor="middle" font-weight="normal" >300 ms</text>
<text x="598" y="750" font-size="12" fill="#00ee00" text-anchor="middle" font-weight="normal" >500 ms</text>
<text x="774" y="750" font-size="12" fill="#00ee00" text-anchor="middle" font-weight="normal" >700 ms</text>
<text x="950" y="750" font-size="12" fill="#00ee00" text-anchor="end" font-weight="normal" >900 ms</text>
<rect x="1030" y="555" width="107" height="120" fill="#0e1d1b" />
<rect x="1137.5" y="540.5" width="703.5" height="142" fill="#474747" stroke="#6a6a6a" stroke-width="1" />
<rect x="1137.5" y="555.5" width="112" height="120" fill="#3d5e5e" stroke="#2cd0d0" stroke-width="1" />
<rect x="1250" y="555.5" width="17" height="120" fill="#4e5858" />
<line x1="1258.5" y1="556" x2="1258.5" y2="675" stroke="#8a4aa0" stroke-width="1.5" />
<rect x="1267.5" y="555.5" width="3" height="120" fill="none" stroke="#d0d0e0" stroke-width="1" />
<rect x="1271" y="555.5" width="14" height="120" fill="#3c3c5c" />
<rect x="1285.5" y="555.5" width="83" height="120" fill="#40407c" stroke="#a8a8e8" stroke-width="1.2" />
<rect x="1369.0" y="555.5" width="35.200000000000045" height="120" fill="#474747" stroke="#2cd0d0" stroke-width="1" />
<rect x="1404.2" y="555.5" width="34.299999999999955" height="120" fill="#474747" stroke="#2cd0d0" stroke-width="1" />
<rect x="1438.5" y="555.5" width="35" height="120" fill="#474747" stroke="#2cd0d0" stroke-width="1" />
<rect x="1473.5" y="555.5" width="34" height="120" fill="#474747" stroke="#2cd0d0" stroke-width="1" />
<rect x="1507.5" y="555.5" width="34.40000000000009" height="120" fill="#474747" stroke="#2cd0d0" stroke-width="1" />
<rect x="1541.9" y="555.5" width="34.399999999999864" height="120" fill="#474747" stroke="#2cd0d0" stroke-width="1" />
<rect x="1576.3" y="555.5" width="8.200000000000045" height="120" fill="#474747" stroke="#2cd0d0" stroke-width="1" />
<text x="1387.1" y="566" font-size="12" fill="#f0f0f0" text-anchor="middle" font-weight="normal" >0x04</text>
<text x="1421.85" y="566" font-size="12" fill="#f0f0f0" text-anchor="middle" font-weight="normal" >0x21</text>
<text x="1456.5" y="566" font-size="12" fill="#f0f0f0" text-anchor="middle" font-weight="normal" >0x00</text>
<text x="1491.0" y="566" font-size="12" fill="#f0f0f0" text-anchor="middle" font-weight="normal" >0x00</text>
<text x="1525.2" y="566" font-size="12" fill="#f0f0f0" text-anchor="middle" font-weight="normal" >0x00</text>
<text x="1559.6" y="566" font-size="12" fill="#f0f0f0" text-anchor="middle" font-weight="normal" >0x00</text>
<rect x="1584.5" y="555.5" width="256" height="120" fill="#3d5e5e" stroke="#2cd0d0" stroke-width="1" />
<path d="M1118.5 530V735 M1206.5 530V735 M1294.5 530V735 M1382.5 530V735 M1558.5 530V735 M1646.5 530V735 M1734.5 530V735 M1822.5 530V735 M1032 554.5H1910 M1032 580.5H1910 M1032 606.5H1910 M1032 657.5H1910 M1032 683.5H1910 M1032 709.5H1910" stroke="#8e8e8e" stroke-width="1" stroke-dasharray="1 1" fill="none"/>
<path d="M1048 567h1v1h-1z M1065 567h1v1h-1z M1083 567h1v1h-1z M1100 567h1v1h-1z M1136 567h1v1h-1z M1153 567h1v1h-1z M1171 567h1v1h-1z M1188 567h1v1h-1z M1224 567h1v1h-1z M1241 567h1v1h-1z M1259 567h1v1h-1z M1276 567h1v1h-1z M1312 567h1v1h-1z M1329 567h1v1h-1z M1347 567h1v1h-1z M1364 567h1v1h-1z M1400 567h1v1h-1z M1417 567h1v1h-1z M1435 567h1v1h-1z M1452 567h1v1h-1z M1488 567h1v1h-1z M1505 567h1v1h-1z M1523 567h1v1h-1z M1540 567h1v1h-1z M1576 567h1v1h-1z M1593 567h1v1h-1z M1611 567h1v1h-1z M1628 567h1v1h-1z M1664 567h1v1h-1z M1681 567h1v1h-1z M1699 567h1v1h-1z M1716 567h1v1h-1z M1752 567h1v1h-1z M1769 567h1v1h-1z M1787 567h1v1h-1z M1804 567h1v1h-1z M1840 567h1v1h-1z M1857 567h1v1h-1z M1875 567h1v1h-1z M1892 567h1v1h-1z M1048 696h1v1h-1z M1065 696h1v1h-1z M1083 696h1v1h-1z M1100 696h1v1h-1z M1136 696h1v1h-1z M1153 696h1v1h-1z M1171 696h1v1h-1z M1188 696h1v1h-1z M1224 696h1v1h-1z M1241 696h1v1h-1z M1259 696h1v1h-1z M1276 696h1v1h-1z M1312 696h1v1h-1z M1329 696h1v1h-1z M1347 696h1v1h-1z M1364 696h1v1h-1z M1400 696h1v1h-1z M1417 696h1v1h-1z M1435 696h1v1h-1z M1452 696h1v1h-1z M1488 696h1v1h-1z M1505 696h1v1h-1z M1523 696h1v1h-1z M1540 696h1v1h-1z M1576 696h1v1h-1z M1593 696h1v1h-1z M1611 696h1v1h-1z M1628 696h1v1h-1z M1664 696h1v1h-1z M1681 696h1v1h-1z M1699 696h1v1h-1z M1716 696h1v1h-1z M1752 696h1v1h-1z M1769 696h1v1h-1z M1787 696h1v1h-1z M1804 696h1v1h-1z M1840 696h1v1h-1z M1857 696h1v1h-1z M1875 696h1v1h-1z M1892 696h1v1h-1z" fill="#8e8e8e"/>
<path d="M1470.5 528V735 M1030 632.5H1910 M1048.5 630.0V635.0 M1065.5 630.0V635.0 M1083.5 630.0V635.0 M1100.5 630.0V635.0 M1136.5 630.0V635.0 M1153.5 630.0V635.0 M1171.5 630.0V635.0 M1188.5 630.0V635.0 M1224.5 630.0V635.0 M1241.5 630.0V635.0 M1259.5 630.0V635.0 M1276.5 630.0V635.0 M1312.5 630.0V635.0 M1329.5 630.0V635.0 M1347.5 630.0V635.0 M1364.5 630.0V635.0 M1400.5 630.0V635.0 M1417.5 630.0V635.0 M1435.5 630.0V635.0 M1452.5 630.0V635.0 M1488.5 630.0V635.0 M1505.5 630.0V635.0 M1523.5 630.0V635.0 M1540.5 630.0V635.0 M1576.5 630.0V635.0 M1593.5 630.0V635.0 M1611.5 630.0V635.0 M1628.5 630.0V635.0 M1664.5 630.0V635.0 M1681.5 630.0V635.0 M1699.5 630.0V635.0 M1716.5 630.0V635.0 M1752.5 630.0V635.0 M1769.5 630.0V635.0 M1787.5 630.0V635.0 M1804.5 630.0V635.0 M1840.5 630.0V635.0 M1857.5 630.0V635.0 M1875.5 630.0V635.0 M1892.5 630.0V635.0" stroke="#7a7a7a" stroke-width="1" fill="none"/>
<text x="1489" y="551" font-size="12" fill="#f0f0f0" text-anchor="middle" font-weight="normal" >Unknown</text>
<text x="1084" y="566" font-size="12" fill="#f0f0f0" text-anchor="middle" font-weight="normal" >Idle</text>
<text x="1193" y="566" font-size="11.5" fill="#f0f0f0" text-anchor="middle" font-weight="normal" >Preamble</text>
<text x="1712" y="566" font-size="12" fill="#f0f0f0" text-anchor="middle" font-weight="normal" >Stop</text>
<path d="M1030 593.5 H1137" stroke="#2ae6e6" stroke-width="1.3"/>
<path d="M1138 659.5 V594 H1140.0 V659.5 H1141.5 V594 H1143.5 V627 H1144.5V594 V659.5 H1148.0 V594 H1151.0 V659.5 H1152.5 V594 H1154.5 V659.5 H1156.0 V594 H1158.0 V659.5 H1159.5 V594 H1162.5 V659.5 H1166.0 V594 H1168.0 V659.5 H1169.5 V594 H1171.5 V627 H1172.5V594 V627 H1175.5V594 V659.5 H1179.0 V594 H1182.0 V659.5 H1183.5 V594 H1186.5 V627 H1187.5V594 V659.5 H1191.0 V594 H1193.0 V659.5 H1194.5 V594 H1196.5 V659.5 H1198.0 V594 H1200.0 V659.5 H1201.5 V594 H1204.5 V659.5 H1206.0 V594 H1208.0 V659.5 H1211.5 V594 H1213.5 V627 H1214.5V594 V659.5 H1220.0 V594 H1223.0 V659.5 H1224.5 V594 H1227.5 V659.5 H1231.0 V594 H1233.0 V659.5 H1236.5 V594 H1238.5 V659.5 H1242.0 V594 H1244.0 V659.5 H1245.5 V594 H1247.5 V659.5 H1249.0" stroke="#2ae6e6" stroke-width="1" fill="none"/>
<path d="M1249 594 H1257 V659.5 H1266" stroke="#2ae6e6" stroke-width="1" fill="none"/>
<path d="M1267 660 V594 H1269.0 V627 H1270.0V594 V660 H1273.5 V594 H1276.5 V660 H1278.0 V594 H1280.0 V660 H1283.5 V594 H1285.5 V660 H1287.0 V594 H1289.0 V660 H1292.5 V594 H1295.5 V660 H1299.0 V594 H1301.0 V660 H1302.5 V594 H1304.5 V660 H1306.0 V594 H1308.0 V660 H1311.5 V594 H1313.5 V660 H1315.0 V594 H1317.0 V627 H1318.0V594 V660 H1321.5 V594 H1324.5 V660 H1328.0 V594 H1331.0 V660 H1332.5 V594 H1334.5 V660 H1336.0 V594 H1339.0 V660 H1340.5 V594 H1342.5 V660 H1344.0 V594 H1347.0 V660 H1350.5 V594 H1353.5 V660 H1355.0 V594 H1357.0 V660 H1358.5 V594 H1361.5 V660 H1363.0 V594 H1365.0 V660 H1368.5 V594 H1371.5 V660 H1375.0 V594 H1377.0 V660 H1380.5 V594 H1382.5 V660 H1386.0 V594 H1388.0 V660 H1389.5 V594 H1391.5 V660 H1395.0 V594 H1398.0 V660 H1401.5 V594 H1404.5 V660 H1406.0 V594 H1408.0 V660 H1409.5 V594 H1412.5 V660 H1416.0 V594 H1419.0 V660 H1420.5 V594 H1423.5 V627 H1424.5V594 V660 H1430.0 V594 H1432.0 V627 H1433.0V594 V660 H1436.5 V594 H1439.5 V660 H1441.0 V594 H1444.0 V627 H1445.0V594 V660 H1448.5 V594 H1450.5 V660 H1454.0 V594 H1456.0 V627 H1457.0V594 V660 H1460.5 V594 H1463.5 V627 H1464.5V594 V627 H1467.5V594 V627 H1470.5V594 V627 H1473.5V594 V660 H1477.0 V594 H1479.0 V627 H1480.0V594 V660 H1485.5 V594 H1487.5 V660 H1489.0 V594 H1491.0 V660 H1492.5 V594 H1494.5 V660 H1496.0 V594 H1498.0 V660 H1501.5 V594 H1504.5 V660 H1506.0 V594 H1508.0 V660 H1509.5 V594 H1511.5 V660 H1515.0 V594 H1518.0 V627 H1519.0V594 V660 H1522.5 V594 H1525.5 V660 H1527.0 V594 H1529.0 V627 H1530.0V594 V660 H1533.5 V594 H1535.5 V660 H1537.0 V594 H1540.0 V660 H1541.5 V594 H1543.5 V660 H1545.0 V594 H1547.0 V660 H1550.5 V594 H1552.5 V660 H1556.0 V594 H1559.0 V660 H1562.5 V594 H1564.5 V660 H1566.0 V594 H1568.0 V660 H1569.5 V594 H1572.5 V660 H1576.0" stroke="#2ae6e6" stroke-width="1" fill="none"/>
<path d="M1576 594 H1584 V660 H1841" stroke="#2ae6e6" stroke-width="1.3" fill="none"/>
<path d="M1842 663 V596 H1844.0 V663 H1845.5 V596 H1847.5 V663 H1849.0 V596 H1852.0 V663 H1855.5 V596 H1857.5 V663 H1859.0 V596 H1861.0 V663 H1862.5 V596 H1865.5 V663 H1869.0 V596 H1871.0 V663 H1872.5 V596 H1874.5 V663 H1878.0 V596 H1880.0 V663 H1883.5 V596 H1885.5 V663 H1889.0 V596 H1891.0 V663 H1892.5 V596 H1894.5 V663 H1898.0 V596 H1900.0 V663 H1901.5 V596 H1903.5 V663 H1907.0 V596 H1909.0 V663 H1910.0" stroke="#2ae6e6" stroke-width="1" fill="none"/>
<path d="M1030 599.5 H1910" stroke="#b4a8ff" stroke-width="1.2" stroke-dasharray="4 3"/>
<rect x="1432" y="638" width="77" height="13" fill="#28e4e4" />
<text x="1470" y="649" font-size="11" fill="#1a5050" text-anchor="middle" font-weight="normal" >551.0644 ms</text>
<g clip-path="url(#cl6)">
<rect x="1024" y="585" width="44" height="12" fill="#7a1a7c" stroke="#ff30ff" stroke-width="1" />
<rect x="1024" y="600" width="53" height="13" fill="#7a1a7c" stroke="#ff30ff" stroke-width="1" />
<text x="1025" y="596" font-size="12" fill="#fff" text-anchor="start" font-weight="normal" >DP-AUX</text>
<text x="1037" y="611" font-size="11" fill="#fff" text-anchor="start" font-weight="normal" >1000000</text>
</g>
<path d="M1842.5 528V715" stroke="#fff" stroke-width="2.6" stroke-dasharray="9 6 3 6" fill="none"/>
<text x="1842" y="731" font-size="11" fill="#fff" text-anchor="middle" font-weight="normal" >Z3</text>
<path d="M1842 631.5V654.5M1833.5 643H1850.5" stroke="#000" stroke-width="4.6"/>
<path d="M1842 632.5V653.5M1834.5 643H1849.5" stroke="#fff" stroke-width="2.4"/>
<path d="M1018 665.5 H1030" stroke="#00e5ee" stroke-width="1.5"/>
<rect x="1030.5" y="528.5" width="879" height="207" fill="none" stroke="#9a9a9a" stroke-width="1.2"/>
<text x="1026" y="541" font-size="12" fill="#00e5ee" text-anchor="end" font-weight="normal" >6.3 V</text>
<text x="1026" y="584.2" font-size="12" fill="#00e5ee" text-anchor="end" font-weight="normal" >3.9 V</text>
<text x="1026" y="636.0" font-size="12" fill="#00e5ee" text-anchor="end" font-weight="normal" >1.5 V</text>
<text x="1026" y="687.8" font-size="12" fill="#00e5ee" text-anchor="end" font-weight="normal" >-900 mV</text>
<text x="1026" y="733.5" font-size="12" fill="#00e5ee" text-anchor="end" font-weight="normal" >-3.3 V</text>
<text x="1030" y="750" font-size="12" fill="#00e5ee" text-anchor="start" font-weight="normal" >Δ102.5 µs</text>
<text x="1206" y="750" font-size="12" fill="#00e5ee" text-anchor="middle" font-weight="normal" >Δ61.5 µs</text>
<text x="1382" y="750" font-size="12" fill="#00e5ee" text-anchor="middle" font-weight="normal" >Δ20.5 µs</text>
<text x="1558" y="750" font-size="12" fill="#00e5ee" text-anchor="middle" font-weight="normal" >Δ20.5 µs</text>
<text x="1734" y="750" font-size="12" fill="#00e5ee" text-anchor="middle" font-weight="normal" >Δ61.5 µs</text>
<text x="1910" y="750" font-size="12" fill="#00e5ee" text-anchor="end" font-weight="normal" >Δ102.5 µs</text>
<path d="M1024 740L1027.5 736.5M1024 740L1027.5 743.5M1024 740H1030L1031 742" stroke="#00e5ee" stroke-width="1.2" fill="none"/>
<path d="M61 143H70" stroke="#000" stroke-width="3"/><path d="M61 143H70" stroke="#ffff00" stroke-width="1.6"/>
<rect x="54.5" y="129.5" width="15" height="11" rx="2" fill="#ffff00" stroke="#000" stroke-width="1"/>
<text x="62.5" y="139.5" font-size="11" fill="#000" text-anchor="middle" font-weight="normal" >C1</text>
<path d="M1022 144H1030" stroke="#000" stroke-width="3"/><path d="M1022 144H1030" stroke="#ffff00" stroke-width="1.6"/>
<rect x="1015.5" y="130.5" width="14" height="11" rx="2" fill="#ffff00" stroke="#000" stroke-width="1"/>
<text x="1023.0" y="140.5" font-size="11" fill="#000" text-anchor="middle" font-weight="normal" >Z1</text>
<path d="M61 388H70" stroke="#000" stroke-width="3"/><path d="M61 388H70" stroke="#ff1493" stroke-width="1.6"/>
<rect x="54.5" y="374.5" width="15" height="11" rx="2" fill="#ff1493" stroke="#000" stroke-width="1"/>
<text x="62.5" y="384.5" font-size="11" fill="#000" text-anchor="middle" font-weight="normal" >C2</text>
<rect x="1015.5" y="453.5" width="14" height="11" rx="2" fill="#ff1493" stroke="#000" stroke-width="1"/>
<text x="1023.0" y="463.5" font-size="11" fill="#000" text-anchor="middle" font-weight="normal" >Z2</text>
<rect x="54.5" y="530.5" width="15" height="11" rx="2" fill="#00ee00" stroke="#000" stroke-width="1"/>
<text x="62.5" y="540.5" font-size="11" fill="#000" text-anchor="middle" font-weight="normal" >C4</text>
<rect x="1015.5" y="652.5" width="14" height="11" rx="2" fill="#00e5ee" stroke="#000" stroke-width="1"/>
<text x="1023.0" y="662.5" font-size="11" fill="#000" text-anchor="middle" font-weight="normal" >Z3</text>
<rect x="3.5" y="767.5" width="1882" height="212" fill="#000" stroke="#7a7a7a" stroke-width="1" />
<rect x="4" y="784" width="1881" height="16" fill="#a8004f" />
<rect x="163" y="784" width="80" height="16" fill="#00ff00" />
<rect x="4" y="800" width="1881" height="16" fill="#a8004f" />
<rect x="163" y="800" width="80" height="16" fill="#00ff00" />
<rect x="4" y="816" width="1881" height="16" fill="#a8004f" />
<rect x="163" y="816" width="80" height="16" fill="#00ff00" />
<rect x="4" y="832" width="1881" height="16" fill="#a8004f" />
<rect x="163" y="832" width="80" height="16" fill="#00ff00" />
<rect x="4" y="848" width="1881" height="16" fill="#000" />
<rect x="163" y="848" width="80" height="16" fill="#00ffff" />
<rect x="163" y="864" width="1722" height="16" fill="#2a2a2a" />
<rect x="163" y="880" width="1722" height="16" fill="#2a2a2a" />
<rect x="163" y="896" width="1722" height="16" fill="#2a2a2a" />
<rect x="4" y="928" width="1881" height="16" fill="#a8004f" />
<rect x="163" y="928" width="80" height="16" fill="#00ff00" />
<rect x="4" y="944" width="1881" height="16" fill="#a8004f" />
<rect x="163" y="944" width="80" height="16" fill="#00ff00" />
<rect x="4" y="960" width="1881" height="15" fill="#a8004f" />
<rect x="163" y="960" width="80" height="15" fill="#00ff00" />
<path d="M4 783.5H1885 M4 799.5H1885 M4 815.5H1885 M4 831.5H1885 M4 847.5H1885 M4 863.5H1885 M4 879.5H1885 M4 895.5H1885 M4 911.5H1885 M4 927.5H1885 M4 943.5H1885 M4 959.5H1885 M83.5 769V975 M163.5 769V975 M243.5 769V863M243.5 911V975 M403.5 769V863M403.5 911V975 M1677.5 769V863M1677.5 911V975 M1757.5 769V863M1757.5 911V975 M263.5 863V911 M363.5 863V911 M463.5 863V911 M713.5 863V911" stroke="#000" stroke-width="1"/>
<path d="M5 783.5H1885 M5 799.5H1885 M5 815.5H1885 M5 831.5H1885 M5 847.5H1885 M5 863.5H1885 M5 879.5H1885 M5 895.5H1885 M5 911.5H1885 M5 927.5H1885 M5 943.5H1885 M5 959.5H1885 M83.5 770V975 M163.5 770V975 M243.5 770V863M243.5 912V975 M403.5 770V863M403.5 912V975 M1677.5 770V863M1677.5 912V975 M1757.5 770V863M1757.5 912V975 M263.5 864V911 M363.5 864V911 M463.5 864V911 M713.5 864V911" stroke="#8a8a8a" stroke-width="1" stroke-dasharray="1 1"/>
<text x="5" y="781" font-size="13" fill="#fff" text-anchor="start" font-weight="bold" >Index</text>
<text x="85" y="781" font-size="13" fill="#fff" text-anchor="start" font-weight="bold" >Time</text>
<text x="165" y="781" font-size="13" fill="#fff" text-anchor="start" font-weight="bold" >Protocol</text>
<text x="245" y="781" font-size="13" fill="#fff" text-anchor="start" font-weight="bold" >Message</text>
<text x="405" y="781" font-size="13" fill="#fff" text-anchor="start" font-weight="bold" >Data</text>
<text x="1678" y="781" font-size="13" fill="#fff" text-anchor="start" font-weight="bold" >CRC</text>
<text x="1758" y="781" font-size="13" fill="#fff" text-anchor="start" font-weight="bold" >Status</text>
<path d="M154 777 L161 777 L157.5 781Z" fill="#9a9a9a"/>
<path d="M236 777 L243 777 L239.5 781Z" fill="#9a9a9a"/>
<path d="M1877 777 L1884 777 L1880.5 781Z" fill="#9a9a9a"/>
<path d="M11.5 788.5 L16.5 792 L11.5 795.5Z" fill="none" stroke="#fff" stroke-width="1"/>
<text x="21" y="797" font-size="13" fill="#fff" text-anchor="start" font-weight="normal" >270</text>
<text x="85" y="797" font-size="13" fill="#fff" text-anchor="start" font-weight="normal" >546.507 ms</text>
<text x="165" y="797" font-size="13" fill="#000" text-anchor="start" font-weight="normal" >DP-AUX</text>
<text x="245" y="797" font-size="13" fill="#fff" text-anchor="start" font-weight="normal" >Request</text>
<text x="405" y="797" font-size="13" fill="#fff" text-anchor="start" font-weight="normal" >0x01 0x6d 0xf2 0x18</text>
<path d="M11.5 804.5 L16.5 808 L11.5 811.5Z" fill="none" stroke="#fff" stroke-width="1"/>
<text x="21" y="813" font-size="13" fill="#fff" text-anchor="start" font-weight="normal" >271</text>
<text x="85" y="813" font-size="13" fill="#fff" text-anchor="start" font-weight="normal" >547.498 ms</text>
<text x="165" y="813" font-size="13" fill="#000" text-anchor="start" font-weight="normal" >DP-AUX</text>
<text x="245" y="813" font-size="13" fill="#fff" text-anchor="start" font-weight="normal" >Request</text>
<text x="405" y="813" font-size="13" fill="#fff" text-anchor="start" font-weight="normal" >0x01 0x6c 0xf2 0x03</text>
<path d="M11.5 820.5 L16.5 824 L11.5 827.5Z" fill="none" stroke="#fff" stroke-width="1"/>
<text x="21" y="829" font-size="13" fill="#fff" text-anchor="start" font-weight="normal" >272</text>
<text x="85" y="829" font-size="13" fill="#fff" text-anchor="start" font-weight="normal" >548.488 ms</text>
<text x="165" y="829" font-size="13" fill="#000" text-anchor="start" font-weight="normal" >DP-AUX</text>
<text x="245" y="829" font-size="13" fill="#fff" text-anchor="start" font-weight="normal" >Request</text>
<text x="405" y="829" font-size="13" fill="#fff" text-anchor="start" font-weight="normal" >0x01 0x03 0xf3 0x06</text>
<path d="M11.5 836.5 L16.5 840 L11.5 843.5Z" fill="none" stroke="#fff" stroke-width="1"/>
<text x="21" y="845" font-size="13" fill="#fff" text-anchor="start" font-weight="normal" >273</text>
<text x="85" y="845" font-size="13" fill="#fff" text-anchor="start" font-weight="normal" >550.987 ms</text>
<text x="165" y="845" font-size="13" fill="#000" text-anchor="start" font-weight="normal" >DP-AUX</text>
<text x="245" y="845" font-size="13" fill="#fff" text-anchor="start" font-weight="normal" >Request</text>
<text x="405" y="845" font-size="13" fill="#fff" text-anchor="start" font-weight="normal" >0x21 0x00 0x00 0x00 0x00</text>
<path d="M9 861 L17 861 L17 853Z" fill="#fff"/>
<text x="21" y="861" font-size="13" fill="#fff" text-anchor="start" font-weight="normal" >274</text>
<text x="85" y="861" font-size="13" fill="#fff" text-anchor="start" font-weight="normal" >550.987 ms</text>
<text x="165" y="861" font-size="13" fill="#000" text-anchor="start" font-weight="normal" >DP-AUX</text>
<text x="245" y="861" font-size="13" fill="#fff" text-anchor="start" font-weight="normal" >Unknown</text>
<text x="405" y="861" font-size="13" fill="#fff" text-anchor="start" font-weight="normal" >0x21 0x00 0x00 0x00 0x00</text>
<path d="M11.5 932.5 L16.5 936 L11.5 939.5Z" fill="none" stroke="#fff" stroke-width="1"/>
<text x="21" y="941" font-size="13" fill="#fff" text-anchor="start" font-weight="normal" >275</text>
<text x="85" y="941" font-size="13" fill="#fff" text-anchor="start" font-weight="normal" >551.990 ms</text>
<text x="165" y="941" font-size="13" fill="#000" text-anchor="start" font-weight="normal" >DP-AUX</text>
<text x="245" y="941" font-size="13" fill="#fff" text-anchor="start" font-weight="normal" >Request</text>
<text x="405" y="941" font-size="13" fill="#fff" text-anchor="start" font-weight="normal" >0x01 0x55 0x63 0x6e</text>
<path d="M11.5 948.5 L16.5 952 L11.5 955.5Z" fill="none" stroke="#fff" stroke-width="1"/>
<text x="21" y="957" font-size="13" fill="#fff" text-anchor="start" font-weight="normal" >276</text>
<text x="85" y="957" font-size="13" fill="#fff" text-anchor="start" font-weight="normal" >553.037 ms</text>
<text x="165" y="957" font-size="13" fill="#000" text-anchor="start" font-weight="normal" >DP-AUX</text>
<text x="245" y="957" font-size="13" fill="#fff" text-anchor="start" font-weight="normal" >Request</text>
<path d="M11.5 964.5 L16.5 968 L11.5 971.5Z" fill="none" stroke="#fff" stroke-width="1"/>
<text x="21" y="973" font-size="13" fill="#fff" text-anchor="start" font-weight="normal" >277</text>
<text x="85" y="973" font-size="13" fill="#fff" text-anchor="start" font-weight="normal" >553.166 ms</text>
<text x="165" y="973" font-size="13" fill="#000" text-anchor="start" font-weight="normal" >DP-AUX</text>
<text x="245" y="973" font-size="13" fill="#fff" text-anchor="start" font-weight="normal" >Reply</text>
<text x="405" y="973" font-size="13" fill="#fff" text-anchor="start" font-weight="normal" >0x00 0x00 0x80 0x02 0x11 0x11</text>
<text x="165" y="877" font-size="13" fill="#fff" text-anchor="start" font-weight="bold" >PacketType</text>
<text x="265" y="877" font-size="13" fill="#fff" text-anchor="start" font-weight="bold" >Transaction</text>
<text x="365" y="877" font-size="13" fill="#fff" text-anchor="start" font-weight="bold" >Command</text>
<text x="465" y="877" font-size="13" fill="#fff" text-anchor="start" font-weight="bold" >DPConfigReq / I2C Address</text>
<text x="715" y="877" font-size="13" fill="#fff" text-anchor="start" font-weight="bold" >Data</text>
<text x="165" y="893" font-size="13" fill="#fff" xml:space="preserve">Unknown</text>
<text x="265" y="893" font-size="13" fill="#fff" xml:space="preserve">Native</text>
<text x="365" y="893" font-size="13" fill="#fff" xml:space="preserve">Write</text>
<text x="465" y="893" font-size="13" fill="#fff" xml:space="preserve">TRAINING  PATTERN  SET</text>
<text x="715" y="893" font-size="13" fill="#fff" xml:space="preserve">Request to Write 5 Byte(s) at Addr TRAINING  PATTERN  SET</text>
<rect x="0" y="975" width="1886" height="4" fill="#000" />
<rect x="1886" y="769" width="30" height="28" fill="#555555" stroke="#6a6a6a" stroke-width="1" />
<path d="M1888 790 L1901 778 L1914 790Z" fill="#fff"/>
<rect x="1886" y="797" width="30" height="123" fill="#2a2a2a" />
<rect x="1886.5" y="920.5" width="29" height="13" fill="#555555" stroke="#6a6a6a" stroke-width="1" />
<rect x="1886" y="934" width="30" height="12" fill="#2a2a2a" />
<rect x="1886" y="946" width="30" height="30" fill="#555555" stroke="#6a6a6a" stroke-width="1" />
<path d="M1888 955 L1914 955 L1901 968Z" fill="#fff"/>
<rect x="4" y="979" width="97" height="16" fill="#ffff00" />
<rect x="4" y="995" width="97" height="66" fill="#404040" />
<text x="8" y="992" font-size="13" fill="#000" text-anchor="start" font-weight="normal" >C1</text>
<rect x="77" y="980.5" width="23" height="13" rx="2.5" fill="#3a3a3a" stroke="#222" stroke-width="0.8"/>
<text x="88.5" y="991.5" font-size="11" fill="#f0f0f0" text-anchor="middle" font-family="Liberation Mono, monospace" font-weight="bold">D50</text>
<circle cx="20.5" cy="1009.5" r="12.5" fill="#4c4c4c"/>
<text x="20.5" y="1007" font-size="10" fill="#a8a8a8" text-anchor="middle" font-weight="normal" >16</text>
<text x="20.5" y="1018" font-size="10" fill="#a8a8a8" text-anchor="middle" font-weight="normal" >GHz</text>
<text x="99" y="1009" font-size="13" fill="#fff" text-anchor="end" font-weight="normal" >200 mV/</text>
<text x="99" y="1024" font-size="13" fill="#fff" text-anchor="end" font-weight="normal" >0.0 mV</text>
<text x="99" y="1057" font-size="13" fill="#fff" text-anchor="end" font-weight="normal" >-38.0 mV</text>
<path d="M11 1045V1058M7 1051H15" stroke="#fff" stroke-width="1.6"/><circle cx="11" cy="1051" r="2.3" fill="#404040" stroke="#fff" stroke-width="1.4"/>
<rect x="104" y="979" width="97" height="16" fill="#ff0080" />
<rect x="104" y="995" width="97" height="66" fill="#404040" />
<text x="108" y="992" font-size="13" fill="#000" text-anchor="start" font-weight="normal" >C2</text>
<rect x="177" y="980.5" width="23" height="13" rx="2.5" fill="#3a3a3a" stroke="#222" stroke-width="0.8"/>
<text x="188.5" y="991.5" font-size="11" fill="#f0f0f0" text-anchor="middle" font-family="Liberation Mono, monospace" font-weight="bold">D50</text>
<circle cx="120.5" cy="1009.5" r="12.5" fill="#4c4c4c"/>
<text x="120.5" y="1007" font-size="10" fill="#a8a8a8" text-anchor="middle" font-weight="normal" >16</text>
<text x="120.5" y="1018" font-size="10" fill="#a8a8a8" text-anchor="middle" font-weight="normal" >GHz</text>
<text x="199" y="1009" font-size="13" fill="#fff" text-anchor="end" font-weight="normal" >200 mV/</text>
<text x="199" y="1024" font-size="13" fill="#fff" text-anchor="end" font-weight="normal" >0.0 mV</text>
<text x="199" y="1057" font-size="13" fill="#fff" text-anchor="end" font-weight="normal" >42.5 mV</text>
<path d="M111 1045V1058M107 1051H115" stroke="#fff" stroke-width="1.6"/><circle cx="111" cy="1051" r="2.3" fill="#404040" stroke="#fff" stroke-width="1.4"/>
<rect x="204" y="979" width="97" height="16" fill="#00ff00" />
<rect x="204" y="995" width="97" height="66" fill="#404040" />
<text x="208" y="992" font-size="13" fill="#000" text-anchor="start" font-weight="normal" >C4</text>
<rect x="277" y="980.5" width="23" height="13" rx="2.5" fill="#3a3a3a" stroke="#222" stroke-width="0.8"/>
<text x="288.5" y="991.5" font-size="11" fill="#f0f0f0" text-anchor="middle" font-family="Liberation Mono, monospace" font-weight="bold">DC1</text>
<circle cx="220.5" cy="1009.5" r="12.5" fill="#4c4c4c"/>
<text x="220.5" y="1007" font-size="10" fill="#a8a8a8" text-anchor="middle" font-weight="normal" >500</text>
<text x="220.5" y="1018" font-size="10" fill="#a8a8a8" text-anchor="middle" font-weight="normal" >MHz</text>
<text x="299" y="1009" font-size="13" fill="#fff" text-anchor="end" font-weight="normal" >100 mV/</text>
<text x="299" y="1024" font-size="13" fill="#fff" text-anchor="end" font-weight="normal" >-1.5000 V</text>
<text x="299" y="1057" font-size="13" fill="#fff" text-anchor="end" font-weight="normal" >956.5 mV</text>
<path d="M211 1045V1058M207 1051H215" stroke="#fff" stroke-width="1.6"/><circle cx="211" cy="1051" r="2.3" fill="#404040" stroke="#fff" stroke-width="1.4"/>
<rect x="304" y="979" width="97" height="16" fill="#ffff00" />
<rect x="304" y="995" width="97" height="66" fill="#404040" />
<text x="308" y="992" font-size="13" fill="#000" text-anchor="start" font-weight="normal" >Z1</text>
<text x="399" y="992" font-size="13" fill="#000" text-anchor="end" font-weight="normal" >zoom(C1)</text>
<text x="399" y="1009" font-size="13" fill="#fff" text-anchor="end" font-weight="normal" >112 mV/</text>
<text x="399" y="1024" font-size="13" fill="#fff" text-anchor="end" font-weight="normal" >5.00 ms/</text>
<text x="399" y="1057" font-size="13" fill="#fff" text-anchor="end" font-weight="normal" >-38.0 mV</text>
<path d="M311 1045V1058M307 1051H315" stroke="#fff" stroke-width="1.6"/><circle cx="311" cy="1051" r="2.3" fill="#404040" stroke="#fff" stroke-width="1.4"/>
<rect x="404" y="979" width="97" height="16" fill="#ff0080" />
<rect x="404" y="995" width="97" height="66" fill="#404040" />
<text x="408" y="992" font-size="13" fill="#000" text-anchor="start" font-weight="normal" >Z2</text>
<text x="499" y="992" font-size="13" fill="#000" text-anchor="end" font-weight="normal" >zoom(C4)</text>
<text x="499" y="1009" font-size="13" fill="#fff" text-anchor="end" font-weight="normal" >500 mV/</text>
<text x="499" y="1024" font-size="13" fill="#fff" text-anchor="end" font-weight="normal" >5.00 ms/</text>
<text x="499" y="1057" font-size="13" fill="#fff" text-anchor="end" font-weight="normal" >956.5 mV</text>
<path d="M411 1045V1058M407 1051H415" stroke="#fff" stroke-width="1.6"/><circle cx="411" cy="1051" r="2.3" fill="#404040" stroke="#fff" stroke-width="1.4"/>
<rect x="503" y="978" width="99" height="84" fill="#1e90ff" />
<rect x="505" y="995" width="95" height="65" fill="#2c4a64" />
<rect x="505" y="980" width="95" height="15" fill="#00ffff" />
<text x="508" y="992" font-size="13" fill="#000" text-anchor="start" font-weight="normal" >Z3</text>
<text x="599" y="992" font-size="13" fill="#000" text-anchor="end" font-weight="normal" >zoom(Z2)</text>
<text x="599" y="1009" font-size="13" fill="#fff" text-anchor="end" font-weight="normal" >200 mV/</text>
<text x="599" y="1024" font-size="13" fill="#fff" text-anchor="end" font-weight="normal" >20.5 µs/</text>
<text x="599" y="1057" font-size="13" fill="#fff" text-anchor="end" font-weight="normal" >956.5 mV</text>
<path d="M511 1045V1058M507 1051H515" stroke="#fff" stroke-width="1.6"/><circle cx="511" cy="1051" r="2.3" fill="#404040" stroke="#fff" stroke-width="1.4"/>
<rect x="604.5" y="979.5" width="96" height="81" fill="#000" stroke="#fff" stroke-width="1.2" stroke-dasharray="3 2"/>
<path d="M651 1013V1027M644 1020H658" stroke="#fff" stroke-width="2"/>
<rect x="1703" y="979" width="112" height="16" fill="#f4f4f4" />
<rect x="1703" y="995" width="112" height="32" fill="#404040" />
<text x="1707" y="992" font-size="13" fill="#000" text-anchor="start" font-weight="normal" >Tbase</text>
<text x="1812" y="992" font-size="13" fill="#000" text-anchor="end" font-weight="normal" >-400 ms</text>
<text x="1813" y="1009" font-size="13" fill="#fff" text-anchor="end" font-weight="normal" >100 ms/div</text>
<text x="1707" y="1024" font-size="13" fill="#fff" text-anchor="start" font-weight="normal" >10 MS</text>
<text x="1813" y="1024" font-size="13" fill="#fff" text-anchor="end" font-weight="normal" >10 MS/s</text>
<rect x="1818" y="979" width="97" height="16" fill="#f4f4f4" />
<rect x="1818" y="995" width="97" height="32" fill="#404040" />
<text x="1821" y="992" font-size="13" fill="#000" text-anchor="start" font-weight="normal" >Trigger</text>
<rect x="1897.5" y="980.5" width="16" height="13" rx="2.5" fill="#3a3a3a" stroke="#222" stroke-width="0.8"/>
<text x="1905.5" y="991.5" font-size="11" fill="#f0f0f0" text-anchor="middle" font-weight="bold" >DC</text>
<text x="1821" y="1009" font-size="13" fill="#fff" text-anchor="start" font-weight="normal" >Stop</text>
<text x="1912" y="1009" font-size="13" fill="#fff" text-anchor="end" font-weight="normal" >-1.500 V</text>
<text x="1821" y="1024" font-size="13" fill="#fff" text-anchor="start" font-weight="normal" >DP-AUX</text>
<text x="1709" y="1040" font-size="13" fill="#fff" text-anchor="start" font-weight="normal" >X1=</text>
<text x="1815" y="1040" font-size="13" fill="#fff" text-anchor="end" font-weight="normal" >551.1509 ms</text>
<rect x="0" y="1062" width="1920" height="18" fill="#262626" />
<rect x="0" y="1062" width="1920" height="1" fill="#5a5a5a" />
<text x="7" y="1077.5" font-size="15" fill="#e8e8e8" text-anchor="start" font-weight="bold" textLength="66" lengthAdjust="spacingAndGlyphs" >TELEDYNE</text>
<text x="79" y="1077.5" font-size="15" fill="#d8d8d8" text-anchor="start" font-weight="normal" textLength="43.5" lengthAdjust="spacingAndGlyphs" >LECROY</text>
<rect x="128.5" y="1066" width="1.2" height="11" fill="#d0d0d0" />
<text x="134.5" y="1077" font-size="14" fill="#3cb43c" text-anchor="start" font-weight="bold" textLength="19" lengthAdjust="spacingAndGlyphs" >HD</text>
<text x="159" y="1077" font-size="14" fill="#f0f0f0" text-anchor="start" font-weight="normal" textLength="41" lengthAdjust="spacingAndGlyphs" >12 bits</text>
<text x="1903" y="1077" font-size="14" fill="#f0f0f0" text-anchor="end" font-weight="normal" textLength="131" lengthAdjust="spacingAndGlyphs" >11/23/2024 8:39:41 AM</text>
<rect x="880" y="1070" width="160" height="4" fill="#d4d4d4" />
<!--END-->
</svg></body></html>
